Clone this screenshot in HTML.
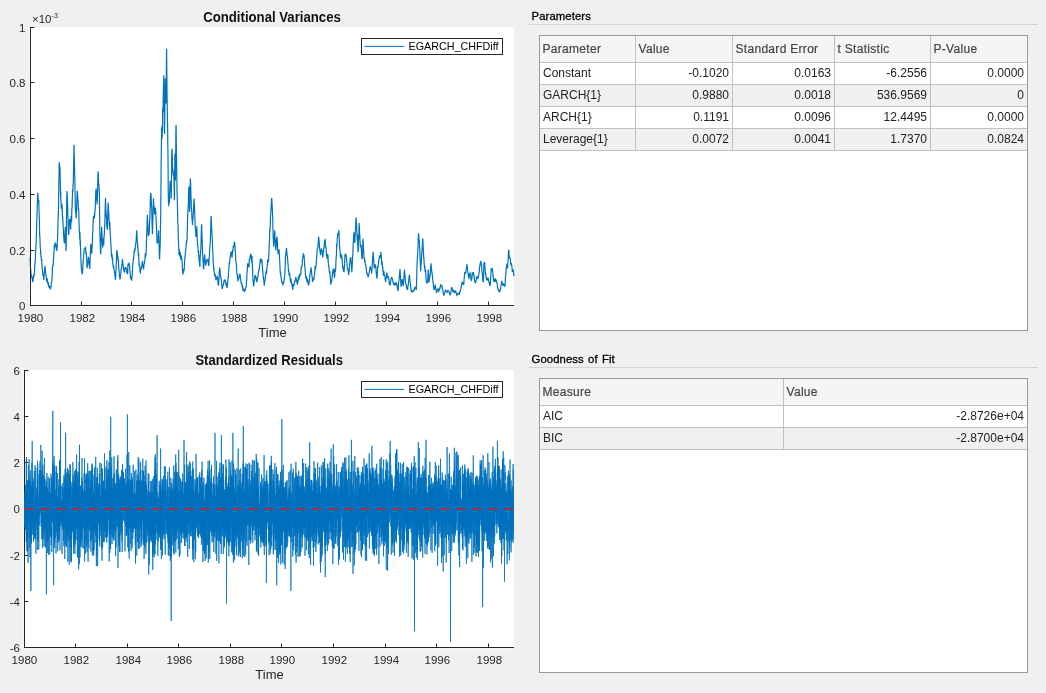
<!DOCTYPE html>
<html><head><meta charset="utf-8"><title>EGARCH</title>
<style>
html,body{margin:0;padding:0}
body{width:1046px;height:693px;background:#f0f0f0;position:relative;overflow:hidden;font-family:"Liberation Sans",sans-serif}
svg{position:absolute;left:0;top:0;will-change:transform}
#t{position:absolute;left:0;top:0;width:1046px;height:693px;will-change:transform}
svg text{font-family:"Liberation Sans",sans-serif}
.tk{font-size:11.5px;fill:#262626}
.lab{font-size:13px;fill:#262626}
.ttl{font-size:13.8px;font-weight:bold;fill:#111}
.lg{font-size:10.75px;fill:#000}
.pt{position:absolute;left:531.5px;font-size:11.3px;line-height:14px;color:#000;white-space:nowrap;letter-spacing:0.1px;word-spacing:1px;-webkit-text-stroke:0.3px #000}
.ul{position:absolute;left:529px;width:509px;height:1px;background:#d4d4d4}
.tb{position:absolute;border:1px solid #999;background:#fff}
.hd{position:absolute;background:#f5f5f5}
.alt{position:absolute;height:21px;background:#f0f0f0}
.hl{position:absolute;height:1px;background:#c0c0c0}
.vl{position:absolute;width:1px;background:#c0c0c0}
.ht{position:absolute;font-size:12px;line-height:14px;color:#444;white-space:nowrap;letter-spacing:0.3px;margin-left:-0.5px;-webkit-text-stroke:0.2px #444}
.ct{position:absolute;font-size:12px;line-height:14px;color:#222;white-space:nowrap}
.ct.r{text-align:right}
</style></head><body>
<svg width="1046" height="693" viewBox="0 0 1046 693">
<rect x="29" y="27" width="485" height="280" fill="#f6f6f6"/><rect x="30" y="27" width="484" height="279" fill="#fff"/>
<path d="M30.03 257.5 30.15 259.7 30.27 263.0 30.39 265.7 30.51 267.0 30.63 269.7 30.75 269.8 30.87 272.0 30.99 272.7 31.11 274.7 31.23 275.6 31.35 277.0 31.47 276.0 31.59 276.1 31.71 277.0 31.83 277.8 31.95 277.2 32.07 276.6 32.19 277.5 32.31 279.0 32.43 280.3 32.55 282.0 32.67 281.7 32.79 281.3 32.91 281.2 33.03 280.9 33.15 280.5 33.27 277.6 33.39 277.3 33.51 275.6 33.63 275.7 33.75 275.4 33.87 275.8 33.99 276.4 34.11 275.6 34.23 274.6 34.35 273.5 34.47 271.5 34.59 270.3 34.71 266.7 34.83 265.1 34.95 264.6 35.07 263.3 35.19 260.0 35.31 260.2 35.43 255.9 35.55 251.2 35.67 250.9 35.79 250.4 35.91 247.5 36.03 245.1 36.15 244.3 36.27 238.8 36.39 234.7 36.51 231.4 36.63 227.1 36.75 220.4 36.87 217.7 36.99 215.3 37.11 210.4 37.23 206.4 37.35 202.5 37.47 198.5 37.59 193.9 37.71 192.8 37.83 195.2 37.95 196.6 38.07 196.9 38.19 197.8 38.31 201.2 38.43 200.4 38.55 203.0 38.67 202.0 38.79 199.9 38.91 206.1 39.03 211.2 39.15 214.5 39.27 216.9 39.39 219.2 39.51 227.3 39.63 233.8 39.75 238.1 39.87 236.3 39.99 240.0 40.11 243.8 40.23 247.3 40.35 248.2 40.47 248.9 40.59 251.3 40.71 255.1 40.83 253.7 40.95 256.2 41.07 257.1 41.19 256.3 41.31 259.8 41.43 260.0 41.55 260.4 41.67 258.8 41.79 261.0 41.91 264.3 42.03 266.5 42.15 267.5 42.27 269.8 42.39 269.3 42.51 270.7 42.63 272.4 42.75 272.1 42.87 274.4 42.99 275.1 43.11 275.1 43.23 274.0 43.35 275.8 43.47 276.0 43.59 278.0 43.71 279.6 43.83 279.4 43.95 277.0 44.07 275.6 44.19 273.7 44.31 272.3 44.43 271.4 44.55 270.4 44.67 269.0 44.79 267.9 44.91 266.9 45.03 266.0 45.15 267.3 45.27 268.5 45.39 270.0 45.51 271.5 45.63 272.7 45.75 274.5 45.87 275.4 45.99 276.5 46.11 275.6 46.23 277.3 46.35 278.6 46.47 279.6 46.59 281.1 46.71 280.7 46.83 281.6 46.95 282.1 47.07 280.1 47.19 278.3 47.31 278.8 47.43 280.3 47.55 281.4 47.67 282.5 47.79 283.4 47.91 283.6 48.03 284.4 48.15 285.0 48.27 282.3 48.39 283.3 48.51 284.1 48.63 285.4 48.75 286.3 48.87 287.2 48.99 285.4 49.11 286.2 49.23 286.0 49.35 286.0 49.47 287.3 49.59 287.2 49.71 287.2 49.83 286.5 49.95 286.3 50.07 287.5 50.19 288.5 50.31 288.9 50.43 288.8 50.55 287.7 50.67 287.9 50.79 288.1 50.91 288.0 51.03 286.2 51.15 285.8 51.27 283.8 51.39 283.5 51.51 283.0 51.63 281.5 51.75 281.1 51.87 280.8 51.99 277.6 52.11 275.5 52.23 275.2 52.35 268.6 52.47 267.3 52.59 265.8 52.71 266.3 52.83 266.7 52.95 265.3 53.07 265.4 53.19 264.0 53.31 261.2 53.43 258.6 53.55 257.9 53.67 256.9 53.79 255.8 53.91 253.4 54.03 250.4 54.15 249.6 54.27 245.7 54.39 245.7 54.51 248.3 54.63 247.1 54.75 246.7 54.87 244.0 54.99 244.7 55.11 243.0 55.23 243.1 55.35 244.7 55.47 243.8 55.59 243.5 55.71 244.3 55.83 244.4 55.95 244.5 56.07 246.1 56.19 247.2 56.31 248.7 56.43 249.8 56.55 250.2 56.67 250.5 56.79 250.5 56.91 248.9 57.03 245.9 57.15 245.8 57.27 245.9 57.39 240.8 57.51 241.2 57.63 234.4 57.75 234.4 57.87 226.6 57.99 221.8 58.11 219.3 58.23 215.7 58.35 213.4 58.47 207.5 58.59 202.2 58.71 192.8 58.83 187.0 58.95 178.8 59.07 170.7 59.19 163.7 59.31 162.3 59.43 164.1 59.55 164.9 59.67 166.7 59.79 166.6 59.91 167.4 60.03 169.1 60.15 175.6 60.27 181.6 60.39 188.3 60.51 192.2 60.63 197.4 60.75 191.0 60.87 198.7 60.99 201.8 61.11 201.3 61.23 207.5 61.35 206.5 61.47 208.9 61.59 206.4 61.71 203.4 61.83 206.4 61.95 205.0 62.07 205.4 62.19 211.4 62.31 211.3 62.43 216.6 62.55 217.0 62.67 216.0 62.79 219.6 62.91 220.1 63.03 224.0 63.15 226.1 63.27 228.8 63.39 228.3 63.51 233.8 63.63 234.7 63.75 238.1 63.87 235.1 63.99 239.3 64.11 242.3 64.23 242.1 64.35 243.5 64.47 242.7 64.59 238.5 64.71 236.8 64.83 235.6 64.95 233.9 65.07 231.5 65.19 229.2 65.31 227.0 65.43 230.1 65.55 234.3 65.67 238.7 65.79 243.5 65.91 246.7 66.03 250.9 66.15 248.1 66.27 239.2 66.39 230.0 66.51 218.3 66.63 208.4 66.75 199.5 66.87 191.1 66.99 192.8 67.11 195.0 67.23 195.4 67.35 199.4 67.47 202.8 67.59 205.3 67.71 208.3 67.83 213.6 67.95 218.0 68.07 219.9 68.19 225.7 68.31 230.4 68.43 231.7 68.55 235.0 68.67 234.8 68.79 234.3 68.91 232.0 69.03 229.7 69.15 223.9 69.27 222.2 69.39 221.4 69.51 219.7 69.63 219.1 69.75 219.6 69.87 219.8 69.99 221.1 70.11 223.4 70.23 225.1 70.35 224.8 70.47 225.4 70.59 228.2 70.71 229.5 70.83 225.5 70.95 218.8 71.07 216.1 71.19 216.6 71.31 218.6 71.43 221.2 71.55 222.5 71.67 220.9 71.79 210.5 71.91 208.3 72.03 207.4 72.15 205.7 72.27 198.7 72.39 197.9 72.51 190.4 72.63 190.0 72.75 190.2 72.87 191.7 72.99 185.2 73.11 184.7 73.23 184.9 73.35 179.0 73.47 172.8 73.59 167.2 73.71 160.0 73.83 152.6 73.95 144.7 74.07 147.1 74.19 152.4 74.31 156.7 74.43 162.8 74.55 167.3 74.67 172.3 74.79 179.2 74.91 185.8 75.03 191.8 75.15 198.6 75.27 204.1 75.39 209.9 75.51 210.3 75.63 213.0 75.75 210.4 75.87 212.4 75.99 216.0 76.11 217.6 76.23 218.3 76.35 212.9 76.47 211.8 76.59 208.2 76.71 204.7 76.83 201.2 76.95 196.3 77.07 194.1 77.19 191.6 77.31 190.9 77.43 192.1 77.55 193.7 77.67 195.7 77.79 198.0 77.91 201.3 78.03 200.4 78.15 202.2 78.27 207.2 78.39 210.2 78.51 207.8 78.63 209.3 78.75 210.5 78.87 213.4 78.99 221.0 79.11 223.9 79.23 229.7 79.35 230.1 79.47 233.0 79.59 234.2 79.71 239.3 79.83 232.1 79.95 232.9 80.07 239.5 80.19 245.3 80.31 239.3 80.43 245.3 80.55 247.9 80.67 250.0 80.79 255.9 80.91 258.0 81.03 262.3 81.15 265.6 81.27 266.5 81.39 267.7 81.51 269.9 81.63 269.6 81.75 270.2 81.87 271.6 81.99 273.1 82.11 274.2 82.23 273.9 82.35 273.6 82.47 272.3 82.59 272.1 82.71 269.1 82.83 268.0 82.95 263.8 83.07 262.4 83.19 260.8 83.31 259.2 83.43 258.9 83.55 258.3 83.67 256.2 83.79 253.2 83.91 252.6 84.03 251.3 84.15 250.5 84.27 249.9 84.39 248.9 84.51 248.9 84.63 248.9 84.75 248.3 84.87 249.2 84.99 249.4 85.11 248.5 85.23 247.4 85.35 247.4 85.47 248.4 85.59 247.7 85.71 250.3 85.83 252.1 85.95 252.8 86.07 254.1 86.19 252.4 86.31 252.4 86.43 253.5 86.55 256.8 86.67 258.4 86.79 259.9 86.91 263.6 87.03 266.7 87.15 268.2 87.27 266.5 87.39 265.0 87.51 265.2 87.63 264.8 87.75 264.0 87.87 263.3 87.99 261.8 88.11 260.3 88.23 259.0 88.35 257.7 88.47 256.7 88.59 258.3 88.71 258.9 88.83 259.9 88.95 261.6 89.07 262.1 89.19 263.8 89.31 265.5 89.43 265.9 89.55 267.7 89.67 269.0 89.79 267.7 89.91 264.6 90.03 262.3 90.15 259.1 90.27 256.4 90.39 253.5 90.51 250.0 90.63 246.8 90.75 243.9 90.87 244.8 90.99 245.9 91.11 246.8 91.23 247.4 91.35 248.9 91.47 250.0 91.59 251.7 91.71 252.5 91.83 253.7 91.95 249.1 92.07 249.5 92.19 245.3 92.31 244.6 92.43 240.2 92.55 234.4 92.67 232.9 92.79 231.9 92.91 229.6 93.03 224.0 93.15 223.0 93.27 220.4 93.39 218.6 93.51 216.7 93.63 216.2 93.75 216.7 93.87 217.2 93.99 217.4 94.11 216.6 94.23 216.8 94.35 218.5 94.47 213.5 94.59 215.2 94.71 216.0 94.83 211.1 94.95 212.3 95.07 210.0 95.19 208.8 95.31 206.1 95.43 202.9 95.55 200.2 95.67 195.2 95.79 191.7 95.91 190.8 96.03 188.7 96.15 189.3 96.27 190.5 96.39 192.5 96.51 194.4 96.63 197.1 96.75 199.6 96.87 201.3 96.99 200.4 97.11 204.4 97.23 201.0 97.35 196.2 97.47 194.1 97.59 190.4 97.71 183.7 97.83 179.0 97.95 175.6 98.07 171.4 98.19 172.6 98.31 175.3 98.43 178.6 98.55 183.3 98.67 184.7 98.79 183.8 98.91 184.0 99.03 186.6 99.15 188.7 99.27 192.1 99.39 195.7 99.51 205.0 99.63 215.7 99.75 224.6 99.87 233.4 99.99 235.8 100.11 241.7 100.23 242.4 100.35 247.3 100.47 250.7 100.59 253.4 100.71 253.5 100.83 249.9 100.95 247.2 101.07 244.0 101.19 239.0 101.31 235.6 101.43 232.9 101.55 229.6 101.67 226.8 101.79 229.7 101.91 232.7 102.03 235.8 102.15 238.7 102.27 241.3 102.39 240.8 102.51 243.6 102.63 247.7 102.75 241.7 102.87 238.6 102.99 239.2 103.11 240.8 103.23 242.5 103.35 242.9 103.47 244.2 103.59 244.3 103.71 245.5 103.83 242.9 103.95 237.3 104.07 235.7 104.19 236.6 104.31 234.1 104.43 231.7 104.55 229.8 104.67 228.5 104.79 224.5 104.91 219.3 105.03 215.1 105.15 210.2 105.27 205.6 105.39 200.1 105.51 197.9 105.63 201.2 105.75 204.6 105.87 208.5 105.99 211.1 106.11 213.8 106.23 216.4 106.35 214.6 106.47 218.2 106.59 222.2 106.71 226.2 106.83 223.2 106.95 226.4 107.07 226.5 107.19 228.5 107.31 229.6 107.43 227.9 107.55 222.2 107.67 216.9 107.79 213.6 107.91 209.9 108.03 207.4 108.15 205.2 108.27 202.6 108.39 205.5 108.51 208.0 108.63 211.5 108.75 212.7 108.87 216.0 108.99 218.6 109.11 220.3 109.23 222.4 109.35 225.7 109.47 222.7 109.59 225.6 109.71 229.4 109.83 222.1 109.95 226.6 110.07 229.9 110.19 232.7 110.31 235.2 110.43 236.5 110.55 237.3 110.67 240.6 110.79 243.7 110.91 243.4 111.03 246.8 111.15 248.7 111.27 250.2 111.39 253.1 111.51 255.6 111.63 257.2 111.75 256.0 111.87 253.7 111.99 256.0 112.11 255.9 112.23 257.1 112.35 259.8 112.47 260.0 112.59 257.8 112.71 260.2 112.83 263.0 112.95 265.0 113.07 264.2 113.19 266.5 113.31 267.0 113.43 267.9 113.55 267.6 113.67 265.6 113.79 267.9 113.91 269.3 114.03 270.2 114.15 269.8 114.27 271.3 114.39 272.0 114.51 272.9 114.63 272.2 114.75 273.3 114.87 275.4 114.99 275.4 115.11 277.1 115.23 278.3 115.35 278.9 115.47 279.8 115.59 278.4 115.71 277.1 115.83 271.6 115.95 269.6 116.07 268.2 116.19 266.2 116.31 263.0 116.43 260.1 116.55 256.9 116.67 254.5 116.79 252.1 116.91 250.0 117.03 250.6 117.15 251.8 117.27 253.3 117.39 254.3 117.51 256.0 117.63 255.8 117.75 256.9 117.87 259.2 117.99 256.5 118.11 258.0 118.23 261.0 118.35 262.1 118.47 259.0 118.59 263.2 118.71 266.2 118.83 268.3 118.95 269.4 119.07 270.9 119.19 271.8 119.31 274.1 119.43 275.9 119.55 277.4 119.67 277.2 119.79 278.0 119.91 279.5 120.03 278.9 120.15 279.1 120.27 277.9 120.39 275.3 120.51 275.1 120.63 274.4 120.75 272.7 120.87 273.0 120.99 271.2 121.11 268.7 121.23 269.3 121.35 268.5 121.47 269.1 121.59 268.8 121.71 266.8 121.83 265.3 121.95 264.8 122.07 263.9 122.19 262.6 122.31 261.3 122.43 259.7 122.55 259.8 122.67 261.3 122.79 262.0 122.91 263.4 123.03 264.5 123.15 264.7 123.27 266.3 123.39 268.1 123.51 267.5 123.63 269.3 123.75 270.1 123.87 268.9 123.99 271.5 124.11 270.0 124.23 270.4 124.35 271.3 124.47 272.1 124.59 272.5 124.71 271.0 124.83 267.7 124.95 268.2 125.07 268.5 125.19 268.5 125.31 268.2 125.43 268.0 125.55 267.8 125.67 267.6 125.79 267.2 125.91 267.6 126.03 267.9 126.15 268.1 126.27 268.6 126.39 269.2 126.51 270.1 126.63 270.2 126.75 271.5 126.87 272.4 126.99 273.0 127.11 271.5 127.23 273.3 127.35 274.2 127.47 273.1 127.59 274.0 127.71 272.5 127.83 267.9 127.95 264.7 128.07 263.7 128.19 265.3 128.31 265.7 128.43 265.1 128.55 264.9 128.67 264.9 128.79 264.2 128.91 263.8 129.03 263.0 129.15 263.0 129.27 263.9 129.39 265.2 129.51 265.6 129.63 267.0 129.75 268.4 129.87 269.7 129.99 270.9 130.11 271.8 130.23 273.4 130.35 275.4 130.47 276.4 130.59 278.4 130.71 278.7 130.83 278.2 130.95 276.7 131.07 278.0 131.19 279.6 131.31 278.4 131.43 277.2 131.55 279.1 131.67 280.8 131.79 279.5 131.91 277.3 132.03 276.2 132.15 276.0 132.27 272.8 132.39 272.1 132.51 269.1 132.63 265.7 132.75 263.9 132.87 264.0 132.99 263.4 133.11 263.0 133.23 259.7 133.35 260.3 133.47 258.4 133.59 258.5 133.71 257.0 133.83 256.0 133.95 256.8 134.07 251.3 134.19 251.2 134.31 252.7 134.43 251.1 134.55 250.7 134.67 251.6 134.79 249.4 134.91 249.5 135.03 249.1 135.15 250.4 135.27 246.2 135.39 246.5 135.51 246.1 135.63 244.1 135.75 244.3 135.87 243.4 135.99 241.7 136.11 240.4 136.23 238.2 136.35 236.4 136.47 234.1 136.59 232.2 136.71 230.3 136.83 232.6 136.95 234.6 137.07 237.1 137.19 239.6 137.31 241.3 137.43 241.7 137.55 243.8 137.67 246.1 137.79 248.2 137.91 245.4 138.03 249.2 138.15 250.0 138.27 253.6 138.39 255.9 138.51 253.2 138.63 252.8 138.75 258.4 138.87 260.9 138.99 264.4 139.11 266.1 139.23 262.8 139.35 266.2 139.47 266.0 139.59 266.9 139.71 266.8 139.83 267.0 139.95 269.3 140.07 272.0 140.19 271.6 140.31 273.7 140.43 272.5 140.55 270.9 140.67 269.5 140.79 269.4 140.91 269.5 141.03 268.9 141.15 269.3 141.27 269.1 141.39 266.2 141.51 267.6 141.63 266.7 141.75 266.4 141.87 265.9 141.99 263.0 142.11 265.2 142.23 266.1 142.35 260.7 142.47 261.7 142.59 263.9 142.71 266.3 142.83 265.8 142.95 267.0 143.07 265.7 143.19 266.2 143.31 267.5 143.43 268.2 143.55 269.4 143.67 268.8 143.79 266.3 143.91 264.0 144.03 264.3 144.15 264.1 144.27 264.4 144.39 262.1 144.51 260.9 144.63 261.8 144.75 260.9 144.87 260.2 144.99 260.5 145.11 256.3 145.23 253.3 145.35 254.1 145.47 255.7 145.59 256.4 145.71 256.6 145.83 256.4 145.95 254.4 146.07 253.2 146.19 250.8 146.31 247.5 146.43 243.1 146.55 239.4 146.67 235.0 146.79 231.5 146.91 227.9 147.03 224.8 147.15 220.7 147.27 217.7 147.39 214.8 147.51 217.4 147.63 220.3 147.75 222.0 147.87 224.6 147.99 227.8 148.11 230.8 148.23 234.4 148.35 236.1 148.47 235.5 148.59 233.0 148.71 231.7 148.83 232.3 148.95 234.0 149.07 234.1 149.19 232.9 149.31 231.9 149.43 225.5 149.55 223.5 149.67 222.1 149.79 217.7 149.91 215.7 150.03 211.9 150.15 209.0 150.27 202.1 150.39 197.4 150.51 195.8 150.63 193.1 150.75 193.5 150.87 193.8 150.99 193.8 151.11 196.7 151.23 199.3 151.35 203.3 151.47 206.4 151.59 205.4 151.71 207.7 151.83 212.5 151.95 219.0 152.07 223.3 152.19 226.3 152.31 230.3 152.43 234.3 152.55 232.2 152.67 224.7 152.79 222.3 152.91 218.9 153.03 214.0 153.15 209.5 153.27 205.5 153.39 200.7 153.51 198.4 153.63 201.3 153.75 202.5 153.87 205.0 153.99 205.9 154.11 208.0 154.23 207.9 154.35 209.8 154.47 212.2 154.59 213.9 154.71 214.3 154.83 213.2 154.95 212.8 155.07 210.9 155.19 210.5 155.31 208.4 155.43 208.3 155.55 209.2 155.67 210.8 155.79 213.3 155.91 215.9 156.03 217.1 156.15 221.3 156.27 223.7 156.39 224.6 156.51 228.4 156.63 232.0 156.75 236.2 156.87 239.5 156.99 242.2 157.11 243.6 157.23 241.7 157.35 239.7 157.47 241.1 157.59 242.2 157.71 242.5 157.83 242.0 157.95 240.1 158.07 238.9 158.19 236.7 158.31 234.7 158.43 232.1 158.55 230.4 158.67 233.7 158.79 237.3 158.91 241.3 159.03 245.3 159.15 248.2 159.27 252.5 159.39 255.5 159.51 258.7 159.63 259.5 159.75 254.2 159.87 251.5 159.99 249.4 160.11 246.1 160.23 242.7 160.35 234.2 160.47 224.5 160.59 225.1 160.71 214.7 160.83 199.8 160.95 187.8 161.07 171.9 161.19 159.0 161.31 151.1 161.43 143.3 161.55 127.3 161.67 134.7 161.79 134.4 161.91 138.3 162.03 138.8 162.15 137.3 162.27 124.9 162.39 126.3 162.51 131.0 162.63 112.9 162.75 108.0 162.87 111.1 162.99 111.9 163.11 108.3 163.23 97.1 163.35 92.7 163.47 85.7 163.59 82.3 163.71 76.7 163.83 75.2 163.95 86.2 164.07 95.4 164.19 104.5 164.31 117.6 164.43 130.2 164.55 134.1 164.67 127.0 164.79 116.6 164.91 102.5 165.03 95.0 165.15 87.8 165.27 79.3 165.39 79.2 165.51 83.3 165.63 89.1 165.75 92.7 165.87 100.3 165.99 103.6 166.11 96.1 166.23 84.8 166.35 74.2 166.47 61.9 166.59 48.8 166.71 59.5 166.83 72.1 166.95 82.0 167.07 96.1 167.19 103.9 167.31 109.3 167.43 117.9 167.55 126.3 167.67 130.0 167.79 144.8 167.91 148.6 168.03 159.9 168.15 176.6 168.27 191.6 168.39 198.7 168.51 203.4 168.63 202.5 168.75 206.3 168.87 197.7 168.99 202.5 169.11 202.6 169.23 203.0 169.35 202.9 169.47 201.7 169.59 192.8 169.71 190.6 169.83 188.4 169.95 185.9 170.07 182.9 170.19 181.5 170.31 180.9 170.43 182.8 170.55 183.9 170.67 185.0 170.79 187.3 170.91 189.9 171.03 193.9 171.15 197.9 171.27 198.7 171.39 187.3 171.51 175.3 171.63 164.6 171.75 152.8 171.87 148.7 171.99 149.3 172.11 151.8 172.23 154.5 172.35 158.4 172.47 163.6 172.59 167.8 172.71 168.6 172.83 172.8 172.95 172.0 173.07 170.3 173.19 174.2 173.31 175.2 173.43 172.3 173.55 175.8 173.67 175.9 173.79 174.3 173.91 180.8 174.03 180.5 174.15 187.1 174.27 194.1 174.39 200.2 174.51 190.5 174.63 179.0 174.75 166.0 174.87 153.5 174.99 156.3 175.11 163.5 175.23 171.8 175.35 180.6 175.47 176.9 175.59 165.0 175.71 153.0 175.83 139.3 175.95 125.4 176.07 125.1 176.19 133.7 176.31 143.5 176.43 153.3 176.55 158.5 176.67 167.7 176.79 175.9 176.91 181.3 177.03 189.4 177.15 193.9 177.27 198.5 177.39 201.8 177.51 210.7 177.63 212.9 177.75 218.7 177.87 224.7 177.99 224.3 178.11 228.3 178.23 233.9 178.35 237.9 178.47 241.7 178.59 245.0 178.71 247.5 178.83 248.8 178.95 252.8 179.07 255.0 179.19 250.0 179.31 248.9 179.43 252.6 179.55 251.0 179.67 254.3 179.79 255.9 179.91 255.2 180.03 255.8 180.15 253.7 180.27 257.3 180.39 252.2 180.51 256.2 180.63 256.9 180.75 259.0 180.87 258.9 180.99 257.9 181.11 257.7 181.23 255.4 181.35 255.8 181.47 257.7 181.59 256.7 181.71 258.3 181.83 259.7 181.95 260.5 182.07 261.8 182.19 264.3 182.31 266.8 182.43 269.1 182.55 271.3 182.67 273.1 182.79 273.4 182.91 273.4 183.03 274.5 183.15 273.0 183.27 270.6 183.39 271.8 183.51 270.3 183.63 268.7 183.75 269.8 183.87 271.1 183.99 269.7 184.11 270.1 184.23 269.5 184.35 267.3 184.47 263.1 184.59 262.1 184.71 259.7 184.83 259.1 184.95 256.9 185.07 257.4 185.19 255.1 185.31 253.3 185.43 251.6 185.55 250.8 185.67 250.7 185.79 250.6 185.91 248.4 186.03 247.8 186.15 243.1 186.27 243.3 186.39 242.5 186.51 243.8 186.63 240.7 186.75 240.0 186.87 240.9 186.99 240.8 187.11 238.7 187.23 231.1 187.35 231.3 187.47 221.5 187.59 215.8 187.71 214.7 187.83 214.3 187.95 208.9 188.07 210.6 188.19 209.2 188.31 204.7 188.43 200.8 188.55 195.3 188.67 191.4 188.79 187.2 188.91 186.5 189.03 191.3 189.15 195.3 189.27 198.9 189.39 204.1 189.51 208.0 189.63 212.0 189.75 206.6 189.87 200.5 189.99 194.2 190.11 188.6 190.23 183.4 190.35 178.4 190.47 179.5 190.59 182.6 190.71 186.3 190.83 190.5 190.95 195.2 191.07 200.4 191.19 201.2 191.31 206.8 191.43 208.2 191.55 209.3 191.67 210.5 191.79 214.0 191.91 216.6 192.03 220.7 192.15 218.9 192.27 220.5 192.39 223.7 192.51 225.0 192.63 220.5 192.75 220.7 192.87 220.2 192.99 217.9 193.11 216.5 193.23 214.8 193.35 213.2 193.47 210.7 193.59 206.5 193.71 205.2 193.83 202.5 193.95 202.0 194.07 200.3 194.19 198.6 194.31 201.9 194.43 205.0 194.55 209.2 194.67 212.5 194.79 214.5 194.91 217.2 195.03 222.4 195.15 225.3 195.27 227.7 195.39 227.2 195.51 230.4 195.63 230.0 195.75 234.5 195.87 236.3 195.99 237.0 196.11 234.2 196.23 232.8 196.35 236.5 196.47 234.4 196.59 235.2 196.71 235.7 196.83 230.5 196.95 226.3 197.07 232.9 197.19 237.7 197.31 242.3 197.43 242.3 197.55 242.1 197.67 246.3 197.79 246.1 197.91 247.0 198.03 249.5 198.15 250.5 198.27 253.0 198.39 250.6 198.51 250.7 198.63 254.1 198.75 257.0 198.87 254.6 198.99 257.7 199.11 260.4 199.23 260.3 199.35 260.3 199.47 262.9 199.59 263.9 199.71 265.2 199.83 266.9 199.95 265.9 200.07 258.4 200.19 257.6 200.31 255.2 200.43 253.9 200.55 251.5 200.67 250.7 200.79 250.4 200.91 246.9 201.03 243.4 201.15 238.9 201.27 234.3 201.39 229.6 201.51 224.8 201.63 224.8 201.75 228.3 201.87 232.0 201.99 235.8 202.11 237.6 202.23 242.0 202.35 246.3 202.47 249.2 202.59 253.1 202.71 254.5 202.83 256.3 202.95 259.1 203.07 262.6 203.19 265.1 203.31 264.8 203.43 267.9 203.55 269.0 203.67 269.2 203.79 266.3 203.91 264.8 204.03 262.6 204.15 260.4 204.27 259.4 204.39 258.0 204.51 255.7 204.63 254.6 204.75 255.6 204.87 256.8 204.99 258.1 205.11 259.7 205.23 261.5 205.35 261.2 205.47 263.2 205.59 264.7 205.71 264.4 205.83 265.6 205.95 264.9 206.07 261.7 206.19 261.3 206.31 261.5 206.43 261.6 206.55 260.5 206.67 261.1 206.79 260.3 206.91 260.6 207.03 259.9 207.15 259.7 207.27 259.8 207.39 259.6 207.51 259.3 207.63 259.3 207.75 259.6 207.87 260.4 207.99 260.7 208.11 261.6 208.23 262.8 208.35 263.5 208.47 264.8 208.59 264.5 208.71 266.0 208.83 264.1 208.95 264.7 209.07 258.6 209.19 258.9 209.31 256.1 209.43 255.7 209.55 253.5 209.67 249.5 209.79 248.3 209.91 246.2 210.03 245.3 210.15 245.0 210.27 241.9 210.39 238.2 210.51 233.3 210.63 231.2 210.75 228.0 210.87 223.8 210.99 220.8 211.11 217.4 211.23 216.1 211.35 218.6 211.47 221.8 211.59 225.5 211.71 229.4 211.83 231.8 211.95 234.7 212.07 235.1 212.19 238.7 212.31 241.0 212.43 241.8 212.55 246.3 212.67 250.5 212.79 251.6 212.91 253.7 213.03 256.8 213.15 260.3 213.27 262.9 213.39 264.7 213.51 265.8 213.63 267.1 213.75 269.9 213.87 267.3 213.99 270.3 214.11 271.3 214.23 271.5 214.35 273.6 214.47 274.6 214.59 276.1 214.71 275.1 214.83 275.2 214.95 275.1 215.07 273.8 215.19 275.3 215.31 275.4 215.43 276.3 215.55 276.7 215.67 278.2 215.79 278.8 215.91 280.3 216.03 279.7 216.15 279.7 216.27 279.3 216.39 278.5 216.51 277.8 216.63 277.7 216.75 277.4 216.87 277.2 216.99 277.0 217.11 276.6 217.23 276.3 217.35 276.4 217.47 277.3 217.59 278.2 217.71 279.4 217.83 280.5 217.95 281.8 218.07 282.9 218.19 284.0 218.31 283.9 218.43 285.0 218.55 285.7 218.67 284.0 218.79 281.4 218.91 279.4 219.03 277.6 219.15 275.6 219.27 273.1 219.39 271.0 219.51 268.7 219.63 267.5 219.75 268.3 219.87 269.0 219.99 270.1 220.11 271.2 220.23 272.7 220.35 273.9 220.47 274.7 220.59 275.3 220.71 276.8 220.83 277.3 220.95 279.3 221.07 278.9 221.19 279.3 221.31 279.4 221.43 281.4 221.55 282.8 221.67 284.1 221.79 285.2 221.91 286.1 222.03 287.3 222.15 288.4 222.27 287.6 222.39 288.9 222.51 287.9 222.63 287.3 222.75 285.7 222.87 285.0 222.99 285.4 223.11 285.5 223.23 285.4 223.35 284.8 223.47 284.5 223.59 283.8 223.71 282.5 223.83 281.8 223.95 281.2 224.07 280.4 224.19 279.9 224.31 280.2 224.43 280.4 224.55 280.6 224.67 280.3 224.79 280.6 224.91 281.3 225.03 279.7 225.15 280.6 225.27 281.6 225.39 280.8 225.51 281.9 225.63 282.9 225.75 283.8 225.87 284.5 225.99 283.6 226.11 283.6 226.23 282.5 226.35 284.1 226.47 285.7 226.59 286.3 226.71 286.4 226.83 286.5 226.95 287.3 227.07 287.3 227.19 287.0 227.31 286.4 227.43 284.9 227.55 284.2 227.67 283.5 227.79 282.0 227.91 280.2 228.03 277.5 228.15 277.3 228.27 276.8 228.39 276.9 228.51 271.8 228.63 270.5 228.75 270.7 228.87 268.4 228.99 268.3 229.11 266.2 229.23 262.0 229.35 263.3 229.47 263.5 229.59 263.9 229.71 261.4 229.83 260.4 229.95 259.7 230.07 258.4 230.19 256.9 230.31 256.1 230.43 256.1 230.55 255.5 230.67 254.4 230.79 253.8 230.91 252.6 231.03 251.5 231.15 252.3 231.27 252.8 231.39 252.7 231.51 253.7 231.63 254.4 231.75 254.3 231.87 255.6 231.99 257.6 232.11 256.6 232.23 254.7 232.35 254.0 232.47 250.4 232.59 251.8 232.71 252.5 232.83 249.6 232.95 250.2 233.07 250.3 233.19 246.3 233.31 246.2 233.43 247.6 233.55 246.6 233.67 246.1 233.79 246.0 233.91 246.3 234.03 246.3 234.15 243.9 234.27 243.5 234.39 242.6 234.51 241.6 234.63 241.9 234.75 243.8 234.87 245.8 234.99 246.9 235.11 248.7 235.23 250.1 235.35 252.2 235.47 253.6 235.59 256.6 235.71 259.2 235.83 260.7 235.95 262.2 236.07 261.5 236.19 263.3 236.31 264.0 236.43 265.6 236.55 267.3 236.67 270.3 236.79 272.7 236.91 272.9 237.03 275.0 237.15 274.4 237.27 274.4 237.39 276.2 237.51 277.2 237.63 277.8 237.75 278.7 237.87 280.0 237.99 281.4 238.11 277.1 238.23 278.0 238.35 278.7 238.47 278.9 238.59 278.8 238.71 279.0 238.83 279.0 238.95 278.2 239.07 276.6 239.19 276.5 239.31 275.7 239.43 274.6 239.55 274.8 239.67 274.5 239.79 274.1 239.91 273.5 240.03 274.5 240.15 275.7 240.27 276.4 240.39 277.4 240.51 277.6 240.63 278.5 240.75 279.8 240.87 281.3 240.99 282.2 241.11 283.4 241.23 282.7 241.35 282.1 241.47 284.1 241.59 283.7 241.71 283.7 241.83 283.3 241.95 284.7 242.07 285.5 242.19 286.6 242.31 287.8 242.43 285.0 242.55 286.2 242.67 287.9 242.79 289.0 242.91 290.2 243.03 290.1 243.15 288.9 243.27 288.9 243.39 289.8 243.51 290.5 243.63 290.9 243.75 290.5 243.87 289.9 243.99 288.9 244.11 289.5 244.23 290.3 244.35 291.1 244.47 290.0 244.59 290.7 244.71 291.0 244.83 290.7 244.95 290.9 245.07 290.4 245.19 289.7 245.31 289.6 245.43 288.8 245.55 288.2 245.67 288.0 245.79 287.7 245.91 286.8 246.03 286.6 246.15 286.2 246.27 285.8 246.39 284.8 246.51 281.0 246.63 280.3 246.75 279.7 246.87 275.4 246.99 273.0 247.11 271.5 247.23 271.0 247.35 270.2 247.47 266.5 247.59 264.6 247.71 264.4 247.83 263.8 247.95 263.9 248.07 264.9 248.19 265.2 248.31 264.7 248.43 265.4 248.55 266.0 248.67 267.0 248.79 267.0 248.91 267.3 249.03 265.5 249.15 262.7 249.27 259.5 249.39 260.6 249.51 259.2 249.63 259.2 249.75 258.6 249.87 258.3 249.99 257.8 250.11 257.2 250.23 256.2 250.35 255.6 250.47 254.7 250.59 254.5 250.71 254.5 250.83 254.0 250.95 254.3 251.07 255.3 251.19 256.4 251.31 257.4 251.43 259.4 251.55 261.6 251.67 262.7 251.79 262.2 251.91 259.2 252.03 256.1 252.15 260.6 252.27 262.9 252.39 265.8 252.51 268.8 252.63 271.8 252.75 274.6 252.87 276.0 252.99 278.2 253.11 280.5 253.23 282.0 253.35 283.0 253.47 284.9 253.59 286.5 253.71 285.9 253.83 284.7 253.95 283.9 254.07 282.4 254.19 281.6 254.31 281.0 254.43 280.3 254.55 279.6 254.67 278.5 254.79 277.1 254.91 276.5 255.03 275.7 255.15 274.8 255.27 275.3 255.39 275.8 255.51 276.3 255.63 277.0 255.75 277.4 255.87 277.6 255.99 277.8 256.11 278.3 256.23 278.3 256.35 279.4 256.47 280.1 256.59 281.2 256.71 281.1 256.83 281.4 256.95 281.3 257.07 281.0 257.19 280.2 257.31 278.5 257.43 276.6 257.55 277.1 257.67 277.8 257.79 276.3 257.91 276.0 258.03 275.5 258.15 275.3 258.27 274.4 258.39 271.2 258.51 271.9 258.63 272.0 258.75 271.5 258.87 270.2 258.99 268.4 259.11 269.9 259.23 269.0 259.35 269.4 259.47 267.6 259.59 266.1 259.71 265.6 259.83 263.6 259.95 264.3 260.07 262.1 260.19 261.9 260.31 261.2 260.43 258.6 260.55 259.7 260.67 259.6 260.79 261.3 260.91 261.0 261.03 261.9 261.15 262.2 261.27 262.2 261.39 261.4 261.51 260.9 261.63 260.1 261.75 259.1 261.87 260.6 261.99 261.7 262.11 263.1 262.23 265.0 262.35 266.8 262.47 268.3 262.59 268.6 262.71 270.7 262.83 271.6 262.95 273.3 263.07 275.3 263.19 276.7 263.31 276.6 263.43 277.0 263.55 278.1 263.67 279.8 263.79 280.0 263.91 281.8 264.03 283.4 264.15 284.1 264.27 285.1 264.39 285.1 264.51 283.4 264.63 282.4 264.75 281.4 264.87 280.0 264.99 280.6 265.11 280.3 265.23 278.7 265.35 276.3 265.47 276.0 265.59 275.5 265.71 275.1 265.83 274.4 265.95 272.6 266.07 270.7 266.19 272.2 266.31 272.2 266.43 273.6 266.55 272.7 266.67 269.5 266.79 268.5 266.91 268.6 267.03 266.6 267.15 266.8 267.27 265.4 267.39 264.3 267.51 264.9 267.63 259.5 267.75 260.4 267.87 262.4 267.99 260.7 268.11 261.0 268.23 260.9 268.35 261.5 268.47 261.4 268.59 258.5 268.71 256.7 268.83 254.7 268.95 254.4 269.07 247.6 269.19 247.1 269.31 241.8 269.43 240.6 269.55 237.3 269.67 230.6 269.79 230.7 269.91 230.8 270.03 229.4 270.15 227.1 270.27 225.5 270.39 222.2 270.51 215.1 270.63 214.3 270.75 213.3 270.87 212.0 270.99 209.3 271.11 208.4 271.23 205.5 271.35 203.8 271.47 201.5 271.59 198.6 271.71 198.1 271.83 199.9 271.95 201.2 272.07 203.9 272.19 207.2 272.31 208.0 272.43 210.9 272.55 215.0 272.67 218.1 272.79 222.8 272.91 228.3 273.03 230.2 273.15 236.2 273.27 238.5 273.39 239.5 273.51 242.8 273.63 246.1 273.75 246.6 273.87 243.9 273.99 242.5 274.11 240.8 274.23 237.5 274.35 235.5 274.47 234.2 274.59 232.3 274.71 230.4 274.83 232.8 274.95 235.2 275.07 238.0 275.19 239.7 275.31 241.9 275.43 243.8 275.55 245.5 275.67 249.3 275.79 250.3 275.91 249.7 276.03 247.8 276.15 247.1 276.27 245.9 276.39 240.4 276.51 240.4 276.63 238.5 276.75 238.4 276.87 237.8 276.99 236.8 277.11 238.5 277.23 240.4 277.35 242.8 277.47 244.3 277.59 246.5 277.71 248.9 277.83 251.5 277.95 251.5 278.07 253.5 278.19 253.4 278.31 252.8 278.43 252.3 278.55 251.1 278.67 250.4 278.79 250.0 278.91 249.8 279.03 249.4 279.15 251.5 279.27 253.3 279.39 255.8 279.51 257.8 279.63 260.3 279.75 261.8 279.87 264.3 279.99 267.2 280.11 269.8 280.23 271.8 280.35 273.6 280.47 273.8 280.59 271.8 280.71 274.3 280.83 275.1 280.95 276.6 281.07 277.8 281.19 277.0 281.31 278.2 281.43 279.6 281.55 280.3 281.67 281.2 281.79 282.4 281.91 282.5 282.03 282.5 282.15 282.4 282.27 282.9 282.39 283.2 282.51 283.7 282.63 282.7 282.75 282.8 282.87 284.2 282.99 284.8 283.11 284.7 283.23 283.9 283.35 282.7 283.47 282.9 283.59 283.2 283.71 282.3 283.83 282.3 283.95 281.0 284.07 279.5 284.19 279.1 284.31 279.7 284.43 277.6 284.55 276.6 284.67 276.2 284.79 275.3 284.91 272.5 285.03 270.7 285.15 266.3 285.27 264.1 285.39 258.0 285.51 256.5 285.63 254.5 285.75 254.6 285.87 254.0 285.99 252.7 286.11 251.4 286.23 249.9 286.35 248.6 286.47 248.6 286.59 249.7 286.71 250.7 286.83 251.8 286.95 253.2 287.07 254.4 287.19 255.7 287.31 255.8 287.43 257.3 287.55 257.6 287.67 260.4 287.79 261.0 287.91 262.9 288.03 263.6 288.15 267.1 288.27 266.6 288.39 269.2 288.51 271.1 288.63 272.0 288.75 270.0 288.87 272.2 288.99 273.7 289.11 275.8 289.23 275.1 289.35 275.7 289.47 274.9 289.59 272.8 289.71 273.8 289.83 275.4 289.95 276.9 290.07 277.8 290.19 278.3 290.31 280.1 290.43 281.3 290.55 281.8 290.67 282.1 290.79 282.3 290.91 281.5 291.03 278.6 291.15 280.7 291.27 282.4 291.39 282.3 291.51 282.5 291.63 283.7 291.75 283.0 291.87 283.6 291.99 285.3 292.11 285.8 292.23 286.2 292.35 287.3 292.47 288.1 292.59 288.2 292.71 289.5 292.83 289.8 292.95 288.3 293.07 285.3 293.19 285.4 293.31 285.1 293.43 285.3 293.55 285.3 293.67 285.2 293.79 285.6 293.91 285.5 294.03 285.1 294.15 284.9 294.27 283.1 294.39 283.3 294.51 282.2 294.63 281.5 294.75 281.6 294.87 281.7 294.99 281.5 295.11 280.8 295.23 280.4 295.35 279.6 295.47 279.1 295.59 278.4 295.71 277.6 295.83 277.5 295.95 278.0 296.07 278.7 296.19 279.4 296.31 280.2 296.43 279.9 296.55 280.4 296.67 280.2 296.79 280.6 296.91 281.0 297.03 282.0 297.15 283.6 297.27 284.8 297.39 283.1 297.51 283.1 297.63 282.9 297.75 280.5 297.87 281.1 297.99 281.2 298.11 279.5 298.23 278.7 298.35 276.6 298.47 278.1 298.59 279.3 298.71 278.5 298.83 279.5 298.95 279.3 299.07 279.0 299.19 275.9 299.31 274.3 299.43 275.2 299.55 276.3 299.67 275.8 299.79 276.1 299.91 275.8 300.03 274.7 300.15 275.3 300.27 275.3 300.39 275.5 300.51 274.3 300.63 274.4 300.75 274.2 300.87 274.0 300.99 271.1 301.11 268.3 301.23 268.4 301.35 267.6 301.47 267.6 301.59 266.3 301.71 267.1 301.83 267.0 301.95 266.3 302.07 265.1 302.19 263.1 302.31 260.5 302.43 259.7 302.55 259.3 302.67 259.0 302.79 258.4 302.91 256.6 303.03 255.7 303.15 255.2 303.27 254.4 303.39 253.4 303.51 254.1 303.63 254.8 303.75 255.0 303.87 255.9 303.99 254.7 304.11 256.0 304.23 258.2 304.35 260.0 304.47 262.3 304.59 264.7 304.71 266.1 304.83 266.3 304.95 267.8 305.07 269.7 305.19 271.0 305.31 272.7 305.43 274.5 305.55 275.5 305.67 276.6 305.79 276.3 305.91 277.8 306.03 278.9 306.15 276.9 306.27 277.1 306.39 277.0 306.51 277.9 306.63 279.2 306.75 280.5 306.87 281.6 306.99 281.5 307.11 279.7 307.23 280.5 307.35 279.7 307.47 279.6 307.59 280.0 307.71 280.8 307.83 280.9 307.95 282.5 308.07 283.4 308.19 284.4 308.31 284.6 308.43 284.1 308.55 283.7 308.67 284.9 308.79 284.7 308.91 283.9 309.03 284.1 309.15 281.6 309.27 280.1 309.39 279.3 309.51 278.6 309.63 276.1 309.75 276.1 309.87 275.6 309.99 274.7 310.11 273.5 310.23 272.6 310.35 272.4 310.47 271.6 310.59 270.8 310.71 269.8 310.83 269.0 310.95 267.9 311.07 267.5 311.19 268.2 311.31 269.4 311.43 270.1 311.55 271.4 311.67 273.0 311.79 274.3 311.91 275.4 312.03 277.0 312.15 277.5 312.27 278.2 312.39 279.9 312.51 281.4 312.63 282.0 312.75 281.3 312.87 280.5 312.99 280.9 313.11 280.5 313.23 279.2 313.35 278.7 313.47 279.4 313.59 279.9 313.71 278.8 313.83 277.2 313.95 277.9 314.07 278.0 314.19 276.7 314.31 275.6 314.43 274.7 314.55 275.0 314.67 272.5 314.79 270.7 314.91 270.5 315.03 266.0 315.15 267.9 315.27 268.5 315.39 269.1 315.51 268.4 315.63 269.4 315.75 266.1 315.87 266.6 315.99 265.9 316.11 263.5 316.23 263.5 316.35 259.8 316.47 259.3 316.59 260.0 316.71 256.1 316.83 255.4 316.95 254.6 317.07 250.3 317.19 250.2 317.31 248.9 317.43 248.5 317.55 248.0 317.67 248.1 317.79 248.0 317.91 247.1 318.03 245.6 318.15 242.9 318.27 242.0 318.39 239.8 318.51 238.0 318.63 236.9 318.75 237.5 318.87 238.9 318.99 239.8 319.11 241.2 319.23 242.6 319.35 244.2 319.47 246.3 319.59 247.6 319.71 249.4 319.83 249.0 319.95 251.7 320.07 252.0 320.19 252.1 320.31 254.2 320.43 253.5 320.55 254.7 320.67 255.2 320.79 251.5 320.91 251.0 321.03 250.3 321.15 250.2 321.27 249.1 321.39 249.0 321.51 249.4 321.63 249.4 321.75 249.6 321.87 250.2 321.99 251.0 322.11 252.3 322.23 252.3 322.35 253.3 322.47 254.4 322.59 256.1 322.71 257.4 322.83 256.1 322.95 256.0 323.07 255.3 323.19 251.3 323.31 251.5 323.43 252.3 323.55 252.1 323.67 249.1 323.79 249.0 323.91 248.0 324.03 247.8 324.15 247.4 324.27 243.0 324.39 243.7 324.51 241.6 324.63 241.0 324.75 240.0 324.87 240.5 324.99 240.0 325.11 239.8 325.23 240.6 325.35 242.0 325.47 243.8 325.59 245.9 325.71 246.4 325.83 247.9 325.95 248.0 326.07 247.9 326.19 250.1 326.31 251.9 326.43 254.9 326.55 255.9 326.67 253.0 326.79 255.3 326.91 256.8 327.03 258.0 327.15 258.9 327.27 257.3 327.39 256.0 327.51 254.8 327.63 255.7 327.75 254.2 327.87 255.7 327.99 256.2 328.11 259.6 328.23 261.4 328.35 263.5 328.47 264.9 328.59 266.0 328.71 266.2 328.83 266.5 328.95 265.6 329.07 268.7 329.19 270.7 329.31 270.8 329.43 272.4 329.55 273.2 329.67 273.3 329.79 271.2 329.91 272.0 330.03 273.2 330.15 276.0 330.27 277.6 330.39 278.6 330.51 280.4 330.63 282.2 330.75 283.7 330.87 284.7 330.99 283.6 331.11 282.3 331.23 282.2 331.35 282.2 331.47 281.6 331.59 281.3 331.71 281.4 331.83 281.3 331.95 279.2 332.07 276.9 332.19 276.6 332.31 275.2 332.43 274.7 332.55 272.5 332.67 271.9 332.79 272.1 332.91 271.6 333.03 270.7 333.15 270.1 333.27 269.4 333.39 269.0 333.51 268.5 333.63 269.5 333.75 270.6 333.87 271.7 333.99 273.1 334.11 274.6 334.23 275.9 334.35 277.3 334.47 277.9 334.59 276.2 334.71 276.1 334.83 273.3 334.95 271.0 335.07 268.8 335.19 269.7 335.31 270.8 335.43 271.4 335.55 271.3 335.67 268.3 335.79 267.0 335.91 262.6 336.03 258.8 336.15 258.0 336.27 256.6 336.39 254.8 336.51 251.5 336.63 245.0 336.75 244.1 336.87 245.5 336.99 245.6 337.11 243.8 337.23 239.5 337.35 238.0 337.47 236.9 337.59 234.6 337.71 234.2 337.83 234.2 337.95 234.0 338.07 234.6 338.19 234.4 338.31 234.1 338.43 232.8 338.55 232.2 338.67 230.9 338.79 230.4 338.91 231.2 339.03 233.5 339.15 235.9 339.27 238.9 339.39 240.9 339.51 244.2 339.63 247.4 339.75 248.2 339.87 249.8 339.99 250.1 340.11 251.9 340.23 254.0 340.35 255.8 340.47 257.5 340.59 254.9 340.71 254.8 340.83 253.5 340.95 255.1 341.07 257.8 341.19 258.9 341.31 255.7 341.43 258.4 341.55 255.8 341.67 254.9 341.79 257.0 341.91 258.8 342.03 257.4 342.15 259.8 342.27 262.2 342.39 263.4 342.51 265.5 342.63 266.7 342.75 268.4 342.87 267.6 342.99 266.0 343.11 268.0 343.23 269.7 343.35 269.5 343.47 271.1 343.59 271.2 343.71 270.6 343.83 271.3 343.95 271.3 344.07 272.1 344.19 270.1 344.31 268.5 344.43 266.6 344.55 262.7 344.67 261.6 344.79 258.2 344.91 257.7 345.03 255.2 345.15 254.3 345.27 254.2 345.39 255.7 345.51 254.1 345.63 255.6 345.75 256.2 345.87 256.4 345.99 256.4 346.11 255.9 346.23 255.8 346.35 256.9 346.47 257.7 346.59 259.2 346.71 260.7 346.83 262.4 346.95 263.3 347.07 264.7 347.19 265.8 347.31 267.8 347.43 269.5 347.55 268.6 347.67 268.1 347.79 269.4 347.91 268.8 348.03 270.8 348.15 269.6 348.27 271.6 348.39 273.1 348.51 273.3 348.63 274.2 348.75 275.3 348.87 272.5 348.99 272.1 349.11 271.8 349.23 270.9 349.35 269.1 349.47 264.9 349.59 264.5 349.71 263.5 349.83 262.6 349.95 261.4 350.07 259.1 350.19 259.2 350.31 258.7 350.43 258.5 350.55 258.2 350.67 257.6 350.79 257.0 350.91 258.8 351.03 260.7 351.15 262.5 351.27 264.6 351.39 266.7 351.51 266.8 351.63 269.3 351.75 271.9 351.87 272.1 351.99 269.5 352.11 266.5 352.23 265.3 352.35 263.3 352.47 260.8 352.59 256.4 352.71 255.7 352.83 254.5 352.95 252.7 353.07 246.9 353.19 244.4 353.31 242.3 353.43 240.6 353.55 238.3 353.67 235.6 353.79 233.0 353.91 232.4 354.03 234.2 354.15 235.1 354.27 234.9 354.39 236.6 354.51 238.7 354.63 241.4 354.75 241.4 354.87 243.0 354.99 238.9 355.11 236.0 355.23 233.9 355.35 231.5 355.47 230.1 355.59 227.8 355.71 225.6 355.83 222.4 355.95 219.8 356.07 218.1 356.19 218.2 356.31 219.7 356.43 222.4 356.55 224.4 356.67 227.1 356.79 229.8 356.91 232.1 357.03 235.7 357.15 237.4 357.27 240.4 357.39 241.0 357.51 234.6 357.63 237.1 357.75 242.7 357.87 247.5 357.99 249.2 358.11 252.2 358.23 251.5 358.35 244.8 358.47 242.9 358.59 239.4 358.71 236.6 358.83 233.2 358.95 229.9 359.07 226.3 359.19 222.9 359.31 225.9 359.43 228.5 359.55 231.7 359.67 233.8 359.79 235.9 359.91 239.1 360.03 240.0 360.15 242.9 360.27 244.9 360.39 247.5 360.51 244.6 360.63 244.8 360.75 246.2 360.87 245.2 360.99 244.9 361.11 246.8 361.23 247.7 361.35 249.9 361.47 251.3 361.59 253.6 361.71 256.2 361.83 257.6 361.95 258.2 362.07 258.0 362.19 258.9 362.31 256.8 362.43 253.7 362.55 250.5 362.67 246.6 362.79 243.2 362.91 240.1 363.03 238.8 363.15 241.6 363.27 243.2 363.39 245.9 363.51 248.9 363.63 251.1 363.75 252.1 363.87 255.3 363.99 258.0 364.11 259.2 364.23 258.6 364.35 258.2 364.47 258.7 364.59 259.6 364.71 261.7 364.83 262.5 364.95 260.4 365.07 262.0 365.19 263.0 365.31 264.8 365.43 265.5 365.55 265.0 365.67 266.4 365.79 264.8 365.91 266.3 366.03 267.5 366.15 267.0 366.27 268.2 366.39 269.6 366.51 271.3 366.63 273.0 366.75 271.8 366.87 272.6 366.99 273.6 367.11 275.0 367.23 274.1 367.35 273.7 367.47 274.6 367.59 274.9 367.71 275.4 367.83 275.5 367.95 276.4 368.07 276.7 368.19 276.7 368.31 276.1 368.43 275.2 368.55 275.7 368.67 274.2 368.79 273.9 368.91 273.3 369.03 273.0 369.15 273.0 369.27 272.1 369.39 271.6 369.51 270.2 369.63 269.9 369.75 269.1 369.87 268.5 369.99 267.5 370.11 267.2 370.23 267.4 370.35 267.1 370.47 267.4 370.59 268.0 370.71 268.8 370.83 268.5 370.95 269.2 371.07 270.1 371.19 270.2 371.31 270.1 371.43 271.5 371.55 272.8 371.67 272.8 371.79 270.9 371.91 270.0 372.03 267.0 372.15 265.5 372.27 264.0 372.39 262.8 372.51 260.5 372.63 259.1 372.75 257.4 372.87 255.6 372.99 254.0 373.11 251.9 373.23 252.7 373.35 254.7 373.47 256.9 373.59 258.8 373.71 259.9 373.83 262.3 373.95 264.2 374.07 265.9 374.19 267.8 374.31 268.0 374.43 268.4 374.55 265.9 374.67 265.0 374.79 264.8 374.91 264.0 375.03 265.7 375.15 265.4 375.27 265.3 375.39 265.3 375.51 267.3 375.63 266.7 375.75 266.7 375.87 266.4 375.99 268.9 376.11 271.6 376.23 272.3 376.35 274.6 376.47 274.3 376.59 276.3 376.71 276.8 376.83 278.4 376.95 278.0 377.07 278.4 377.19 273.9 377.31 274.5 377.43 272.1 377.55 270.2 377.67 266.8 377.79 266.8 377.91 266.9 378.03 267.9 378.15 264.9 378.27 265.8 378.39 264.3 378.51 261.3 378.63 261.7 378.75 260.6 378.87 259.1 378.99 258.9 379.11 258.9 379.23 257.7 379.35 257.4 379.47 257.1 379.59 256.1 379.71 255.8 379.83 255.8 379.95 256.2 380.07 256.9 380.19 256.1 380.31 255.2 380.43 256.8 380.55 258.3 380.67 256.3 380.79 254.8 380.91 251.8 381.03 254.9 381.15 255.5 381.27 254.7 381.39 256.8 381.51 259.5 381.63 262.5 381.75 264.4 381.87 264.4 381.99 261.3 382.11 263.5 382.23 261.9 382.35 264.3 382.47 267.0 382.59 268.7 382.71 266.0 382.83 268.4 382.95 270.4 383.07 271.3 383.19 273.4 383.31 274.6 383.43 275.8 383.55 270.5 383.67 272.3 383.79 273.4 383.91 271.4 384.03 272.4 384.15 273.3 384.27 274.5 384.39 275.2 384.51 276.0 384.63 275.3 384.75 275.5 384.87 275.1 384.99 276.9 385.11 279.0 385.23 279.9 385.35 280.0 385.47 280.3 385.59 281.4 385.71 282.0 385.83 280.3 385.95 279.2 386.07 278.4 386.19 278.2 386.31 277.2 386.43 276.6 386.55 275.5 386.67 274.1 386.79 273.0 386.91 272.5 387.03 273.1 387.15 273.9 387.27 274.9 387.39 275.8 387.51 276.2 387.63 276.6 387.75 277.6 387.87 278.1 387.99 277.0 388.11 276.9 388.23 277.4 388.35 278.5 388.47 279.4 388.59 278.0 388.71 277.6 388.83 278.8 388.95 279.7 389.07 281.0 389.19 282.3 389.31 283.6 389.43 285.0 389.55 284.2 389.67 284.0 389.79 285.4 389.91 284.7 390.03 284.6 390.15 284.1 390.27 284.1 390.39 283.5 390.51 282.4 390.63 281.4 390.75 281.1 390.87 280.8 390.99 280.2 391.11 279.4 391.23 278.7 391.35 277.9 391.47 277.5 391.59 277.6 391.71 277.6 391.83 278.2 391.95 278.5 392.07 278.9 392.19 278.1 392.31 277.9 392.43 279.0 392.55 278.6 392.67 280.1 392.79 280.6 392.91 281.9 393.03 282.2 393.15 281.9 393.27 283.1 393.39 283.9 393.51 284.2 393.63 284.3 393.75 284.5 393.87 285.2 393.99 284.3 394.11 285.2 394.23 283.0 394.35 282.7 394.47 283.9 394.59 283.8 394.71 284.5 394.83 285.0 394.95 284.8 395.07 284.1 395.19 284.1 395.31 283.7 395.43 283.8 395.55 283.6 395.67 283.3 395.79 282.9 395.91 282.5 396.03 282.5 396.15 282.9 396.27 283.3 396.39 283.4 396.51 284.1 396.63 284.8 396.75 285.1 396.87 285.0 396.99 285.9 397.11 286.7 397.23 287.4 397.35 287.9 397.47 288.2 397.59 288.8 397.71 289.5 397.83 289.7 397.95 290.5 398.07 291.0 398.19 288.1 398.31 284.9 398.43 284.5 398.55 283.3 398.67 281.4 398.79 281.1 398.91 280.8 399.03 279.8 399.15 278.8 399.27 277.4 399.39 276.1 399.51 275.1 399.63 273.7 399.75 272.1 399.87 270.7 399.99 269.1 400.11 271.0 400.23 272.9 400.35 274.8 400.47 276.9 400.59 279.2 400.71 281.0 400.83 283.1 400.95 284.8 401.07 286.8 401.19 286.5 401.31 285.3 401.43 284.0 401.55 283.4 401.67 282.3 401.79 281.7 401.91 280.7 402.03 280.0 402.15 279.2 402.27 279.7 402.39 280.6 402.51 281.6 402.63 282.4 402.75 283.0 402.87 283.7 402.99 284.6 403.11 285.3 403.23 286.0 403.35 285.0 403.47 283.5 403.59 282.3 403.71 279.8 403.83 278.7 403.95 277.1 404.07 275.2 404.19 274.0 404.31 272.5 404.43 271.0 404.55 269.5 404.67 271.3 404.79 273.2 404.91 274.6 405.03 276.3 405.15 277.4 405.27 279.4 405.39 281.0 405.51 282.5 405.63 283.2 405.75 283.9 405.87 283.4 405.99 284.5 406.11 284.9 406.23 285.9 406.35 285.6 406.47 287.1 406.59 287.6 406.71 287.3 406.83 288.2 406.95 289.0 407.07 289.3 407.19 289.2 407.31 289.8 407.43 289.2 407.55 289.5 407.67 289.5 407.79 287.2 407.91 286.1 408.03 285.7 408.15 285.3 408.27 285.0 408.39 283.5 408.51 281.7 408.63 281.0 408.75 280.4 408.87 279.3 408.99 277.8 409.11 277.0 409.23 276.1 409.35 275.2 409.47 274.7 409.59 276.2 409.71 277.7 409.83 279.4 409.95 281.0 410.07 282.3 410.19 282.0 410.31 283.4 410.43 285.0 410.55 285.8 410.67 287.3 410.79 288.1 410.91 288.9 411.03 289.8 411.15 290.7 411.27 292.2 411.39 291.8 411.51 292.1 411.63 291.3 411.75 290.9 411.87 291.0 411.99 291.1 412.11 291.5 412.23 291.6 412.35 291.4 412.47 291.6 412.59 291.2 412.71 291.3 412.83 291.2 412.95 291.3 413.07 291.5 413.19 291.4 413.31 290.7 413.43 290.7 413.55 290.3 413.67 290.6 413.79 290.2 413.91 290.4 414.03 290.2 414.15 290.2 414.27 290.1 414.39 288.9 414.51 288.9 414.63 288.2 414.75 288.1 414.87 287.8 414.99 287.4 415.11 287.3 415.23 287.2 415.35 287.3 415.47 287.3 415.59 287.5 415.71 287.9 415.83 288.3 415.95 288.7 416.07 289.2 416.19 289.6 416.31 290.1 416.43 286.7 416.55 282.4 416.67 278.3 416.79 273.4 416.91 269.2 417.03 263.4 417.15 261.7 417.27 259.4 417.39 258.1 417.51 256.6 417.63 254.3 417.75 252.7 417.87 250.3 417.99 247.4 418.11 244.0 418.23 239.6 418.35 236.6 418.47 233.7 418.59 233.4 418.71 234.6 418.83 236.7 418.95 238.9 419.07 239.6 419.19 241.7 419.31 240.9 419.43 243.0 419.55 246.1 419.67 247.7 419.79 249.7 419.91 252.5 420.03 255.4 420.15 259.7 420.27 261.6 420.39 264.8 420.51 268.0 420.63 270.9 420.75 271.1 420.87 265.6 420.99 265.5 421.11 265.2 421.23 262.9 421.35 260.0 421.47 259.3 421.59 255.9 421.71 253.6 421.83 252.1 421.95 251.5 422.07 249.5 422.19 248.2 422.31 246.1 422.43 243.9 422.55 241.3 422.67 238.4 422.79 239.1 422.91 241.0 423.03 243.5 423.15 246.5 423.27 248.6 423.39 252.2 423.51 253.7 423.63 255.8 423.75 258.4 423.87 257.9 423.99 260.6 424.11 261.8 424.23 263.6 424.35 265.5 424.47 267.1 424.59 268.8 424.71 265.2 424.83 266.9 424.95 268.4 425.07 270.3 425.19 272.2 425.31 270.5 425.43 270.2 425.55 271.0 425.67 269.4 425.79 272.9 425.91 275.7 426.03 277.9 426.15 278.7 426.27 281.4 426.39 281.0 426.51 282.5 426.63 281.1 426.75 282.2 426.87 282.7 426.99 283.1 427.11 283.5 427.23 282.6 427.35 282.6 427.47 282.3 427.59 282.2 427.71 280.1 427.83 278.2 427.95 275.8 428.07 273.7 428.19 271.6 428.31 269.5 428.43 270.8 428.55 273.1 428.67 275.7 428.79 278.3 428.91 280.4 429.03 281.8 429.15 281.8 429.27 279.8 429.39 278.6 429.51 277.7 429.63 277.5 429.75 277.2 429.87 276.8 429.99 276.4 430.11 275.1 430.23 274.5 430.35 272.7 430.47 271.0 430.59 269.4 430.71 267.6 430.83 266.1 430.95 264.8 431.07 263.3 431.19 264.9 431.31 266.6 431.43 268.3 431.55 270.3 431.67 270.6 431.79 271.2 431.91 273.5 432.03 272.4 432.15 274.3 432.27 274.5 432.39 276.7 432.51 277.2 432.63 278.8 432.75 280.8 432.87 280.2 432.99 281.9 433.11 283.0 433.23 283.3 433.35 284.8 433.47 285.6 433.59 287.0 433.71 287.9 433.83 288.8 433.95 289.3 434.07 289.9 434.19 289.6 434.31 288.9 434.43 288.7 434.55 288.2 434.67 287.8 434.79 286.8 434.91 286.3 435.03 285.7 435.15 285.0 435.27 284.6 435.39 285.5 435.51 286.3 435.63 287.1 435.75 287.9 435.87 288.8 435.99 289.8 436.11 290.3 436.23 291.3 436.35 292.1 436.47 292.2 436.59 292.3 436.71 291.1 436.83 291.1 436.95 290.9 437.07 290.8 437.19 290.5 437.31 290.3 437.43 289.9 437.55 289.5 437.67 289.1 437.79 289.0 437.91 289.2 438.03 289.5 438.15 289.9 438.27 290.3 438.39 290.2 438.51 290.8 438.63 291.0 438.75 291.4 438.87 291.3 438.99 290.7 439.11 290.0 439.23 289.0 439.35 288.5 439.47 288.8 439.59 288.8 439.71 287.6 439.83 288.0 439.95 288.6 440.07 288.5 440.19 287.6 440.31 286.2 440.43 285.4 440.55 285.6 440.67 285.6 440.79 285.3 440.91 285.5 441.03 285.8 441.15 285.7 441.27 285.5 441.39 285.6 441.51 285.6 441.63 285.4 441.75 285.4 441.87 285.8 441.99 286.5 442.11 286.8 442.23 287.6 442.35 288.5 442.47 288.4 442.59 289.4 442.71 290.0 442.83 290.7 442.95 291.7 443.07 291.5 443.19 292.7 443.31 293.4 443.43 293.7 443.55 294.0 443.67 294.3 443.79 295.2 443.91 295.6 444.03 295.0 444.15 294.8 444.27 294.6 444.39 294.4 444.51 293.8 444.63 293.1 444.75 292.7 444.87 292.1 444.99 291.6 445.11 291.0 445.23 290.6 445.35 290.2 445.47 290.0 445.59 290.2 445.71 290.4 445.83 290.6 445.95 290.8 446.07 291.0 446.19 291.4 446.31 291.6 446.43 291.6 446.55 291.1 446.67 291.5 446.79 291.9 446.91 291.9 447.03 292.0 447.15 292.2 447.27 291.9 447.39 291.8 447.51 291.4 447.63 291.1 447.75 290.9 447.87 290.6 447.99 290.8 448.11 290.9 448.23 290.8 448.35 290.9 448.47 291.2 448.59 291.5 448.71 291.5 448.83 291.6 448.95 291.8 449.07 292.1 449.19 292.4 449.31 292.5 449.43 293.1 449.55 293.2 449.67 293.8 449.79 294.2 449.91 294.5 450.03 295.0 450.15 295.4 450.27 295.0 450.39 294.1 450.51 293.9 450.63 293.3 450.75 292.9 450.87 292.0 450.99 291.1 451.11 290.3 451.23 289.5 451.35 288.8 451.47 288.0 451.59 287.2 451.71 287.5 451.83 287.9 451.95 288.1 452.07 288.6 452.19 288.6 452.31 289.0 452.43 289.5 452.55 289.8 452.67 290.6 452.79 291.0 452.91 290.8 453.03 291.6 453.15 291.5 453.27 292.0 453.39 291.6 453.51 290.5 453.63 289.8 453.75 290.5 453.87 291.4 453.99 291.7 454.11 291.8 454.23 292.1 454.35 291.8 454.47 291.8 454.59 292.3 454.71 292.4 454.83 292.4 454.95 292.2 455.07 291.5 455.19 291.5 455.31 291.3 455.43 291.0 455.55 290.9 455.67 291.1 455.79 291.4 455.91 291.6 456.03 292.0 456.15 292.5 456.27 293.0 456.39 293.4 456.51 293.7 456.63 294.3 456.75 294.1 456.87 294.8 456.99 295.2 457.11 295.0 457.23 294.4 457.35 293.4 457.47 293.8 457.59 293.5 457.71 294.0 457.83 294.0 457.95 293.5 458.07 293.5 458.19 293.8 458.31 293.8 458.43 293.6 458.55 293.3 458.67 293.4 458.79 293.6 458.91 293.9 459.03 293.9 459.15 294.1 459.27 294.1 459.39 294.2 459.51 293.6 459.63 291.6 459.75 291.8 459.87 292.0 459.99 291.6 460.11 291.2 460.23 291.2 460.35 291.0 460.47 290.1 460.59 289.6 460.71 289.3 460.83 288.8 460.95 288.2 461.07 287.5 461.19 287.2 461.31 286.5 461.43 284.9 461.55 284.0 461.67 283.7 461.79 283.2 461.91 282.6 462.03 282.2 462.15 281.8 462.27 282.1 462.39 282.3 462.51 282.4 462.63 282.8 462.75 283.4 462.87 283.8 462.99 283.7 463.11 282.9 463.23 283.3 463.35 284.2 463.47 284.8 463.59 285.1 463.71 284.3 463.83 283.2 463.95 281.7 464.07 280.0 464.19 278.3 464.31 276.3 464.43 275.4 464.55 274.0 464.67 272.7 464.79 272.8 464.91 273.2 465.03 273.2 465.15 273.1 465.27 273.1 465.39 273.3 465.51 273.7 465.63 273.2 465.75 272.2 465.87 271.6 465.99 270.7 466.11 270.5 466.23 269.5 466.35 267.8 466.47 267.1 466.59 266.3 466.71 265.2 466.83 264.2 466.95 264.8 467.07 265.9 467.19 266.4 467.31 267.3 467.43 268.9 467.55 270.0 467.67 270.3 467.79 271.7 467.91 272.9 468.03 273.3 468.15 274.4 468.27 273.5 468.39 275.6 468.51 276.7 468.63 276.9 468.75 277.4 468.87 277.9 468.99 279.1 469.11 277.3 469.23 277.2 469.35 276.0 469.47 275.4 469.59 274.6 469.71 274.7 469.83 274.1 469.95 273.3 470.07 272.9 470.19 273.1 470.31 273.8 470.43 274.6 470.55 275.2 470.67 275.9 470.79 276.5 470.91 277.9 471.03 278.7 471.15 280.5 471.27 281.1 471.39 279.7 471.51 278.6 471.63 278.9 471.75 278.0 471.87 278.2 471.99 277.5 472.11 276.0 472.23 273.2 472.35 273.3 472.47 273.3 472.59 274.0 472.71 274.1 472.83 273.9 472.95 273.7 473.07 273.0 473.19 273.1 473.31 272.8 473.43 272.9 473.55 273.7 473.67 274.7 473.79 275.2 473.91 276.2 474.03 276.1 474.15 277.1 474.27 278.1 474.39 279.2 474.51 280.2 474.63 281.0 474.75 281.8 474.87 281.5 474.99 282.6 475.11 281.3 475.23 282.3 475.35 281.4 475.47 282.7 475.59 283.2 475.71 281.6 475.83 281.4 475.95 280.4 476.07 280.2 476.19 279.7 476.31 279.1 476.43 278.1 476.55 277.2 476.67 276.3 476.79 276.6 476.91 276.9 477.03 277.5 477.15 278.0 477.27 277.4 477.39 276.7 477.51 277.7 477.63 277.8 477.75 278.8 477.87 278.5 477.99 278.6 478.11 278.2 478.23 278.5 478.35 276.6 478.47 276.0 478.59 275.9 478.71 274.5 478.83 274.3 478.95 273.5 479.07 272.9 479.19 272.1 479.31 271.0 479.43 268.1 479.55 267.1 479.67 267.4 479.79 266.6 479.91 264.5 480.03 264.5 480.15 263.8 480.27 263.0 480.39 262.7 480.51 261.8 480.63 261.5 480.75 261.6 480.87 262.0 480.99 262.8 481.11 263.0 481.23 263.7 481.35 264.9 481.47 264.0 481.59 266.1 481.71 268.3 481.83 268.9 481.95 271.5 482.07 272.1 482.19 273.2 482.31 273.2 482.43 274.3 482.55 277.1 482.67 278.5 482.79 280.6 482.91 281.1 483.03 280.5 483.15 282.5 483.27 281.6 483.39 279.1 483.51 276.7 483.63 273.2 483.75 269.0 483.87 264.1 483.99 263.1 484.11 262.4 484.23 262.7 484.35 262.5 484.47 262.8 484.59 262.8 484.71 263.4 484.83 265.2 484.95 267.3 485.07 269.5 485.19 271.5 485.31 272.0 485.43 273.9 485.55 274.8 485.67 273.9 485.79 273.9 485.91 275.5 486.03 277.2 486.15 277.7 486.27 278.1 486.39 277.5 486.51 279.1 486.63 279.9 486.75 280.1 486.87 279.0 486.99 279.6 487.11 279.8 487.23 279.3 487.35 278.7 487.47 278.8 487.59 278.9 487.71 278.5 487.83 278.3 487.95 278.2 488.07 278.7 488.19 279.1 488.31 279.3 488.43 279.5 488.55 280.3 488.67 281.1 488.79 281.5 488.91 281.7 489.03 282.4 489.15 282.3 489.27 282.5 489.39 283.3 489.51 284.0 489.63 283.9 489.75 284.7 489.87 284.9 489.99 285.1 490.11 285.9 490.23 284.6 490.35 283.2 490.47 281.5 490.59 279.3 490.71 277.6 490.83 275.5 490.95 273.3 491.07 271.4 491.19 269.3 491.31 269.4 491.43 269.7 491.55 269.5 491.67 269.0 491.79 269.6 491.91 270.4 492.03 271.2 492.15 267.9 492.27 269.2 492.39 269.5 492.51 271.1 492.63 270.7 492.75 271.6 492.87 272.4 492.99 274.4 493.11 276.8 493.23 275.4 493.35 277.8 493.47 279.1 493.59 280.6 493.71 281.7 493.83 278.8 493.95 280.0 494.07 279.1 494.19 278.7 494.31 279.9 494.43 280.6 494.55 281.2 494.67 281.6 494.79 281.6 494.91 281.6 495.03 281.3 495.15 280.3 495.27 280.1 495.39 279.6 495.51 279.1 495.63 279.3 495.75 279.8 495.87 280.1 495.99 280.5 496.11 280.4 496.23 280.7 496.35 280.2 496.47 281.6 496.59 281.7 496.71 282.5 496.83 282.5 496.95 283.8 497.07 283.5 497.19 283.9 497.31 284.9 497.43 286.0 497.55 286.4 497.67 287.3 497.79 288.2 497.91 288.9 498.03 289.6 498.15 290.1 498.27 289.7 498.39 289.1 498.51 289.5 498.63 290.1 498.75 290.5 498.87 290.7 498.99 291.0 499.11 291.4 499.23 290.8 499.35 291.3 499.47 291.8 499.59 291.9 499.71 291.9 499.83 290.6 499.95 290.6 500.07 290.6 500.19 290.3 500.31 289.7 500.43 289.7 500.55 289.3 500.67 287.8 500.79 286.5 500.91 286.3 501.03 285.8 501.15 285.0 501.27 284.3 501.39 283.5 501.51 282.5 501.63 281.6 501.75 280.9 501.87 281.5 501.99 282.1 502.11 282.6 502.23 282.8 502.35 283.6 502.47 283.7 502.59 283.4 502.71 283.9 502.83 285.1 502.95 285.5 503.07 285.5 503.19 284.9 503.31 284.5 503.43 284.4 503.55 284.4 503.67 284.1 503.79 284.3 503.91 284.5 504.03 284.6 504.15 284.8 504.27 285.1 504.39 285.4 504.51 285.6 504.63 285.9 504.75 285.7 504.87 286.5 504.99 286.0 505.11 284.8 505.23 281.6 505.35 277.5 505.47 277.5 505.59 276.4 505.71 276.0 505.83 273.8 505.95 272.2 506.07 271.3 506.19 268.9 506.31 267.7 506.43 266.9 506.55 265.5 506.67 264.9 506.79 263.8 506.91 264.2 507.03 265.2 507.15 265.8 507.27 266.5 507.39 267.9 507.51 268.4 507.63 267.4 507.75 264.5 507.87 262.8 507.99 261.6 508.11 259.0 508.23 257.3 508.35 254.2 508.47 252.3 508.59 250.0 508.71 249.7 508.83 251.2 508.95 252.0 509.07 253.6 509.19 255.7 509.31 257.9 509.43 256.8 509.55 257.3 509.67 258.3 509.79 258.5 509.91 257.8 510.03 258.1 510.15 258.5 510.27 259.4 510.39 260.3 510.51 261.9 510.63 262.5 510.75 264.5 510.87 265.1 510.99 264.0 511.11 264.4 511.23 264.5 511.35 264.1 511.47 263.7 511.59 263.9 511.71 265.1 511.83 266.3 511.95 267.3 512.07 268.5 512.19 270.3 512.31 271.5 512.43 271.5 512.55 271.3 512.67 270.8 512.79 270.2 512.91 269.5 513.03 269.2 513.15 270.1 513.27 271.1 513.39 272.3 513.51 272.4 513.63 273.7 513.75 274.8 513.87 276.2 513.92 275.4" fill="none" stroke="#0072BD" stroke-width="1.2" stroke-linejoin="miter" stroke-miterlimit="3"/>
<rect x="30" y="27" width="1" height="279" fill="#262626"/>
<rect x="30" y="305" width="484" height="1" fill="#262626"/>
<text x="30.4" y="322" class="tk" text-anchor="middle">1980</text>
<rect x="81" y="302" width="1" height="3" fill="#262626"/><rect x="81" y="301" width="1" height="1" fill="#262626" opacity="0.45"/>
<text x="82.3" y="322" class="tk" text-anchor="middle">1982</text>
<rect x="131" y="302" width="1" height="3" fill="#262626"/><rect x="131" y="301" width="1" height="1" fill="#262626" opacity="0.45"/>
<text x="132.3" y="322" class="tk" text-anchor="middle">1984</text>
<rect x="182" y="302" width="1" height="3" fill="#262626"/><rect x="182" y="301" width="1" height="1" fill="#262626" opacity="0.45"/>
<text x="183.3" y="322" class="tk" text-anchor="middle">1986</text>
<rect x="233" y="302" width="1" height="3" fill="#262626"/><rect x="233" y="301" width="1" height="1" fill="#262626" opacity="0.45"/>
<text x="234.3" y="322" class="tk" text-anchor="middle">1988</text>
<rect x="284" y="302" width="1" height="3" fill="#262626"/><rect x="284" y="301" width="1" height="1" fill="#262626" opacity="0.45"/>
<text x="285.3" y="322" class="tk" text-anchor="middle">1990</text>
<rect x="335" y="302" width="1" height="3" fill="#262626"/><rect x="335" y="301" width="1" height="1" fill="#262626" opacity="0.45"/>
<text x="336.3" y="322" class="tk" text-anchor="middle">1992</text>
<rect x="386" y="302" width="1" height="3" fill="#262626"/><rect x="386" y="301" width="1" height="1" fill="#262626" opacity="0.45"/>
<text x="387.3" y="322" class="tk" text-anchor="middle">1994</text>
<rect x="437" y="302" width="1" height="3" fill="#262626"/><rect x="437" y="301" width="1" height="1" fill="#262626" opacity="0.45"/>
<text x="438.3" y="322" class="tk" text-anchor="middle">1996</text>
<rect x="488" y="302" width="1" height="3" fill="#262626"/><rect x="488" y="301" width="1" height="1" fill="#262626" opacity="0.45"/>
<text x="489.3" y="322" class="tk" text-anchor="middle">1998</text>
<text x="25.5" y="310.0" class="tk" text-anchor="end">0</text>
<rect x="31" y="250" width="3" height="1" fill="#262626"/><rect x="34" y="250" width="1" height="1" fill="#262626" opacity="0.45"/>
<text x="25.5" y="255.0" class="tk" text-anchor="end">0.2</text>
<rect x="31" y="194" width="3" height="1" fill="#262626"/><rect x="34" y="194" width="1" height="1" fill="#262626" opacity="0.45"/>
<text x="25.5" y="199.0" class="tk" text-anchor="end">0.4</text>
<rect x="31" y="138" width="3" height="1" fill="#262626"/><rect x="34" y="138" width="1" height="1" fill="#262626" opacity="0.45"/>
<text x="25.5" y="143.0" class="tk" text-anchor="end">0.6</text>
<rect x="31" y="82" width="3" height="1" fill="#262626"/><rect x="34" y="82" width="1" height="1" fill="#262626" opacity="0.45"/>
<text x="25.5" y="87.0" class="tk" text-anchor="end">0.8</text>
<rect x="31" y="27" width="3" height="1" fill="#262626"/><rect x="34" y="27" width="1" height="1" fill="#262626" opacity="0.45"/>
<text x="25.5" y="32.0" class="tk" text-anchor="end">1</text>
<text x="32" y="23" class="tk">×10<tspan dy="-4.6" font-size="7.2">-3</tspan></text>
<text x="272" y="22" class="ttl" text-anchor="middle" textLength="137.6" lengthAdjust="spacingAndGlyphs">Conditional Variances</text>
<text x="272.5" y="337" class="lab" text-anchor="middle">Time</text>
<rect x="361.5" y="38.5" width="141" height="16" fill="#fff" stroke="#262626" stroke-width="1"/><line x1="364.6" x2="404.1" y1="46.4" y2="46.4" stroke="#0072BD" stroke-width="1"/><text x="408.5" y="50.0" class="lg">EGARCH_CHFDiff</text>
<rect x="23" y="370" width="491" height="279" fill="#f6f6f6"/><rect x="24" y="370" width="490" height="278" fill="#fff"/>
<rect x="24" y="370" width="1" height="278" fill="#262626"/>
<rect x="24" y="647" width="490" height="1" fill="#262626"/>
<text x="24.4" y="664" class="tk" text-anchor="middle">1980</text>
<rect x="75" y="644" width="1" height="3" fill="#262626"/><rect x="75" y="643" width="1" height="1" fill="#262626" opacity="0.45"/>
<text x="76.3" y="664" class="tk" text-anchor="middle">1982</text>
<rect x="127" y="644" width="1" height="3" fill="#262626"/><rect x="127" y="643" width="1" height="1" fill="#262626" opacity="0.45"/>
<text x="128.3" y="664" class="tk" text-anchor="middle">1984</text>
<rect x="178" y="644" width="1" height="3" fill="#262626"/><rect x="178" y="643" width="1" height="1" fill="#262626" opacity="0.45"/>
<text x="179.3" y="664" class="tk" text-anchor="middle">1986</text>
<rect x="230" y="644" width="1" height="3" fill="#262626"/><rect x="230" y="643" width="1" height="1" fill="#262626" opacity="0.45"/>
<text x="231.3" y="664" class="tk" text-anchor="middle">1988</text>
<rect x="281" y="644" width="1" height="3" fill="#262626"/><rect x="281" y="643" width="1" height="1" fill="#262626" opacity="0.45"/>
<text x="282.3" y="664" class="tk" text-anchor="middle">1990</text>
<rect x="333" y="644" width="1" height="3" fill="#262626"/><rect x="333" y="643" width="1" height="1" fill="#262626" opacity="0.45"/>
<text x="334.3" y="664" class="tk" text-anchor="middle">1992</text>
<rect x="385" y="644" width="1" height="3" fill="#262626"/><rect x="385" y="643" width="1" height="1" fill="#262626" opacity="0.45"/>
<text x="386.3" y="664" class="tk" text-anchor="middle">1994</text>
<rect x="436" y="644" width="1" height="3" fill="#262626"/><rect x="436" y="643" width="1" height="1" fill="#262626" opacity="0.45"/>
<text x="437.3" y="664" class="tk" text-anchor="middle">1996</text>
<rect x="488" y="644" width="1" height="3" fill="#262626"/><rect x="488" y="643" width="1" height="1" fill="#262626" opacity="0.45"/>
<text x="489.3" y="664" class="tk" text-anchor="middle">1998</text>
<text x="20" y="652.0" class="tk" text-anchor="end">-6</text>
<rect x="25" y="601" width="3" height="1" fill="#262626"/><rect x="28" y="601" width="1" height="1" fill="#262626" opacity="0.45"/>
<text x="20" y="606.0" class="tk" text-anchor="end">-4</text>
<rect x="25" y="555" width="3" height="1" fill="#262626"/><rect x="28" y="555" width="1" height="1" fill="#262626" opacity="0.45"/>
<text x="20" y="560.0" class="tk" text-anchor="end">-2</text>
<rect x="25" y="508" width="3" height="1" fill="#262626"/><rect x="28" y="508" width="1" height="1" fill="#262626" opacity="0.45"/>
<text x="20" y="513.0" class="tk" text-anchor="end">0</text>
<rect x="25" y="462" width="3" height="1" fill="#262626"/><rect x="28" y="462" width="1" height="1" fill="#262626" opacity="0.45"/>
<text x="20" y="467.0" class="tk" text-anchor="end">2</text>
<rect x="25" y="416" width="3" height="1" fill="#262626"/><rect x="28" y="416" width="1" height="1" fill="#262626" opacity="0.45"/>
<text x="20" y="421.0" class="tk" text-anchor="end">4</text>
<rect x="25" y="370" width="3" height="1" fill="#262626"/><rect x="28" y="370" width="1" height="1" fill="#262626" opacity="0.45"/>
<text x="20" y="375.0" class="tk" text-anchor="end">6</text>
<path d="M24.5 511.9 24.6 507.3 24.6 500.0 24.7 526.7 24.8 519.5 24.9 497.6 24.9 521.8 25.0 514.6 25.1 491.2 25.1 491.3 25.2 522.5 25.3 514.5 25.4 529.8 25.4 516.2 25.5 499.1 25.6 511.7 25.7 484.9 25.7 512.2 25.8 522.3 25.9 509.3 25.9 512.0 26.0 524.0 26.1 511.8 26.2 504.7 26.2 541.9 26.3 459.8 26.4 470.4 26.4 514.2 26.5 457.3 26.6 507.8 26.7 481.2 26.7 538.3 26.8 504.3 26.9 499.3 26.9 551.1 27.0 483.9 27.1 542.9 27.2 527.1 27.2 505.9 27.3 480.5 27.4 520.1 27.4 551.5 27.5 503.0 27.6 525.0 27.7 497.5 27.7 520.8 27.8 499.4 27.9 537.4 28.0 496.7 28.0 480.1 28.1 562.7 28.2 515.8 28.2 495.4 28.3 505.4 28.4 464.9 28.5 513.7 28.5 499.0 28.6 495.2 28.7 522.3 28.7 512.3 28.8 512.3 28.9 502.3 29.0 511.3 29.0 518.2 29.1 459.2 29.2 510.8 29.2 499.2 29.3 548.3 29.4 532.9 29.5 482.8 29.5 507.1 29.6 535.9 29.7 478.4 29.8 496.5 29.8 523.8 29.9 480.3 30.0 557.6 30.0 481.3 30.1 496.9 30.2 470.6 30.3 518.5 30.3 537.5 30.4 496.6 30.5 502.2 30.5 492.3 30.6 512.5 30.7 499.0 30.8 492.4 30.8 536.7 30.9 590.9 31.0 507.1 31.0 509.0 31.1 524.0 31.2 508.6 31.3 541.9 31.3 535.3 31.4 486.0 31.5 493.2 31.5 543.6 31.6 485.8 31.7 485.5 31.8 515.9 31.8 507.0 31.9 462.3 32.0 488.2 32.1 505.4 32.1 520.6 32.2 440.9 32.3 521.1 32.3 534.7 32.4 508.8 32.5 484.7 32.6 516.5 32.6 528.5 32.7 485.2 32.8 498.2 32.8 497.9 32.9 478.1 33.0 505.2 33.1 496.9 33.1 492.4 33.2 522.0 33.3 516.7 33.3 480.8 33.4 521.2 33.5 541.9 33.6 503.5 33.6 526.4 33.7 529.1 33.8 499.1 33.8 539.6 33.9 512.2 34.0 515.1 34.1 515.4 34.1 534.5 34.2 482.2 34.3 471.0 34.4 500.4 34.4 518.4 34.5 531.0 34.6 526.5 34.6 503.2 34.7 511.2 34.8 535.9 34.9 509.5 34.9 503.3 35.0 538.8 35.1 465.1 35.1 523.8 35.2 538.5 35.3 503.6 35.4 511.4 35.4 521.2 35.5 518.1 35.6 520.9 35.6 500.0 35.7 538.6 35.8 467.8 35.9 516.0 35.9 553.6 36.0 491.3 36.1 499.9 36.2 507.6 36.2 515.6 36.3 505.4 36.4 500.0 36.4 502.0 36.5 524.6 36.6 512.5 36.7 507.2 36.7 487.6 36.8 490.5 36.9 503.5 36.9 529.8 37.0 511.9 37.1 502.8 37.2 498.2 37.2 501.2 37.3 500.7 37.4 479.6 37.4 550.0 37.5 460.9 37.6 518.9 37.7 464.2 37.7 484.8 37.8 493.3 37.9 541.8 37.9 519.5 38.0 533.2 38.1 493.6 38.2 506.7 38.2 522.3 38.3 539.7 38.4 515.2 38.5 506.2 38.5 522.8 38.6 513.5 38.7 506.3 38.7 533.7 38.8 549.4 38.9 535.2 39.0 474.5 39.0 511.4 39.1 512.7 39.2 516.1 39.2 507.7 39.3 525.4 39.4 470.0 39.5 487.6 39.5 487.4 39.6 498.4 39.7 505.0 39.7 498.9 39.8 512.1 39.9 483.4 40.0 461.4 40.0 514.9 40.1 493.7 40.2 486.2 40.3 493.2 40.3 493.5 40.4 503.0 40.5 502.2 40.5 470.7 40.6 492.6 40.7 482.3 40.8 505.1 40.8 444.9 40.9 459.0 41.0 512.1 41.0 484.8 41.1 526.6 41.2 478.5 41.3 523.2 41.3 488.4 41.4 476.8 41.5 506.7 41.5 512.3 41.6 495.0 41.7 470.2 41.8 505.6 41.8 539.0 41.9 495.7 42.0 496.2 42.0 503.1 42.1 450.9 42.2 505.5 42.3 486.6 42.3 522.0 42.4 541.2 42.5 540.6 42.6 522.0 42.6 474.5 42.7 548.1 42.8 504.5 42.8 505.3 42.9 464.9 43.0 535.7 43.1 525.1 43.1 491.5 43.2 518.8 43.3 531.6 43.3 495.3 43.4 497.5 43.5 519.1 43.6 480.3 43.6 490.9 43.7 475.5 43.8 486.2 43.8 513.4 43.9 539.3 44.0 523.3 44.1 499.2 44.1 540.7 44.2 546.4 44.3 512.9 44.4 457.8 44.4 500.7 44.5 479.9 44.6 530.5 44.6 499.1 44.7 477.5 44.8 485.7 44.9 504.8 44.9 502.5 45.0 479.5 45.1 509.0 45.1 498.6 45.2 504.1 45.3 526.2 45.4 513.0 45.4 510.6 45.5 547.3 45.6 525.1 45.6 504.4 45.7 529.5 45.8 486.7 45.9 485.7 45.9 515.7 46.0 490.9 46.1 503.2 46.1 486.2 46.2 518.9 46.3 530.7 46.4 594.4 46.4 539.2 46.5 497.7 46.6 537.4 46.7 481.2 46.7 510.7 46.8 542.6 46.9 517.0 46.9 473.0 47.0 515.6 47.1 497.0 47.2 515.9 47.2 541.4 47.3 491.7 47.4 513.8 47.4 553.0 47.5 511.1 47.6 488.6 47.7 529.1 47.7 496.7 47.8 489.5 47.9 496.1 47.9 533.2 48.0 539.1 48.1 504.9 48.2 476.5 48.2 508.9 48.3 522.7 48.4 495.1 48.5 507.7 48.5 531.5 48.6 554.9 48.7 524.5 48.7 495.8 48.8 523.3 48.9 523.7 49.0 491.9 49.0 504.7 49.1 530.0 49.2 524.4 49.2 522.4 49.3 489.7 49.4 482.8 49.5 478.5 49.5 534.3 49.6 483.4 49.7 554.3 49.7 529.9 49.8 505.4 49.9 521.0 50.0 512.4 50.0 507.9 50.1 508.5 50.2 526.0 50.2 492.4 50.3 511.5 50.4 536.4 50.5 510.4 50.5 494.2 50.6 537.0 50.7 493.8 50.8 523.0 50.8 496.7 50.9 500.3 51.0 473.6 51.0 498.4 51.1 524.4 51.2 545.3 51.3 506.7 51.3 520.9 51.4 477.2 51.5 495.5 51.5 487.7 51.6 508.8 51.7 538.2 51.8 526.9 51.8 552.0 51.9 547.2 52.0 489.0 52.0 512.2 52.1 510.9 52.2 504.5 52.3 490.7 52.3 491.6 52.4 519.9 52.5 522.4 52.5 480.0 52.6 488.1 52.7 522.0 52.8 410.9 52.8 499.1 52.9 496.9 53.0 514.2 53.1 463.9 53.1 502.5 53.2 512.3 53.3 462.5 53.3 529.1 53.4 504.4 53.5 525.5 53.6 585.2 53.6 517.8 53.7 504.9 53.8 504.1 53.8 531.3 53.9 487.5 54.0 456.0 54.1 500.0 54.1 522.2 54.2 534.1 54.3 520.1 54.3 508.4 54.4 509.5 54.5 547.7 54.6 466.7 54.6 503.0 54.7 542.4 54.8 465.6 54.9 517.9 54.9 495.4 55.0 501.9 55.1 489.1 55.1 496.3 55.2 503.0 55.3 538.4 55.4 503.9 55.4 520.7 55.5 513.4 55.6 495.9 55.6 507.0 55.7 498.7 55.8 516.5 55.9 521.1 55.9 536.4 56.0 553.4 56.1 541.6 56.1 510.3 56.2 472.4 56.3 531.4 56.4 511.5 56.4 521.9 56.5 499.8 56.6 466.2 56.6 477.6 56.7 518.1 56.8 520.1 56.9 504.1 56.9 523.2 57.0 525.4 57.1 535.7 57.2 502.0 57.2 532.2 57.3 473.0 57.4 519.4 57.4 520.4 57.5 505.2 57.6 509.6 57.7 496.5 57.7 551.3 57.8 514.7 57.9 510.6 57.9 542.5 58.0 526.0 58.1 500.6 58.2 497.3 58.2 542.1 58.3 524.5 58.4 534.8 58.4 501.1 58.5 539.4 58.6 510.9 58.7 486.3 58.7 516.2 58.8 490.8 58.9 479.2 59.0 531.1 59.0 528.5 59.1 525.9 59.2 520.1 59.2 508.0 59.3 539.9 59.4 504.0 59.5 525.5 59.5 486.4 59.6 459.8 59.7 509.2 59.7 460.9 59.8 482.5 59.9 497.1 60.0 550.4 60.0 503.6 60.1 524.2 60.2 486.2 60.2 484.1 60.3 503.9 60.4 518.6 60.5 456.7 60.5 422.4 60.6 493.5 60.7 518.8 60.7 499.6 60.8 526.4 60.9 506.9 61.0 512.2 61.0 522.1 61.1 519.6 61.2 512.5 61.3 513.0 61.3 515.5 61.4 517.6 61.5 517.4 61.5 505.9 61.6 519.2 61.7 499.8 61.8 521.5 61.8 485.6 61.9 527.0 62.0 537.1 62.0 554.0 62.1 515.8 62.2 520.1 62.3 502.0 62.3 517.8 62.4 529.3 62.5 487.5 62.5 518.3 62.6 487.5 62.7 507.1 62.8 483.0 62.8 515.7 62.9 499.0 63.0 529.2 63.1 516.3 63.1 514.9 63.2 505.8 63.3 498.5 63.3 526.0 63.4 497.0 63.5 540.8 63.6 521.1 63.6 507.8 63.7 490.4 63.8 497.1 63.8 507.2 63.9 546.1 64.0 474.8 64.1 499.9 64.1 486.7 64.2 477.7 64.3 506.5 64.3 527.6 64.4 498.9 64.5 523.5 64.6 497.0 64.6 521.6 64.7 500.8 64.8 521.8 64.8 559.0 64.9 490.3 65.0 521.4 65.1 468.8 65.1 506.1 65.2 537.7 65.3 501.9 65.4 533.0 65.4 544.7 65.5 534.0 65.6 511.8 65.6 432.8 65.7 503.9 65.8 502.1 65.9 497.2 65.9 480.6 66.0 520.1 66.1 488.7 66.1 505.5 66.2 547.0 66.3 485.5 66.4 534.3 66.4 493.6 66.5 510.8 66.6 488.3 66.6 472.9 66.7 489.2 66.8 547.1 66.9 506.4 66.9 518.1 67.0 513.5 67.1 511.4 67.1 488.5 67.2 504.5 67.3 530.2 67.4 467.9 67.4 518.0 67.5 519.5 67.6 536.0 67.7 516.6 67.7 529.0 67.8 471.7 67.9 481.1 67.9 561.7 68.0 494.1 68.1 512.5 68.2 539.6 68.2 541.1 68.3 493.1 68.4 507.9 68.4 487.0 68.5 527.4 68.6 469.6 68.7 498.9 68.7 512.3 68.8 487.3 68.9 505.6 68.9 519.4 69.0 532.0 69.1 505.1 69.2 564.5 69.2 526.5 69.3 539.2 69.4 489.6 69.5 484.5 69.5 519.8 69.6 520.2 69.7 474.0 69.7 503.3 69.8 475.1 69.9 510.4 70.0 494.5 70.0 464.2 70.1 517.9 70.2 489.4 70.2 492.7 70.3 547.6 70.4 464.8 70.5 529.5 70.5 492.0 70.6 508.7 70.7 523.8 70.7 517.5 70.8 486.2 70.9 539.9 71.0 506.9 71.0 561.1 71.1 524.9 71.2 562.3 71.2 521.4 71.3 506.3 71.4 561.5 71.5 515.0 71.5 524.6 71.6 522.7 71.7 498.7 71.8 501.7 71.8 482.4 71.9 483.2 72.0 520.9 72.0 486.8 72.1 488.1 72.2 512.2 72.3 521.4 72.3 526.9 72.4 527.7 72.5 492.7 72.5 520.0 72.6 505.0 72.7 527.9 72.8 532.3 72.8 462.0 72.9 467.9 73.0 490.2 73.0 510.5 73.1 531.1 73.2 474.5 73.3 539.4 73.3 510.2 73.4 505.4 73.5 548.1 73.6 511.6 73.6 481.9 73.7 490.9 73.8 553.8 73.8 480.9 73.9 540.5 74.0 512.0 74.1 513.5 74.1 533.6 74.2 481.4 74.3 508.6 74.3 500.5 74.4 542.4 74.5 531.4 74.6 471.0 74.6 509.9 74.7 514.7 74.8 507.1 74.8 530.2 74.9 553.6 75.0 539.1 75.1 512.4 75.1 491.7 75.2 497.7 75.3 544.5 75.3 532.2 75.4 529.1 75.5 469.3 75.6 534.5 75.6 524.8 75.7 498.0 75.8 474.4 75.9 493.0 75.9 490.4 76.0 473.2 76.1 540.0 76.1 494.5 76.2 514.3 76.3 487.1 76.4 524.0 76.4 483.3 76.5 465.9 76.6 454.5 76.6 528.5 76.7 519.6 76.8 495.9 76.9 475.9 76.9 526.0 77.0 475.0 77.1 526.2 77.1 471.1 77.2 512.7 77.3 486.3 77.4 555.7 77.4 555.4 77.5 486.4 77.6 557.7 77.7 478.1 77.7 541.5 77.8 517.8 77.9 487.6 77.9 507.7 78.0 509.6 78.1 505.4 78.2 516.0 78.2 492.2 78.3 495.0 78.4 497.6 78.4 498.5 78.5 521.6 78.6 531.6 78.7 569.5 78.7 472.0 78.8 506.9 78.9 499.0 78.9 497.7 79.0 527.7 79.1 461.7 79.2 501.6 79.2 516.2 79.3 506.5 79.4 518.6 79.4 564.2 79.5 444.7 79.6 500.7 79.7 516.8 79.7 531.4 79.8 519.1 79.9 530.1 80.0 550.5 80.0 557.5 80.1 528.4 80.2 497.8 80.2 517.5 80.3 494.4 80.4 503.5 80.5 545.2 80.5 510.8 80.6 485.7 80.7 539.3 80.7 527.0 80.8 535.3 80.9 522.5 81.0 528.6 81.0 532.3 81.1 547.2 81.2 485.7 81.2 538.4 81.3 513.1 81.4 517.1 81.5 521.2 81.5 486.1 81.6 514.5 81.7 494.3 81.8 540.5 81.8 477.4 81.9 515.0 82.0 458.0 82.0 484.4 82.1 508.0 82.2 516.1 82.3 547.8 82.3 497.4 82.4 508.1 82.5 481.6 82.5 495.9 82.6 489.4 82.7 495.7 82.8 511.2 82.8 498.3 82.9 526.8 83.0 491.2 83.0 528.1 83.1 519.2 83.2 489.9 83.3 500.2 83.3 509.7 83.4 510.9 83.5 513.6 83.5 509.6 83.6 498.8 83.7 520.7 83.8 519.1 83.8 511.2 83.9 548.9 84.0 521.2 84.1 473.3 84.1 530.3 84.2 506.7 84.3 510.8 84.3 506.4 84.4 516.0 84.5 458.4 84.6 561.6 84.6 515.5 84.7 540.5 84.8 510.1 84.8 519.0 84.9 502.4 85.0 516.6 85.1 507.7 85.1 490.4 85.2 518.0 85.3 530.8 85.3 530.0 85.4 490.7 85.5 508.1 85.6 553.6 85.6 498.2 85.7 524.9 85.8 499.1 85.8 505.6 85.9 479.8 86.0 483.2 86.1 474.8 86.1 489.0 86.2 473.1 86.3 508.6 86.4 508.4 86.4 475.1 86.5 506.8 86.6 543.3 86.6 504.7 86.7 506.8 86.8 547.0 86.9 474.5 86.9 526.9 87.0 504.9 87.1 551.9 87.1 501.0 87.2 505.8 87.3 497.4 87.4 487.4 87.4 521.1 87.5 528.1 87.6 502.0 87.6 507.4 87.7 463.2 87.8 503.2 87.9 526.1 87.9 517.3 88.0 558.2 88.1 561.8 88.2 476.2 88.2 471.2 88.3 484.7 88.4 498.4 88.4 523.5 88.5 512.1 88.6 490.5 88.7 480.9 88.7 476.5 88.8 522.2 88.9 548.3 88.9 520.5 89.0 523.3 89.1 493.5 89.2 499.5 89.2 507.9 89.3 513.6 89.4 529.3 89.4 513.3 89.5 514.1 89.6 488.4 89.7 521.0 89.7 516.8 89.8 484.2 89.9 470.5 89.9 508.4 90.0 531.2 90.1 508.8 90.2 477.8 90.2 471.2 90.3 526.1 90.4 540.3 90.5 497.3 90.5 532.5 90.6 480.4 90.7 514.5 90.7 509.6 90.8 530.9 90.9 551.4 91.0 522.8 91.0 507.7 91.1 514.1 91.2 494.5 91.2 488.4 91.3 541.4 91.4 514.9 91.5 489.9 91.5 491.2 91.6 490.9 91.7 469.8 91.7 514.9 91.8 500.5 91.9 512.6 92.0 463.5 92.0 532.5 92.1 504.4 92.2 520.4 92.3 464.9 92.3 555.4 92.4 510.7 92.5 537.3 92.5 535.6 92.6 468.7 92.7 525.9 92.8 521.1 92.8 505.2 92.9 506.8 93.0 514.9 93.0 527.8 93.1 495.4 93.2 494.1 93.3 553.2 93.3 498.2 93.4 521.2 93.5 507.0 93.5 492.3 93.6 540.1 93.7 555.7 93.8 523.3 93.8 528.3 93.9 495.9 94.0 474.8 94.0 496.7 94.1 550.2 94.2 548.6 94.3 484.7 94.3 507.8 94.4 531.5 94.5 499.6 94.6 467.4 94.6 497.4 94.7 476.6 94.8 500.0 94.8 518.5 94.9 486.1 95.0 500.6 95.1 522.5 95.1 527.5 95.2 510.3 95.3 531.7 95.3 527.8 95.4 514.2 95.5 518.2 95.6 532.3 95.6 534.7 95.7 456.9 95.8 483.3 95.8 484.3 95.9 542.7 96.0 502.7 96.1 536.0 96.1 497.2 96.2 515.9 96.3 511.5 96.4 566.3 96.4 477.6 96.5 495.9 96.6 496.2 96.6 511.2 96.7 554.8 96.8 527.3 96.9 510.4 96.9 492.9 97.0 517.4 97.1 550.0 97.1 477.0 97.2 521.3 97.3 467.8 97.4 494.5 97.4 515.8 97.5 479.5 97.6 520.8 97.6 566.0 97.7 521.5 97.8 513.2 97.9 538.9 97.9 511.2 98.0 508.8 98.1 524.3 98.1 516.1 98.2 511.4 98.3 504.0 98.4 509.5 98.4 523.1 98.5 512.7 98.6 512.7 98.7 485.4 98.7 509.4 98.8 490.7 98.9 519.0 98.9 483.2 99.0 493.5 99.1 513.4 99.2 505.7 99.2 502.8 99.3 473.5 99.4 529.8 99.4 502.5 99.5 520.7 99.6 541.8 99.7 496.4 99.7 546.5 99.8 516.5 99.9 491.6 99.9 462.6 100.0 536.1 100.1 526.7 100.2 530.8 100.2 522.1 100.3 495.0 100.4 507.9 100.4 518.7 100.5 507.9 100.6 521.6 100.7 517.6 100.7 518.6 100.8 531.0 100.9 519.1 101.0 524.3 101.0 484.3 101.1 484.5 101.2 501.6 101.2 523.4 101.3 463.6 101.4 498.2 101.5 508.2 101.5 549.2 101.6 502.8 101.7 532.7 101.7 468.3 101.8 521.9 101.9 507.0 102.0 560.7 102.0 483.5 102.1 525.6 102.2 479.5 102.2 498.1 102.3 513.3 102.4 508.9 102.5 526.1 102.5 468.9 102.6 547.5 102.7 547.4 102.8 508.4 102.8 524.1 102.9 510.7 103.0 516.1 103.0 495.6 103.1 523.4 103.2 501.8 103.3 510.3 103.3 509.5 103.4 519.9 103.5 480.7 103.5 541.9 103.6 539.2 103.7 511.3 103.8 504.8 103.8 487.0 103.9 495.0 104.0 490.1 104.0 487.4 104.1 483.6 104.2 531.0 104.3 508.0 104.3 542.0 104.4 462.6 104.5 453.3 104.5 530.1 104.6 515.3 104.7 501.6 104.8 484.7 104.8 469.1 104.9 516.9 105.0 498.3 105.1 492.9 105.1 513.6 105.2 531.6 105.3 518.0 105.3 494.3 105.4 491.7 105.5 502.0 105.6 537.6 105.6 506.3 105.7 512.3 105.8 489.5 105.8 493.3 105.9 524.2 106.0 527.9 106.1 516.0 106.1 466.4 106.2 488.5 106.3 536.2 106.3 482.9 106.4 480.4 106.5 538.9 106.6 533.0 106.6 511.7 106.7 539.2 106.8 542.6 106.9 479.2 106.9 460.1 107.0 535.1 107.1 514.4 107.1 493.7 107.2 496.4 107.3 475.7 107.4 492.0 107.4 512.9 107.5 537.1 107.6 499.7 107.6 534.7 107.7 494.1 107.8 530.6 107.9 486.3 107.9 469.4 108.0 514.5 108.1 485.0 108.1 514.7 108.2 499.7 108.3 496.2 108.4 504.3 108.4 468.9 108.5 503.9 108.6 479.2 108.6 486.9 108.7 519.9 108.8 505.0 108.9 461.8 108.9 500.2 109.0 510.2 109.1 480.9 109.2 561.5 109.2 515.4 109.3 487.8 109.4 503.1 109.4 493.6 109.5 505.9 109.6 534.2 109.7 517.2 109.7 488.1 109.8 450.4 109.9 552.8 109.9 516.9 110.0 492.2 110.1 514.0 110.2 468.1 110.2 496.1 110.3 517.4 110.4 492.2 110.4 496.0 110.5 487.0 110.6 549.0 110.7 416.7 110.7 516.6 110.8 502.1 110.9 507.1 111.0 501.1 111.0 530.4 111.1 499.8 111.2 492.2 111.2 466.6 111.3 478.1 111.4 534.3 111.5 497.1 111.5 500.1 111.6 481.8 111.7 510.3 111.7 457.5 111.8 484.2 111.9 537.1 112.0 544.1 112.0 524.0 112.1 489.8 112.2 497.7 112.2 478.4 112.3 537.3 112.4 518.3 112.5 487.8 112.5 508.4 112.6 508.3 112.7 494.7 112.7 513.6 112.8 504.3 112.9 523.0 113.0 537.4 113.0 500.8 113.1 501.4 113.2 491.5 113.3 507.7 113.3 507.4 113.4 539.4 113.5 475.8 113.5 504.3 113.6 484.4 113.7 531.2 113.8 491.4 113.8 507.4 113.9 501.8 114.0 540.7 114.0 456.3 114.1 531.6 114.2 521.5 114.3 519.3 114.3 473.0 114.4 489.6 114.5 482.9 114.5 517.9 114.6 509.0 114.7 530.4 114.8 509.1 114.8 483.3 114.9 507.3 115.0 505.8 115.1 498.3 115.1 520.6 115.2 536.6 115.3 537.4 115.3 485.7 115.4 492.9 115.5 524.7 115.6 556.1 115.6 517.2 115.7 511.7 115.8 483.3 115.8 531.2 115.9 507.1 116.0 547.5 116.1 524.4 116.1 492.2 116.2 526.5 116.3 517.4 116.3 469.6 116.4 514.4 116.5 527.0 116.6 525.6 116.6 502.8 116.7 524.9 116.8 511.4 116.8 492.3 116.9 501.1 117.0 492.0 117.1 498.7 117.1 518.6 117.2 491.1 117.3 472.8 117.4 526.1 117.4 512.6 117.5 460.5 117.6 513.1 117.6 508.5 117.7 518.7 117.8 507.1 117.9 518.3 117.9 455.1 118.0 567.8 118.1 522.5 118.1 528.8 118.2 501.4 118.3 506.7 118.4 491.4 118.4 504.8 118.5 540.2 118.6 491.7 118.6 529.6 118.7 474.3 118.8 545.8 118.9 477.7 118.9 493.3 119.0 489.4 119.1 499.0 119.1 485.8 119.2 485.1 119.3 501.8 119.4 501.9 119.4 512.1 119.5 544.3 119.6 479.8 119.7 551.4 119.7 519.2 119.8 552.0 119.9 515.2 119.9 483.7 120.0 531.8 120.1 515.7 120.2 535.2 120.2 502.7 120.3 515.6 120.4 509.7 120.4 484.9 120.5 476.5 120.6 498.4 120.7 521.0 120.7 495.9 120.8 497.9 120.9 490.6 120.9 526.6 121.0 481.7 121.1 512.6 121.2 479.1 121.2 482.3 121.3 482.5 121.4 484.2 121.5 470.1 121.5 509.9 121.6 499.3 121.7 531.8 121.7 493.4 121.8 502.6 121.9 482.8 122.0 541.2 122.0 523.1 122.1 516.1 122.2 552.1 122.2 502.9 122.3 469.6 122.4 476.8 122.5 475.8 122.5 491.2 122.6 463.8 122.7 503.7 122.7 520.8 122.8 481.6 122.9 475.4 123.0 499.5 123.0 489.0 123.1 509.3 123.2 501.9 123.2 520.5 123.3 475.0 123.4 501.0 123.5 513.9 123.5 472.0 123.6 497.4 123.7 504.0 123.8 520.5 123.8 482.9 123.9 508.2 124.0 496.8 124.0 491.8 124.1 494.5 124.2 481.8 124.3 497.8 124.3 480.9 124.4 503.8 124.5 511.7 124.5 502.9 124.6 478.2 124.7 504.7 124.8 512.5 124.8 523.4 124.9 518.0 125.0 513.3 125.0 551.4 125.1 499.7 125.2 499.2 125.3 484.6 125.3 493.7 125.4 519.6 125.5 507.1 125.6 518.3 125.6 515.1 125.7 468.7 125.8 495.8 125.8 523.4 125.9 526.9 126.0 497.8 126.1 501.5 126.1 489.3 126.2 492.7 126.3 535.1 126.3 492.0 126.4 534.5 126.5 522.2 126.6 535.9 126.6 502.6 126.7 482.4 126.8 518.5 126.8 494.9 126.9 530.3 127.0 462.2 127.1 454.6 127.1 523.3 127.2 527.2 127.3 514.2 127.3 522.1 127.4 414.4 127.5 464.0 127.6 520.1 127.6 502.4 127.7 536.7 127.8 547.2 127.9 505.4 127.9 480.2 128.0 532.9 128.1 478.7 128.1 519.4 128.2 491.9 128.3 536.2 128.4 550.6 128.4 522.4 128.5 551.8 128.6 494.1 128.6 512.1 128.7 452.1 128.8 510.8 128.9 524.4 128.9 516.8 129.0 526.8 129.1 498.7 129.1 501.8 129.2 558.4 129.3 485.7 129.4 506.7 129.4 479.6 129.5 522.4 129.6 503.7 129.7 515.8 129.7 527.9 129.8 465.1 129.9 496.1 129.9 508.4 130.0 516.3 130.1 528.7 130.2 502.9 130.2 520.3 130.3 526.0 130.4 511.3 130.4 515.8 130.5 480.6 130.6 527.6 130.7 543.9 130.7 483.1 130.8 510.2 130.9 529.4 130.9 480.6 131.0 491.0 131.1 551.1 131.2 487.4 131.2 482.9 131.3 473.1 131.4 500.1 131.4 522.3 131.5 510.1 131.6 476.5 131.7 514.9 131.7 482.4 131.8 532.0 131.9 513.8 132.0 495.3 132.0 495.5 132.1 493.2 132.2 548.1 132.2 479.9 132.3 487.5 132.4 485.5 132.5 531.2 132.5 478.5 132.6 516.7 132.7 532.4 132.7 504.3 132.8 538.9 132.9 526.4 133.0 495.6 133.0 509.6 133.1 531.7 133.2 464.8 133.2 516.9 133.3 527.6 133.4 516.8 133.5 512.3 133.5 505.1 133.6 503.6 133.7 501.8 133.8 519.5 133.8 523.6 133.9 493.9 134.0 512.0 134.0 517.7 134.1 494.6 134.2 508.2 134.3 529.0 134.3 518.1 134.4 491.8 134.5 500.1 134.5 512.5 134.6 471.2 134.7 510.1 134.8 513.6 134.8 503.3 134.9 518.6 135.0 529.0 135.0 494.4 135.1 497.9 135.2 506.9 135.3 510.9 135.3 544.9 135.4 494.0 135.5 563.5 135.5 493.8 135.6 521.8 135.7 528.1 135.8 537.8 135.8 503.3 135.9 469.6 136.0 482.5 136.1 525.9 136.1 505.2 136.2 527.8 136.3 497.2 136.3 526.5 136.4 519.1 136.5 480.4 136.6 529.2 136.6 526.0 136.7 489.6 136.8 543.4 136.8 555.7 136.9 516.8 137.0 528.0 137.1 495.4 137.1 488.7 137.2 511.5 137.3 478.0 137.3 474.6 137.4 516.7 137.5 528.2 137.6 496.5 137.6 542.2 137.7 536.7 137.8 500.5 137.8 481.1 137.9 518.1 138.0 488.9 138.1 493.6 138.1 528.7 138.2 457.2 138.3 531.0 138.4 499.9 138.4 505.1 138.5 548.9 138.6 477.8 138.6 491.9 138.7 480.6 138.8 521.5 138.9 518.3 138.9 458.6 139.0 483.9 139.1 498.2 139.1 499.4 139.2 480.6 139.3 548.5 139.4 480.7 139.4 485.4 139.5 497.4 139.6 511.7 139.6 498.0 139.7 489.9 139.8 537.2 139.9 526.3 139.9 485.7 140.0 516.8 140.1 506.3 140.2 512.0 140.2 503.6 140.3 471.8 140.4 482.3 140.4 505.1 140.5 528.4 140.6 462.2 140.7 503.6 140.7 493.0 140.8 501.7 140.9 491.1 140.9 534.0 141.0 547.0 141.1 493.6 141.2 482.1 141.2 524.2 141.3 501.2 141.4 513.2 141.4 544.6 141.5 513.4 141.6 493.8 141.7 531.0 141.7 522.4 141.8 523.1 141.9 512.9 141.9 539.7 142.0 480.2 142.1 510.8 142.2 494.2 142.2 469.9 142.3 520.9 142.4 505.2 142.5 482.2 142.5 515.5 142.6 501.2 142.7 495.3 142.7 510.4 142.8 458.7 142.9 506.6 143.0 514.8 143.0 515.4 143.1 529.0 143.2 544.9 143.2 494.2 143.3 514.2 143.4 490.1 143.5 471.4 143.5 526.5 143.6 490.0 143.7 542.9 143.7 470.8 143.8 518.9 143.9 509.5 144.0 528.5 144.0 524.6 144.1 558.9 144.2 542.8 144.3 525.1 144.3 497.1 144.4 485.5 144.5 546.5 144.5 516.0 144.6 526.2 144.7 511.1 144.8 482.0 144.8 511.4 144.9 475.8 145.0 478.4 145.0 547.5 145.1 465.8 145.2 469.8 145.3 501.4 145.3 525.0 145.4 542.7 145.5 481.8 145.5 502.6 145.6 528.9 145.7 509.5 145.8 481.4 145.8 491.8 145.9 554.0 146.0 460.4 146.0 506.7 146.1 485.7 146.2 515.9 146.3 519.6 146.3 503.0 146.4 500.8 146.5 485.2 146.6 542.8 146.6 494.9 146.7 496.0 146.8 513.2 146.8 515.9 146.9 494.9 147.0 503.3 147.1 506.0 147.1 526.5 147.2 509.3 147.3 523.1 147.3 532.5 147.4 535.3 147.5 518.3 147.6 520.2 147.6 526.5 147.7 505.1 147.8 518.4 147.8 490.0 147.9 496.3 148.0 517.2 148.1 541.6 148.1 483.9 148.2 473.2 148.3 489.4 148.4 481.9 148.4 527.4 148.5 485.9 148.6 520.7 148.6 495.0 148.7 574.5 148.8 534.9 148.9 508.2 148.9 474.3 149.0 519.6 149.1 532.6 149.1 509.7 149.2 521.9 149.3 564.5 149.4 535.3 149.4 509.6 149.5 515.8 149.6 509.3 149.6 492.1 149.7 542.8 149.8 534.3 149.9 535.1 149.9 500.0 150.0 532.4 150.1 524.7 150.1 516.6 150.2 541.0 150.3 521.0 150.4 523.3 150.4 515.0 150.5 510.2 150.6 502.4 150.7 536.2 150.7 494.2 150.8 530.2 150.9 481.1 150.9 528.8 151.0 491.3 151.1 500.3 151.2 481.3 151.2 505.5 151.3 492.7 151.4 539.2 151.4 494.5 151.5 525.9 151.6 510.6 151.7 542.1 151.7 524.7 151.8 506.2 151.9 497.4 151.9 494.5 152.0 524.9 152.1 534.3 152.2 519.2 152.2 529.4 152.3 510.5 152.4 487.8 152.4 479.3 152.5 532.8 152.6 556.8 152.7 554.2 152.7 508.3 152.8 569.8 152.9 510.4 153.0 499.1 153.0 491.8 153.1 505.9 153.2 533.5 153.2 553.8 153.3 528.0 153.4 507.0 153.5 500.5 153.5 476.5 153.6 505.4 153.7 492.6 153.7 514.8 153.8 533.9 153.9 509.8 154.0 552.8 154.0 507.2 154.1 485.5 154.2 529.5 154.2 557.2 154.3 500.3 154.4 527.8 154.5 502.0 154.5 543.3 154.6 504.3 154.7 505.2 154.8 470.3 154.8 514.8 154.9 503.1 155.0 524.7 155.0 554.5 155.1 457.1 155.2 545.0 155.3 454.2 155.3 490.3 155.4 468.8 155.5 538.0 155.5 473.9 155.6 507.3 155.7 492.6 155.8 462.5 155.8 510.3 155.9 501.0 156.0 539.9 156.0 527.9 156.1 532.7 156.2 514.0 156.3 474.6 156.3 493.4 156.4 478.1 156.5 507.4 156.5 487.8 156.6 494.1 156.7 524.4 156.8 517.7 156.8 508.5 156.9 527.1 157.0 493.3 157.1 435.1 157.1 519.0 157.2 532.8 157.3 513.4 157.3 499.6 157.4 514.9 157.5 513.9 157.6 532.6 157.6 504.3 157.7 513.7 157.8 491.7 157.8 555.8 157.9 505.1 158.0 503.5 158.1 528.4 158.1 536.5 158.2 527.6 158.3 514.7 158.3 541.5 158.4 496.9 158.5 503.9 158.6 504.6 158.6 526.8 158.7 516.1 158.8 512.2 158.9 525.9 158.9 518.5 159.0 505.1 159.1 507.9 159.1 507.0 159.2 480.7 159.3 508.9 159.4 514.9 159.4 530.3 159.5 510.0 159.6 537.6 159.6 531.8 159.7 493.7 159.8 500.0 159.9 485.4 159.9 534.5 160.0 494.4 160.1 483.6 160.1 517.9 160.2 498.7 160.3 533.1 160.4 492.9 160.4 535.9 160.5 549.7 160.6 519.5 160.6 448.5 160.7 531.9 160.8 483.9 160.9 529.3 160.9 493.3 161.0 523.9 161.1 544.8 161.2 504.4 161.2 506.9 161.3 520.8 161.4 492.1 161.4 559.1 161.5 490.1 161.6 514.3 161.7 492.9 161.7 528.2 161.8 500.1 161.9 533.4 161.9 493.9 162.0 479.0 162.1 483.2 162.2 535.4 162.2 538.3 162.3 522.6 162.4 503.7 162.4 511.3 162.5 555.4 162.6 479.7 162.7 532.7 162.7 495.2 162.8 495.1 162.9 511.5 163.0 515.3 163.0 513.8 163.1 486.2 163.2 507.4 163.2 514.3 163.3 514.0 163.4 475.9 163.5 488.8 163.5 508.4 163.6 511.3 163.7 535.2 163.7 509.8 163.8 526.7 163.9 512.1 164.0 522.4 164.0 537.6 164.1 539.2 164.2 491.3 164.2 501.7 164.3 532.8 164.4 466.3 164.5 487.0 164.5 498.8 164.6 498.7 164.7 509.3 164.7 500.2 164.8 511.5 164.9 533.8 165.0 515.9 165.0 516.8 165.1 526.6 165.2 554.6 165.3 500.6 165.3 482.9 165.4 466.3 165.5 497.0 165.5 500.8 165.6 504.2 165.7 480.1 165.8 518.8 165.8 484.3 165.9 490.4 166.0 501.7 166.0 497.0 166.1 508.6 166.2 525.4 166.3 534.2 166.3 514.2 166.4 507.7 166.5 508.4 166.5 519.7 166.6 516.6 166.7 531.8 166.8 501.6 166.8 516.7 166.9 513.1 167.0 503.5 167.1 478.9 167.1 521.5 167.2 516.4 167.3 497.2 167.3 491.9 167.4 523.0 167.5 490.4 167.6 490.2 167.6 537.4 167.7 476.1 167.8 471.7 167.8 494.1 167.9 502.6 168.0 514.3 168.1 525.2 168.1 543.2 168.2 506.7 168.3 555.1 168.3 542.3 168.4 502.1 168.5 530.7 168.6 522.2 168.6 489.3 168.7 487.1 168.8 530.4 168.8 512.6 168.9 515.4 169.0 556.0 169.1 531.9 169.1 510.3 169.2 547.4 169.3 511.2 169.4 523.0 169.4 467.3 169.5 528.5 169.6 540.1 169.6 516.3 169.7 514.0 169.8 537.6 169.9 546.7 169.9 531.2 170.0 548.4 170.1 493.2 170.1 488.5 170.2 520.5 170.3 560.7 170.4 495.2 170.4 501.0 170.5 507.8 170.6 491.0 170.6 523.5 170.7 528.4 170.8 477.7 170.9 525.4 170.9 526.2 171.0 555.7 171.1 505.4 171.1 513.3 171.2 621.0 171.3 493.2 171.4 517.4 171.4 557.0 171.5 501.3 171.6 482.6 171.7 496.8 171.7 517.9 171.8 485.1 171.9 502.4 171.9 506.2 172.0 503.5 172.1 535.3 172.2 488.3 172.2 537.6 172.3 545.5 172.4 512.7 172.4 490.4 172.5 502.5 172.6 513.5 172.7 519.5 172.7 516.2 172.8 508.4 172.9 520.7 172.9 498.9 173.0 525.7 173.1 478.8 173.2 522.9 173.2 507.0 173.3 524.7 173.4 525.2 173.5 539.4 173.5 533.3 173.6 491.4 173.7 553.0 173.7 519.3 173.8 465.4 173.9 509.6 174.0 519.9 174.0 508.9 174.1 551.6 174.2 554.7 174.2 506.2 174.3 496.6 174.4 505.3 174.5 499.5 174.5 524.7 174.6 510.2 174.7 471.6 174.7 541.6 174.8 489.0 174.9 530.0 175.0 542.1 175.0 497.9 175.1 534.2 175.2 492.1 175.2 481.5 175.3 497.6 175.4 524.3 175.5 515.1 175.5 498.3 175.6 486.1 175.7 454.6 175.8 552.5 175.8 514.4 175.9 529.3 176.0 534.6 176.0 462.9 176.1 512.3 176.2 477.4 176.3 512.4 176.3 527.9 176.4 493.0 176.5 516.9 176.5 472.2 176.6 510.9 176.7 539.4 176.8 514.3 176.8 472.8 176.9 538.1 177.0 489.1 177.0 503.5 177.1 484.4 177.2 507.6 177.3 515.4 177.3 531.5 177.4 522.0 177.5 514.4 177.6 503.2 177.6 488.7 177.7 510.2 177.8 471.8 177.8 505.2 177.9 528.9 178.0 497.5 178.1 527.6 178.1 490.9 178.2 540.8 178.3 549.3 178.3 509.1 178.4 505.0 178.5 525.1 178.6 491.7 178.6 521.8 178.7 449.8 178.8 481.1 178.8 474.3 178.9 510.7 179.0 505.5 179.1 508.0 179.1 501.9 179.2 544.4 179.3 476.5 179.3 556.9 179.4 539.0 179.5 539.9 179.6 525.0 179.6 491.0 179.7 524.0 179.8 522.5 179.9 536.5 179.9 549.2 180.0 554.8 180.1 493.0 180.1 507.4 180.2 527.2 180.3 490.3 180.4 500.5 180.4 534.6 180.5 526.6 180.6 490.2 180.6 478.5 180.7 518.7 180.8 487.9 180.9 480.9 180.9 484.9 181.0 508.9 181.1 493.1 181.1 492.2 181.2 521.9 181.3 506.1 181.4 516.6 181.4 542.9 181.5 509.9 181.6 516.4 181.7 534.2 181.7 495.2 181.8 482.9 181.9 494.4 181.9 522.2 182.0 538.0 182.1 489.8 182.2 529.3 182.2 481.6 182.3 521.2 182.4 502.0 182.4 517.3 182.5 507.8 182.6 487.1 182.7 497.0 182.7 532.0 182.8 473.4 182.9 488.5 182.9 501.8 183.0 533.5 183.1 527.4 183.2 531.5 183.2 530.1 183.3 492.7 183.4 512.7 183.4 518.3 183.5 509.4 183.6 506.4 183.7 538.6 183.7 497.6 183.8 511.5 183.9 527.1 184.0 513.4 184.0 439.8 184.1 483.0 184.2 507.4 184.2 496.5 184.3 524.4 184.4 498.3 184.5 504.3 184.5 545.9 184.6 512.8 184.7 464.5 184.7 508.2 184.8 500.5 184.9 494.2 185.0 481.9 185.0 503.6 185.1 546.0 185.2 496.5 185.2 489.1 185.3 494.9 185.4 539.3 185.5 507.5 185.5 522.5 185.6 504.4 185.7 522.7 185.7 482.6 185.8 503.8 185.9 529.3 186.0 535.5 186.0 523.9 186.1 507.7 186.2 533.4 186.3 519.9 186.3 490.6 186.4 508.9 186.5 537.5 186.5 483.5 186.6 452.0 186.7 519.9 186.8 529.0 186.8 518.1 186.9 482.6 187.0 542.0 187.0 491.5 187.1 513.5 187.2 477.5 187.3 509.4 187.3 519.6 187.4 522.6 187.5 497.4 187.5 515.2 187.6 528.7 187.7 556.9 187.8 503.7 187.8 524.4 187.9 464.5 188.0 514.7 188.1 466.7 188.1 510.2 188.2 493.3 188.3 514.2 188.3 504.9 188.4 492.1 188.5 523.6 188.6 506.7 188.6 472.3 188.7 534.4 188.8 518.9 188.8 493.8 188.9 498.5 189.0 496.9 189.1 512.0 189.1 488.8 189.2 511.4 189.3 516.9 189.3 549.0 189.4 524.4 189.5 507.2 189.6 475.7 189.6 513.3 189.7 461.3 189.8 531.5 189.8 509.1 189.9 484.0 190.0 522.2 190.1 520.2 190.1 498.8 190.2 493.2 190.3 496.1 190.4 463.3 190.4 501.9 190.5 472.9 190.6 536.1 190.6 530.8 190.7 506.6 190.8 512.0 190.9 496.6 190.9 513.8 191.0 489.3 191.1 524.3 191.1 509.3 191.2 536.3 191.3 513.2 191.4 489.4 191.4 485.1 191.5 476.2 191.6 531.0 191.6 526.1 191.7 513.6 191.8 512.7 191.9 526.0 191.9 498.0 192.0 524.5 192.1 494.9 192.2 470.7 192.2 504.3 192.3 490.5 192.4 516.6 192.4 530.9 192.5 550.2 192.6 476.8 192.7 461.6 192.7 559.5 192.8 530.4 192.9 517.3 192.9 529.4 193.0 521.9 193.1 491.0 193.2 512.9 193.2 489.8 193.3 545.7 193.4 516.4 193.4 468.7 193.5 523.8 193.6 548.3 193.7 522.0 193.7 510.3 193.8 562.2 193.9 502.6 193.9 491.8 194.0 520.4 194.1 512.4 194.2 513.6 194.2 514.7 194.3 539.6 194.4 523.3 194.5 496.9 194.5 493.9 194.6 500.3 194.7 531.3 194.7 498.3 194.8 488.5 194.9 479.1 195.0 494.3 195.0 508.1 195.1 512.1 195.2 494.7 195.2 486.8 195.3 559.1 195.4 529.9 195.5 505.1 195.5 487.1 195.6 542.0 195.7 540.3 195.7 552.2 195.8 480.8 195.9 494.9 196.0 515.9 196.0 453.9 196.1 464.4 196.2 489.6 196.3 502.0 196.3 513.1 196.4 488.1 196.5 527.5 196.5 487.6 196.6 524.6 196.7 488.7 196.8 511.7 196.8 497.3 196.9 477.8 197.0 491.1 197.0 511.8 197.1 516.2 197.2 526.0 197.3 531.5 197.3 485.6 197.4 505.6 197.5 536.3 197.5 477.9 197.6 523.5 197.7 477.3 197.8 501.8 197.8 491.9 197.9 505.2 198.0 532.6 198.0 514.3 198.1 518.4 198.2 531.2 198.3 498.0 198.3 536.8 198.4 536.1 198.5 526.9 198.6 538.0 198.6 509.4 198.7 495.6 198.8 508.5 198.8 515.5 198.9 493.3 199.0 496.1 199.1 475.2 199.1 522.1 199.2 504.0 199.3 517.2 199.3 521.1 199.4 513.8 199.5 494.0 199.6 521.2 199.6 534.1 199.7 472.3 199.8 505.9 199.8 501.1 199.9 492.4 200.0 483.7 200.1 489.9 200.1 525.8 200.2 515.2 200.3 485.3 200.4 509.7 200.4 480.7 200.5 477.5 200.6 535.3 200.6 511.1 200.7 530.0 200.8 525.4 200.9 515.4 200.9 506.1 201.0 500.2 201.1 537.4 201.1 510.9 201.2 517.0 201.3 530.2 201.4 505.3 201.4 544.8 201.5 514.9 201.6 510.5 201.6 470.7 201.7 512.0 201.8 517.5 201.9 488.2 201.9 534.6 202.0 514.9 202.1 461.5 202.1 479.4 202.2 500.6 202.3 486.2 202.4 539.2 202.4 485.8 202.5 523.1 202.6 502.8 202.7 512.7 202.7 502.0 202.8 522.7 202.9 552.8 202.9 562.1 203.0 553.9 203.1 508.6 203.2 527.9 203.2 550.4 203.3 481.8 203.4 508.3 203.4 531.2 203.5 539.7 203.6 495.2 203.7 514.6 203.7 541.5 203.8 513.9 203.9 551.4 203.9 477.8 204.0 518.2 204.1 509.2 204.2 533.6 204.2 539.2 204.3 517.6 204.4 534.9 204.4 553.8 204.5 499.7 204.6 519.9 204.7 544.1 204.7 504.4 204.8 519.0 204.9 523.4 205.0 553.0 205.0 514.9 205.1 560.9 205.2 540.3 205.2 484.8 205.3 505.3 205.4 547.9 205.5 535.9 205.5 511.4 205.6 494.4 205.7 516.8 205.7 514.9 205.8 495.9 205.9 484.0 206.0 546.1 206.0 523.8 206.1 490.4 206.2 501.0 206.2 541.7 206.3 558.5 206.4 484.7 206.5 519.3 206.5 511.0 206.6 523.8 206.7 492.7 206.8 489.8 206.8 482.1 206.9 543.7 207.0 521.0 207.0 495.4 207.1 517.9 207.2 514.8 207.3 475.9 207.3 511.7 207.4 544.9 207.5 469.9 207.5 495.1 207.6 508.6 207.7 499.9 207.8 497.6 207.8 511.3 207.9 493.6 208.0 514.3 208.0 494.8 208.1 461.0 208.2 516.8 208.3 562.6 208.3 474.4 208.4 500.3 208.5 526.4 208.5 501.4 208.6 547.0 208.7 490.2 208.8 559.0 208.8 497.6 208.9 479.4 209.0 521.3 209.1 499.9 209.1 500.4 209.2 551.9 209.3 519.7 209.3 471.6 209.4 509.0 209.5 460.3 209.6 508.7 209.6 519.3 209.7 515.7 209.8 525.8 209.8 558.8 209.9 513.6 210.0 478.6 210.1 531.2 210.1 532.2 210.2 524.5 210.3 483.6 210.3 482.8 210.4 523.2 210.5 494.0 210.6 482.3 210.6 509.3 210.7 518.5 210.8 491.6 210.9 529.4 210.9 505.3 211.0 492.7 211.1 468.9 211.1 486.8 211.2 498.7 211.3 531.1 211.4 492.3 211.4 510.4 211.5 464.9 211.6 508.1 211.6 508.0 211.7 523.9 211.8 513.1 211.9 500.3 211.9 536.2 212.0 519.1 212.1 539.5 212.1 542.4 212.2 496.6 212.3 526.7 212.4 520.8 212.4 502.5 212.5 529.2 212.6 520.7 212.6 515.7 212.7 527.9 212.8 530.8 212.9 482.8 212.9 498.8 213.0 495.0 213.1 541.5 213.2 521.4 213.2 491.5 213.3 492.2 213.4 532.0 213.4 502.0 213.5 476.4 213.6 494.1 213.7 514.7 213.7 525.8 213.8 552.0 213.9 518.9 213.9 509.2 214.0 512.3 214.1 515.9 214.2 493.8 214.2 484.2 214.3 535.8 214.4 509.0 214.4 512.9 214.5 509.4 214.6 522.0 214.7 498.5 214.7 484.9 214.8 523.0 214.9 520.3 215.0 432.8 215.0 538.1 215.1 496.2 215.2 511.8 215.2 531.1 215.3 504.9 215.4 517.6 215.5 502.5 215.5 499.0 215.6 515.9 215.7 504.9 215.7 507.6 215.8 496.8 215.9 554.2 216.0 515.8 216.0 495.3 216.1 513.7 216.2 484.4 216.2 523.0 216.3 521.1 216.4 511.4 216.5 547.3 216.5 460.9 216.6 533.0 216.7 510.8 216.7 560.8 216.8 504.7 216.9 531.9 217.0 492.8 217.0 506.5 217.1 476.4 217.2 520.8 217.3 505.7 217.3 516.3 217.4 504.7 217.5 527.6 217.5 516.0 217.6 484.8 217.7 490.4 217.8 541.0 217.8 506.4 217.9 509.2 218.0 539.2 218.0 496.4 218.1 531.1 218.2 501.5 218.3 486.5 218.3 525.9 218.4 495.5 218.5 489.9 218.5 524.4 218.6 497.3 218.7 472.7 218.8 482.7 218.8 528.9 218.9 563.3 219.0 519.3 219.0 534.7 219.1 480.4 219.2 524.5 219.3 471.9 219.3 541.5 219.4 525.2 219.5 507.4 219.6 536.2 219.6 468.5 219.7 529.5 219.8 497.4 219.8 501.7 219.9 469.2 220.0 462.9 220.1 508.5 220.1 500.4 220.2 495.1 220.3 512.9 220.3 484.5 220.4 543.0 220.5 528.4 220.6 544.1 220.6 505.0 220.7 477.4 220.8 500.9 220.8 517.0 220.9 513.7 221.0 477.8 221.1 515.2 221.1 525.0 221.2 507.0 221.3 553.9 221.4 435.1 221.4 512.3 221.5 518.4 221.6 529.7 221.6 461.9 221.7 483.2 221.8 488.3 221.9 484.9 221.9 535.2 222.0 513.4 222.1 513.9 222.1 512.7 222.2 492.1 222.3 511.2 222.4 474.4 222.4 510.9 222.5 505.1 222.6 486.1 222.6 501.1 222.7 536.3 222.8 496.5 222.9 526.0 222.9 470.3 223.0 464.1 223.1 530.6 223.1 487.6 223.2 517.3 223.3 553.9 223.4 493.5 223.4 484.1 223.5 465.2 223.6 500.9 223.7 527.5 223.7 480.1 223.8 508.4 223.9 504.0 223.9 494.7 224.0 526.9 224.1 492.9 224.2 510.3 224.2 545.3 224.3 495.2 224.4 547.4 224.4 526.7 224.5 496.2 224.6 530.0 224.7 489.4 224.7 539.3 224.8 505.7 224.9 489.8 224.9 520.1 225.0 523.2 225.1 514.8 225.2 537.2 225.2 522.2 225.3 520.5 225.4 532.0 225.5 494.8 225.5 492.3 225.6 511.4 225.7 494.0 225.7 476.3 225.8 525.5 225.9 459.5 226.0 529.1 226.0 511.8 226.1 489.2 226.2 533.1 226.2 508.4 226.3 517.6 226.4 504.2 226.5 467.6 226.5 603.6 226.6 528.9 226.7 520.5 226.7 533.0 226.8 525.8 226.9 536.5 227.0 482.8 227.0 509.9 227.1 486.6 227.2 491.3 227.2 541.9 227.3 502.5 227.4 488.8 227.5 522.8 227.5 510.7 227.6 511.1 227.7 541.7 227.8 522.9 227.8 493.1 227.9 503.0 228.0 494.7 228.0 535.5 228.1 521.9 228.2 486.1 228.3 544.5 228.3 512.9 228.4 539.7 228.5 506.7 228.5 483.7 228.6 476.5 228.7 534.2 228.8 510.4 228.8 556.1 228.9 499.6 229.0 524.4 229.0 459.3 229.1 543.6 229.2 535.0 229.3 525.7 229.3 487.8 229.4 545.9 229.5 487.7 229.6 524.7 229.6 491.6 229.7 527.5 229.8 534.8 229.8 499.6 229.9 513.6 230.0 512.2 230.1 503.0 230.1 464.2 230.2 462.3 230.3 498.6 230.3 485.3 230.4 520.8 230.5 470.2 230.6 542.0 230.6 539.4 230.7 481.9 230.8 502.7 230.8 486.2 230.9 499.7 231.0 491.1 231.1 475.8 231.1 513.9 231.2 513.8 231.3 499.6 231.3 475.6 231.4 552.3 231.5 501.5 231.6 509.5 231.6 503.7 231.7 528.4 231.8 499.9 231.9 483.2 231.9 527.8 232.0 460.5 232.1 496.0 232.1 490.7 232.2 490.2 232.3 476.6 232.4 536.2 232.4 507.8 232.5 483.6 232.6 527.6 232.6 554.7 232.7 512.4 232.8 552.0 232.9 535.5 232.9 432.8 233.0 538.8 233.1 520.4 233.1 511.1 233.2 550.6 233.3 533.4 233.4 507.5 233.4 562.8 233.5 510.7 233.6 463.3 233.7 507.1 233.7 505.7 233.8 493.4 233.9 505.2 233.9 502.5 234.0 468.3 234.1 555.4 234.2 511.8 234.2 517.7 234.3 498.8 234.4 512.6 234.4 494.1 234.5 502.6 234.6 560.3 234.7 537.6 234.7 517.5 234.8 542.5 234.9 523.2 234.9 487.4 235.0 547.3 235.1 535.2 235.2 499.7 235.2 522.7 235.3 505.9 235.4 469.9 235.4 489.4 235.5 522.5 235.6 503.8 235.7 504.0 235.7 507.7 235.8 536.7 235.9 496.0 236.0 474.6 236.0 528.8 236.1 534.7 236.2 491.2 236.2 495.1 236.3 507.2 236.4 538.2 236.5 497.2 236.5 532.0 236.6 555.3 236.7 524.0 236.7 490.8 236.8 496.9 236.9 494.2 237.0 492.9 237.0 468.2 237.1 538.7 237.2 537.9 237.2 484.4 237.3 498.4 237.4 518.5 237.5 522.7 237.5 515.6 237.6 510.4 237.7 528.3 237.7 534.5 237.8 513.2 237.9 514.4 238.0 530.4 238.0 515.3 238.1 500.5 238.2 448.6 238.3 545.5 238.3 514.4 238.4 556.6 238.5 507.1 238.5 495.1 238.6 485.7 238.7 513.4 238.8 522.8 238.8 492.1 238.9 487.6 239.0 554.6 239.0 520.0 239.1 519.8 239.2 522.5 239.3 530.2 239.3 469.8 239.4 498.4 239.5 491.6 239.5 522.8 239.6 480.2 239.7 511.9 239.8 522.3 239.8 551.9 239.9 490.3 240.0 534.7 240.1 548.1 240.1 491.8 240.2 532.0 240.3 512.2 240.3 488.7 240.4 557.0 240.5 517.9 240.6 516.6 240.6 468.3 240.7 509.9 240.8 491.7 240.8 486.8 240.9 501.1 241.0 500.2 241.1 531.8 241.1 516.3 241.2 516.0 241.3 520.1 241.3 482.6 241.4 490.0 241.5 507.4 241.6 504.6 241.6 519.0 241.7 501.4 241.8 541.6 241.8 507.2 241.9 494.4 242.0 523.8 242.1 535.6 242.1 533.0 242.2 473.7 242.3 558.1 242.4 524.2 242.4 523.2 242.5 487.8 242.6 499.0 242.6 526.6 242.7 505.3 242.8 549.9 242.9 526.7 242.9 535.6 243.0 499.1 243.1 519.6 243.1 463.9 243.2 521.2 243.3 425.9 243.4 507.6 243.4 461.2 243.5 509.0 243.6 549.7 243.6 556.2 243.7 497.8 243.8 492.3 243.9 520.2 243.9 500.3 244.0 488.3 244.1 467.1 244.2 533.1 244.2 510.7 244.3 539.8 244.4 489.2 244.4 516.0 244.5 531.7 244.6 492.4 244.7 496.4 244.7 513.7 244.8 495.0 244.9 557.1 244.9 539.4 245.0 515.8 245.1 512.7 245.2 473.8 245.2 466.7 245.3 486.3 245.4 512.2 245.4 526.8 245.5 503.7 245.6 530.8 245.7 554.6 245.7 540.7 245.8 527.9 245.9 463.3 245.9 505.7 246.0 515.5 246.1 511.2 246.2 528.6 246.2 475.8 246.3 497.3 246.4 468.2 246.5 534.6 246.5 531.1 246.6 468.9 246.7 541.6 246.7 514.1 246.8 497.3 246.9 522.1 247.0 545.8 247.0 512.7 247.1 485.2 247.2 500.5 247.2 520.4 247.3 464.1 247.4 476.7 247.5 492.8 247.5 507.9 247.6 483.4 247.7 505.6 247.7 514.6 247.8 524.7 247.9 489.7 248.0 489.0 248.0 502.1 248.1 479.2 248.2 525.6 248.3 501.0 248.3 501.5 248.4 525.9 248.5 515.2 248.5 511.4 248.6 498.6 248.7 519.9 248.8 548.5 248.8 565.0 248.9 502.5 249.0 473.3 249.0 462.5 249.1 486.1 249.2 528.6 249.3 540.3 249.3 486.6 249.4 503.0 249.5 523.9 249.5 519.2 249.6 508.1 249.7 539.4 249.8 497.8 249.8 463.8 249.9 519.9 250.0 523.1 250.0 529.4 250.1 480.6 250.2 525.0 250.3 528.3 250.3 513.2 250.4 516.2 250.5 507.6 250.6 498.5 250.6 523.5 250.7 543.7 250.8 518.0 250.8 540.9 250.9 523.4 251.0 485.0 251.1 520.7 251.1 503.1 251.2 504.3 251.3 520.7 251.3 516.6 251.4 470.9 251.5 502.0 251.6 517.0 251.6 507.0 251.7 526.4 251.8 499.8 251.8 514.5 251.9 490.0 252.0 510.1 252.1 510.5 252.1 464.9 252.2 516.2 252.3 497.0 252.3 527.1 252.4 459.9 252.5 534.7 252.6 517.8 252.6 519.5 252.7 513.3 252.8 543.0 252.9 523.9 252.9 493.9 253.0 508.8 253.1 484.3 253.1 521.0 253.2 511.8 253.3 476.8 253.4 515.0 253.4 504.3 253.5 488.2 253.6 515.2 253.6 530.7 253.7 504.2 253.8 500.9 253.9 529.8 253.9 522.2 254.0 486.8 254.1 461.2 254.1 517.2 254.2 460.3 254.3 490.9 254.4 519.7 254.4 516.6 254.5 525.6 254.6 477.9 254.7 471.3 254.7 525.3 254.8 523.9 254.9 486.3 254.9 504.9 255.0 540.2 255.1 517.0 255.2 510.8 255.2 502.9 255.3 498.0 255.4 503.1 255.4 473.2 255.5 534.7 255.6 517.0 255.7 522.2 255.7 513.8 255.8 492.8 255.9 480.7 255.9 494.0 256.0 511.6 256.1 524.5 256.2 512.2 256.2 454.0 256.3 484.6 256.4 501.2 256.4 551.1 256.5 514.1 256.6 516.4 256.7 551.5 256.7 458.7 256.8 545.7 256.9 503.9 257.0 473.0 257.0 518.4 257.1 487.3 257.2 463.0 257.2 510.2 257.3 526.4 257.4 488.9 257.5 503.6 257.5 524.9 257.6 501.0 257.7 528.0 257.7 491.2 257.8 498.0 257.9 462.3 258.0 545.7 258.0 553.7 258.1 520.2 258.2 519.4 258.2 491.2 258.3 501.0 258.4 553.7 258.5 523.8 258.5 487.3 258.6 555.9 258.7 506.9 258.8 537.2 258.8 517.6 258.9 498.5 259.0 468.2 259.0 506.6 259.1 523.1 259.2 521.1 259.3 505.4 259.3 505.6 259.4 526.0 259.5 504.6 259.5 503.5 259.6 516.0 259.7 535.2 259.8 507.0 259.8 516.9 259.9 522.6 260.0 524.0 260.0 518.4 260.1 522.6 260.2 499.1 260.3 496.4 260.3 534.4 260.4 482.2 260.5 506.3 260.5 502.5 260.6 518.1 260.7 489.9 260.8 538.3 260.8 509.6 260.9 547.5 261.0 485.2 261.1 504.3 261.1 490.5 261.2 540.5 261.3 507.7 261.3 541.6 261.4 541.7 261.5 478.6 261.6 478.6 261.6 474.4 261.7 496.0 261.8 532.7 261.8 540.2 261.9 529.5 262.0 495.2 262.1 507.3 262.1 502.6 262.2 527.3 262.3 542.8 262.3 486.9 262.4 512.2 262.5 516.4 262.6 522.5 262.6 498.8 262.7 531.2 262.8 501.3 262.9 536.0 262.9 478.2 263.0 541.9 263.1 504.0 263.1 503.5 263.2 489.6 263.3 540.3 263.4 502.4 263.4 545.6 263.5 490.7 263.6 520.4 263.6 496.0 263.7 517.7 263.8 483.7 263.9 486.3 263.9 540.4 264.0 496.9 264.1 455.1 264.1 483.2 264.2 530.6 264.3 555.1 264.4 513.8 264.4 523.8 264.5 537.7 264.6 481.4 264.6 501.2 264.7 495.2 264.8 529.4 264.9 487.7 264.9 517.2 265.0 546.5 265.1 489.5 265.2 523.3 265.2 502.8 265.3 516.5 265.4 516.1 265.4 483.3 265.5 488.5 265.6 520.6 265.7 511.6 265.7 512.6 265.8 506.8 265.9 480.9 265.9 545.2 266.0 489.8 266.1 498.1 266.2 508.3 266.2 474.8 266.3 539.0 266.4 511.4 266.4 582.9 266.5 532.5 266.6 543.2 266.7 525.7 266.7 504.9 266.8 470.4 266.9 479.7 267.0 523.1 267.0 491.5 267.1 519.8 267.2 521.3 267.2 481.1 267.3 482.2 267.4 498.8 267.5 483.9 267.5 490.0 267.6 504.7 267.7 510.5 267.7 511.3 267.8 505.3 267.9 521.0 268.0 491.2 268.0 495.9 268.1 508.6 268.2 528.6 268.2 527.7 268.3 517.5 268.4 529.4 268.5 516.8 268.5 541.8 268.6 506.2 268.7 528.7 268.7 518.1 268.8 508.5 268.9 520.6 269.0 483.7 269.0 483.8 269.1 555.3 269.2 510.4 269.3 528.1 269.3 541.2 269.4 486.4 269.5 465.6 269.5 542.9 269.6 523.7 269.7 493.7 269.8 509.9 269.8 536.8 269.9 495.5 270.0 530.3 270.0 495.3 270.1 490.1 270.2 544.6 270.3 520.2 270.3 553.5 270.4 465.1 270.5 494.6 270.5 490.3 270.6 504.8 270.7 495.5 270.8 475.7 270.8 549.2 270.9 480.2 271.0 517.6 271.0 502.6 271.1 507.2 271.2 505.4 271.3 455.9 271.3 537.0 271.4 461.4 271.5 514.0 271.6 504.3 271.6 500.9 271.7 546.1 271.8 534.8 271.8 523.8 271.9 513.5 272.0 522.8 272.1 522.0 272.1 489.4 272.2 485.5 272.3 485.8 272.3 521.8 272.4 513.3 272.5 502.4 272.6 516.3 272.6 520.2 272.7 498.0 272.8 507.8 272.8 524.0 272.9 469.4 273.0 491.4 273.1 535.0 273.1 479.8 273.2 519.7 273.3 554.5 273.4 533.3 273.4 474.3 273.5 552.3 273.6 514.6 273.6 510.9 273.7 497.7 273.8 542.8 273.9 549.2 273.9 519.7 274.0 480.9 274.1 517.5 274.1 513.7 274.2 539.5 274.3 536.9 274.4 510.3 274.4 505.7 274.5 522.0 274.6 488.4 274.6 520.8 274.7 517.8 274.8 463.0 274.9 494.0 274.9 532.5 275.0 517.2 275.1 507.1 275.1 518.9 275.2 527.1 275.3 550.0 275.4 527.9 275.4 494.4 275.5 496.9 275.6 515.4 275.7 527.1 275.7 529.8 275.8 542.6 275.9 509.1 275.9 539.8 276.0 525.7 276.1 509.0 276.2 469.3 276.2 526.0 276.3 502.9 276.4 488.0 276.4 475.7 276.5 466.8 276.6 531.7 276.7 494.3 276.7 585.2 276.8 480.2 276.9 514.0 276.9 510.4 277.0 518.6 277.1 497.8 277.2 506.8 277.2 549.5 277.3 549.8 277.4 557.9 277.5 500.6 277.5 497.0 277.6 474.7 277.7 517.2 277.7 518.7 277.8 522.7 277.9 474.2 278.0 545.1 278.0 515.5 278.1 553.0 278.2 509.8 278.2 535.0 278.3 525.5 278.4 485.8 278.5 549.1 278.5 553.3 278.6 562.8 278.7 539.9 278.7 545.4 278.8 551.6 278.9 517.2 279.0 524.5 279.0 489.8 279.1 530.8 279.2 554.9 279.2 480.5 279.3 547.9 279.4 540.5 279.5 550.7 279.5 495.3 279.6 509.7 279.7 513.4 279.8 488.6 279.8 552.6 279.9 501.7 280.0 484.1 280.0 531.1 280.1 487.4 280.2 500.0 280.3 526.2 280.3 553.0 280.4 479.9 280.5 471.8 280.5 495.3 280.6 548.7 280.7 553.7 280.8 564.6 280.8 511.3 280.9 534.2 281.0 480.6 281.0 512.0 281.1 479.0 281.2 514.3 281.3 503.0 281.3 545.2 281.4 497.2 281.5 507.2 281.6 503.1 281.6 514.1 281.7 536.3 281.8 497.5 281.8 419.0 281.9 521.8 282.0 532.2 282.1 469.7 282.1 544.4 282.2 493.0 282.3 485.6 282.3 480.2 282.4 562.6 282.5 504.9 282.6 529.6 282.6 498.5 282.7 514.7 282.8 494.2 282.8 518.4 282.9 519.1 283.0 520.3 283.1 483.6 283.1 499.0 283.2 522.0 283.3 479.4 283.3 464.9 283.4 514.2 283.5 531.4 283.6 491.0 283.6 499.1 283.7 505.6 283.8 500.5 283.9 519.9 283.9 488.4 284.0 516.9 284.1 564.4 284.1 510.5 284.2 491.8 284.3 505.7 284.4 494.6 284.4 514.8 284.5 538.8 284.6 497.0 284.6 487.3 284.7 530.1 284.8 492.0 284.9 508.1 284.9 553.7 285.0 497.4 285.1 534.1 285.1 509.9 285.2 569.0 285.3 482.0 285.4 518.2 285.4 501.4 285.5 519.8 285.6 535.8 285.7 507.7 285.7 538.8 285.8 501.3 285.9 489.4 285.9 517.4 286.0 545.7 286.1 484.2 286.2 538.4 286.2 512.0 286.3 508.6 286.4 509.3 286.4 548.5 286.5 493.8 286.6 530.4 286.7 511.7 286.7 480.9 286.8 487.0 286.9 518.6 286.9 517.0 287.0 480.2 287.1 508.8 287.2 546.9 287.2 522.8 287.3 513.9 287.4 512.6 287.4 515.3 287.5 529.0 287.6 518.2 287.7 542.5 287.7 502.6 287.8 526.9 287.9 531.6 288.0 499.3 288.0 529.9 288.1 503.9 288.2 494.1 288.2 502.4 288.3 524.0 288.4 500.7 288.5 529.1 288.5 518.0 288.6 519.1 288.7 521.6 288.7 536.4 288.8 523.4 288.9 472.1 289.0 523.4 289.0 488.2 289.1 529.0 289.2 514.9 289.2 510.9 289.3 534.6 289.4 508.3 289.5 486.4 289.5 498.7 289.6 535.6 289.7 506.8 289.7 499.3 289.8 509.1 289.9 529.0 290.0 512.8 290.0 522.0 290.1 487.4 290.2 470.5 290.3 537.3 290.3 499.2 290.4 491.9 290.5 538.1 290.5 530.4 290.6 523.7 290.7 520.2 290.8 520.7 290.8 533.3 290.9 590.9 291.0 497.0 291.0 514.8 291.1 463.8 291.2 522.5 291.3 542.2 291.3 521.1 291.4 492.7 291.5 520.0 291.5 537.3 291.6 497.5 291.7 503.5 291.8 510.6 291.8 513.8 291.9 520.4 292.0 508.0 292.1 516.6 292.1 527.3 292.2 525.3 292.3 524.3 292.3 506.2 292.4 514.7 292.5 472.7 292.6 514.9 292.6 499.5 292.7 508.7 292.8 556.5 292.8 502.1 292.9 509.6 293.0 508.2 293.1 504.5 293.1 522.3 293.2 505.3 293.3 468.7 293.3 550.2 293.4 534.2 293.5 507.0 293.6 513.5 293.6 537.8 293.7 538.5 293.8 546.2 293.8 526.3 293.9 518.0 294.0 536.3 294.1 485.1 294.1 535.8 294.2 509.6 294.3 478.5 294.4 482.7 294.4 530.5 294.5 501.2 294.6 516.1 294.6 506.2 294.7 487.3 294.8 522.1 294.9 517.9 294.9 477.3 295.0 489.0 295.1 523.8 295.1 506.0 295.2 504.3 295.3 509.9 295.4 528.8 295.4 554.7 295.5 510.3 295.6 535.4 295.6 506.7 295.7 474.7 295.8 478.4 295.9 461.8 295.9 531.9 296.0 514.0 296.1 562.7 296.2 492.5 296.2 480.4 296.3 484.4 296.4 497.7 296.4 494.8 296.5 508.2 296.6 473.8 296.7 522.0 296.7 523.0 296.8 552.0 296.9 515.2 296.9 485.6 297.0 500.8 297.1 533.5 297.2 477.3 297.2 481.9 297.3 543.1 297.4 547.0 297.4 476.8 297.5 507.8 297.6 538.2 297.7 501.3 297.7 514.0 297.8 529.4 297.9 475.9 297.9 540.4 298.0 556.8 298.1 485.2 298.2 533.3 298.2 531.2 298.3 498.2 298.4 491.8 298.5 515.3 298.5 509.0 298.6 505.1 298.7 470.8 298.7 485.6 298.8 517.3 298.9 487.8 299.0 492.4 299.0 514.5 299.1 493.2 299.2 524.0 299.2 475.7 299.3 554.7 299.4 556.5 299.5 519.1 299.5 516.9 299.6 492.0 299.7 505.0 299.7 547.5 299.8 484.8 299.9 519.5 300.0 502.6 300.0 512.7 300.1 493.3 300.2 513.4 300.3 530.6 300.3 556.0 300.4 487.9 300.5 531.5 300.5 507.0 300.6 533.9 300.7 517.3 300.8 521.1 300.8 482.8 300.9 476.3 301.0 551.6 301.0 520.3 301.1 495.8 301.2 503.1 301.3 512.7 301.3 537.2 301.4 486.1 301.5 480.5 301.5 526.1 301.6 514.0 301.7 508.7 301.8 475.6 301.8 487.1 301.9 510.3 302.0 503.3 302.0 475.6 302.1 522.4 302.2 541.5 302.3 547.5 302.3 489.1 302.4 518.6 302.5 465.1 302.6 458.7 302.6 538.2 302.7 525.5 302.8 512.3 302.8 511.8 302.9 514.3 303.0 509.5 303.1 528.5 303.1 504.2 303.2 513.8 303.3 486.0 303.3 518.8 303.4 521.4 303.5 480.4 303.6 463.2 303.6 511.2 303.7 534.5 303.8 498.3 303.8 486.2 303.9 487.6 304.0 505.5 304.1 499.8 304.1 517.1 304.2 507.4 304.3 527.9 304.3 486.6 304.4 500.0 304.5 527.4 304.6 517.8 304.6 526.9 304.7 518.8 304.8 491.0 304.9 517.5 304.9 504.9 305.0 555.8 305.1 519.9 305.1 536.8 305.2 492.8 305.3 537.3 305.4 518.3 305.4 504.4 305.5 507.5 305.6 521.4 305.6 463.6 305.7 478.6 305.8 502.8 305.9 507.8 305.9 507.5 306.0 487.7 306.1 480.5 306.1 483.3 306.2 504.2 306.3 510.3 306.4 543.2 306.4 550.1 306.5 479.5 306.6 524.7 306.7 514.2 306.7 493.9 306.8 467.0 306.9 505.4 306.9 487.6 307.0 509.6 307.1 539.7 307.2 520.7 307.2 498.9 307.3 484.9 307.4 503.2 307.4 536.3 307.5 539.2 307.6 489.7 307.7 495.4 307.7 481.0 307.8 470.7 307.9 532.1 307.9 493.0 308.0 509.5 308.1 541.2 308.2 468.4 308.2 507.8 308.3 479.5 308.4 499.0 308.4 554.1 308.5 518.5 308.6 488.2 308.7 536.2 308.7 520.2 308.8 505.6 308.9 520.4 309.0 465.5 309.0 537.5 309.1 479.4 309.2 521.8 309.2 500.0 309.3 558.2 309.4 505.2 309.5 484.9 309.5 528.6 309.6 483.9 309.7 442.3 309.7 526.0 309.8 495.6 309.9 511.8 310.0 491.5 310.0 486.3 310.1 503.7 310.2 548.1 310.2 479.4 310.3 515.5 310.4 537.6 310.5 493.5 310.5 513.3 310.6 564.9 310.7 518.1 310.8 494.6 310.8 507.1 310.9 500.4 311.0 497.4 311.0 541.6 311.1 506.4 311.2 486.6 311.3 511.1 311.3 494.2 311.4 514.0 311.5 480.0 311.5 491.0 311.6 492.3 311.7 537.4 311.8 522.3 311.8 484.1 311.9 491.6 312.0 520.2 312.0 480.7 312.1 525.3 312.2 508.0 312.3 494.7 312.3 535.6 312.4 529.2 312.5 525.1 312.5 517.0 312.6 540.8 312.7 491.1 312.8 517.7 312.8 506.2 312.9 517.2 313.0 522.1 313.1 491.2 313.1 522.3 313.2 548.0 313.3 516.1 313.3 520.6 313.4 514.6 313.5 565.8 313.6 516.3 313.6 518.8 313.7 507.2 313.8 482.8 313.8 530.2 313.9 533.7 314.0 461.2 314.1 500.6 314.1 473.3 314.2 514.1 314.3 493.5 314.3 502.3 314.4 478.8 314.5 508.9 314.6 530.2 314.6 482.6 314.7 522.7 314.8 541.6 314.9 504.4 314.9 547.1 315.0 520.0 315.1 468.4 315.1 532.1 315.2 468.1 315.3 500.3 315.4 494.0 315.4 473.9 315.5 494.7 315.6 504.4 315.6 519.1 315.7 497.6 315.8 527.4 315.9 535.0 315.9 551.9 316.0 547.4 316.1 481.8 316.1 497.5 316.2 495.2 316.3 495.1 316.4 542.5 316.4 487.2 316.5 512.8 316.6 537.5 316.6 505.3 316.7 532.6 316.8 521.3 316.9 486.3 316.9 479.4 317.0 535.0 317.1 531.9 317.2 506.2 317.2 526.6 317.3 499.8 317.4 512.8 317.4 509.5 317.5 493.6 317.6 515.3 317.7 509.3 317.7 462.5 317.8 485.4 317.9 495.4 317.9 506.8 318.0 494.5 318.1 504.1 318.2 494.6 318.2 544.5 318.3 478.6 318.4 477.0 318.4 521.8 318.5 516.0 318.6 488.8 318.7 509.5 318.7 487.1 318.8 501.1 318.9 528.7 319.0 505.3 319.0 536.3 319.1 484.1 319.2 507.0 319.2 543.0 319.3 496.8 319.4 508.6 319.5 488.9 319.5 494.0 319.6 471.2 319.7 467.2 319.7 497.8 319.8 542.5 319.9 519.8 320.0 537.9 320.0 486.0 320.1 524.4 320.2 540.3 320.2 491.6 320.3 564.1 320.4 512.9 320.5 572.5 320.5 506.9 320.6 495.4 320.7 524.6 320.7 509.8 320.8 534.0 320.9 542.1 321.0 515.1 321.0 525.6 321.1 561.9 321.2 519.7 321.3 522.0 321.3 529.5 321.4 465.4 321.5 501.7 321.5 525.2 321.6 530.3 321.7 487.7 321.8 557.2 321.8 498.0 321.9 486.9 322.0 512.3 322.0 512.3 322.1 554.5 322.2 504.2 322.3 512.9 322.3 478.0 322.4 526.1 322.5 547.2 322.5 492.1 322.6 539.4 322.7 509.1 322.8 519.2 322.8 506.3 322.9 461.9 323.0 524.5 323.0 518.4 323.1 527.2 323.2 491.1 323.3 515.7 323.3 502.3 323.4 532.0 323.5 510.9 323.6 467.6 323.6 493.4 323.7 504.8 323.8 500.7 323.8 465.2 323.9 514.6 324.0 502.1 324.1 462.5 324.1 498.7 324.2 520.7 324.3 507.6 324.3 519.5 324.4 500.5 324.5 530.0 324.6 507.6 324.6 458.4 324.7 536.9 324.8 492.0 324.8 546.0 324.9 478.8 325.0 485.0 325.1 553.6 325.1 550.0 325.2 526.8 325.3 577.1 325.4 488.6 325.4 519.9 325.5 516.2 325.6 545.4 325.6 519.2 325.7 512.0 325.8 468.4 325.9 522.7 325.9 545.0 326.0 532.1 326.1 522.2 326.1 532.0 326.2 521.7 326.3 533.5 326.4 517.1 326.4 507.5 326.5 487.5 326.6 524.8 326.6 513.5 326.7 515.1 326.8 511.9 326.9 504.1 326.9 491.5 327.0 503.5 327.1 507.6 327.1 540.9 327.2 505.4 327.3 541.0 327.4 551.0 327.4 534.0 327.5 489.9 327.6 496.1 327.7 495.9 327.7 463.7 327.8 491.5 327.9 506.6 327.9 545.9 328.0 476.1 328.1 529.9 328.2 468.0 328.2 520.1 328.3 495.1 328.4 490.7 328.4 532.2 328.5 490.9 328.6 504.6 328.7 543.4 328.7 541.1 328.8 493.1 328.9 500.2 328.9 512.2 329.0 495.2 329.1 494.0 329.2 489.6 329.2 471.0 329.3 501.2 329.4 522.8 329.5 485.4 329.5 499.1 329.6 497.1 329.7 479.1 329.7 484.0 329.8 517.4 329.9 539.2 330.0 523.2 330.0 461.7 330.1 467.7 330.2 495.0 330.2 493.4 330.3 532.5 330.4 524.1 330.5 489.4 330.5 507.0 330.6 519.4 330.7 527.4 330.7 472.7 330.8 496.4 330.9 495.6 331.0 500.4 331.0 472.5 331.1 448.6 331.2 532.2 331.2 521.3 331.3 513.2 331.4 540.4 331.5 494.7 331.5 516.5 331.6 515.1 331.7 481.3 331.8 510.6 331.8 474.4 331.9 513.7 332.0 503.9 332.0 521.0 332.1 508.4 332.2 510.7 332.3 546.6 332.3 511.1 332.4 524.3 332.5 523.7 332.5 506.2 332.6 509.1 332.7 509.2 332.8 485.9 332.8 564.1 332.9 493.4 333.0 541.8 333.0 529.1 333.1 525.4 333.2 534.7 333.3 520.1 333.3 444.4 333.4 487.0 333.5 502.7 333.6 502.4 333.6 526.6 333.7 456.1 333.8 548.5 333.8 544.3 333.9 517.0 334.0 548.6 334.1 541.4 334.1 509.8 334.2 498.5 334.3 507.0 334.3 483.9 334.4 506.6 334.5 495.3 334.6 505.6 334.6 464.6 334.7 475.6 334.8 514.1 334.8 492.7 334.9 496.9 335.0 538.7 335.1 517.3 335.1 492.6 335.2 497.5 335.3 517.8 335.3 485.6 335.4 502.4 335.5 520.8 335.6 542.9 335.6 488.0 335.7 495.3 335.8 544.1 335.9 522.9 335.9 517.2 336.0 533.2 336.1 508.6 336.1 536.6 336.2 499.3 336.3 500.2 336.4 483.6 336.4 483.7 336.5 492.3 336.6 507.3 336.6 464.1 336.7 511.9 336.8 519.1 336.9 509.2 336.9 520.5 337.0 497.5 337.1 510.0 337.1 480.9 337.2 500.2 337.3 517.3 337.4 517.3 337.4 518.5 337.5 492.0 337.6 486.3 337.6 502.6 337.7 526.8 337.8 546.0 337.9 545.4 337.9 528.9 338.0 519.6 338.1 521.6 338.2 472.0 338.2 525.0 338.3 539.6 338.4 526.9 338.4 537.2 338.5 564.8 338.6 506.2 338.7 502.9 338.7 504.2 338.8 558.4 338.9 506.8 338.9 554.9 339.0 488.4 339.1 534.5 339.2 495.9 339.2 512.9 339.3 559.6 339.4 533.8 339.4 509.3 339.5 486.4 339.6 517.0 339.7 531.2 339.7 529.2 339.8 515.7 339.9 513.5 340.0 528.7 340.0 535.3 340.1 471.9 340.2 537.8 340.2 526.0 340.3 534.4 340.4 509.6 340.5 525.0 340.5 473.4 340.6 504.8 340.7 527.8 340.7 494.0 340.8 500.1 340.9 496.2 341.0 531.5 341.0 517.9 341.1 480.3 341.2 517.5 341.2 516.5 341.3 489.0 341.4 467.1 341.5 503.7 341.5 469.9 341.6 508.4 341.7 497.1 341.7 503.8 341.8 509.4 341.9 489.6 342.0 492.1 342.0 492.0 342.1 501.2 342.2 505.8 342.3 492.4 342.3 498.3 342.4 478.8 342.5 494.3 342.5 552.5 342.6 521.4 342.7 476.5 342.8 501.3 342.8 465.9 342.9 462.1 343.0 499.9 343.0 494.2 343.1 463.9 343.2 526.2 343.3 507.2 343.3 512.3 343.4 504.2 343.5 507.8 343.5 559.7 343.6 516.8 343.7 496.6 343.8 492.5 343.8 539.0 343.9 506.5 344.0 491.2 344.1 516.3 344.1 530.5 344.2 480.0 344.3 523.6 344.3 494.5 344.4 523.9 344.5 513.9 344.6 546.9 344.6 457.6 344.7 495.8 344.8 500.0 344.8 522.7 344.9 522.7 345.0 545.2 345.1 510.3 345.1 500.9 345.2 497.1 345.3 502.8 345.3 472.1 345.4 561.7 345.5 555.9 345.6 524.3 345.6 486.0 345.7 483.3 345.8 457.4 345.8 519.8 345.9 541.3 346.0 492.7 346.1 469.4 346.1 502.4 346.2 519.7 346.3 477.5 346.4 473.7 346.4 547.5 346.5 518.1 346.6 471.4 346.6 524.7 346.7 501.1 346.8 496.8 346.9 517.7 346.9 541.0 347.0 483.2 347.1 536.7 347.1 521.3 347.2 479.0 347.3 553.8 347.4 547.5 347.4 481.0 347.5 512.7 347.6 542.0 347.6 498.9 347.7 534.5 347.8 510.7 347.9 503.6 347.9 495.7 348.0 532.4 348.1 515.2 348.2 547.3 348.2 512.7 348.3 499.7 348.4 493.0 348.4 504.4 348.5 528.6 348.6 539.8 348.7 468.7 348.7 486.6 348.8 506.9 348.9 479.0 348.9 455.2 349.0 463.2 349.1 529.2 349.2 539.5 349.2 510.8 349.3 539.0 349.4 532.4 349.4 497.3 349.5 554.1 349.6 516.0 349.7 514.4 349.7 514.5 349.8 532.9 349.9 548.3 349.9 512.5 350.0 478.7 350.1 526.5 350.2 562.2 350.2 561.6 350.3 471.8 350.4 505.2 350.5 484.7 350.5 491.5 350.6 509.9 350.7 486.6 350.7 498.5 350.8 527.0 350.9 482.0 351.0 528.2 351.0 481.7 351.1 528.0 351.2 532.0 351.2 528.0 351.3 506.2 351.4 439.8 351.5 496.3 351.5 498.4 351.6 462.9 351.7 547.0 351.7 500.0 351.8 491.9 351.9 525.6 352.0 505.8 352.0 505.5 352.1 494.4 352.2 504.5 352.3 521.1 352.3 546.7 352.4 536.2 352.5 504.3 352.5 484.6 352.6 497.3 352.7 507.8 352.8 538.8 352.8 495.7 352.9 494.1 353.0 460.8 353.0 573.8 353.1 546.6 353.2 540.3 353.3 507.3 353.3 524.5 353.4 538.9 353.5 537.5 353.5 524.7 353.6 510.9 353.7 471.1 353.8 509.2 353.8 541.1 353.9 521.8 354.0 490.9 354.0 510.1 354.1 502.3 354.2 554.0 354.3 523.0 354.3 565.5 354.4 527.7 354.5 514.5 354.6 511.9 354.6 513.1 354.7 512.3 354.8 552.0 354.8 456.0 354.9 494.3 355.0 527.2 355.1 505.7 355.1 500.6 355.2 498.2 355.3 496.2 355.3 496.4 355.4 526.6 355.5 472.2 355.6 549.5 355.6 488.4 355.7 510.0 355.8 506.0 355.8 544.3 355.9 485.4 356.0 475.5 356.1 517.0 356.1 516.9 356.2 526.3 356.3 499.5 356.3 525.9 356.4 507.1 356.5 507.7 356.6 506.0 356.6 520.0 356.7 525.3 356.8 520.8 356.9 477.7 356.9 513.2 357.0 532.9 357.1 495.7 357.1 511.5 357.2 504.6 357.3 467.8 357.4 520.4 357.4 502.0 357.5 506.7 357.6 518.2 357.6 494.3 357.7 523.9 357.8 507.6 357.9 532.2 357.9 528.0 358.0 513.7 358.1 496.5 358.1 527.6 358.2 467.2 358.3 473.4 358.4 503.9 358.4 528.9 358.5 531.1 358.6 498.8 358.7 490.7 358.7 471.4 358.8 507.7 358.9 551.0 358.9 499.2 359.0 488.7 359.1 513.7 359.2 518.7 359.2 507.9 359.3 530.4 359.4 487.4 359.4 508.8 359.5 490.0 359.6 520.7 359.7 513.8 359.7 498.6 359.8 516.8 359.9 501.9 359.9 475.2 360.0 506.6 360.1 502.2 360.2 531.7 360.2 483.3 360.3 519.3 360.4 535.8 360.4 505.8 360.5 487.3 360.6 527.1 360.7 525.4 360.7 498.1 360.8 540.7 360.9 509.5 361.0 555.0 361.0 490.7 361.1 484.0 361.2 504.3 361.2 490.0 361.3 497.0 361.4 472.0 361.5 557.4 361.5 525.9 361.6 480.4 361.7 508.0 361.7 502.0 361.8 477.2 361.9 503.9 362.0 548.4 362.0 528.3 362.1 509.1 362.2 524.6 362.2 473.9 362.3 492.3 362.4 506.1 362.5 466.8 362.5 550.3 362.6 523.3 362.7 498.9 362.8 489.3 362.8 500.1 362.9 516.4 363.0 533.7 363.0 509.9 363.1 494.9 363.2 514.8 363.3 517.1 363.3 520.4 363.4 530.2 363.5 502.5 363.5 493.0 363.6 473.7 363.7 544.1 363.8 494.6 363.8 500.5 363.9 517.3 364.0 458.4 364.0 535.5 364.1 514.9 364.2 507.2 364.3 509.6 364.3 497.9 364.4 500.0 364.5 492.4 364.5 518.9 364.6 512.7 364.7 484.3 364.8 518.4 364.8 509.1 364.9 504.1 365.0 545.4 365.1 531.1 365.1 488.7 365.2 534.7 365.3 513.5 365.3 510.3 365.4 560.4 365.5 465.4 365.6 489.4 365.6 469.4 365.7 531.2 365.8 536.5 365.8 532.6 365.9 505.6 366.0 502.5 366.1 546.2 366.1 510.2 366.2 509.1 366.3 525.7 366.3 502.1 366.4 484.2 366.5 495.2 366.6 561.1 366.6 463.1 366.7 521.9 366.8 464.2 366.9 491.7 366.9 485.0 367.0 512.5 367.1 504.5 367.1 483.9 367.2 491.5 367.3 505.1 367.4 513.3 367.4 494.0 367.5 468.3 367.6 531.2 367.6 537.1 367.7 526.1 367.8 513.1 367.9 516.1 367.9 508.8 368.0 507.3 368.1 511.2 368.1 480.7 368.2 501.6 368.3 490.8 368.4 498.4 368.4 507.8 368.5 533.5 368.6 517.1 368.6 525.3 368.7 499.9 368.8 511.4 368.9 520.8 368.9 519.9 369.0 525.7 369.1 498.3 369.2 453.5 369.2 507.5 369.3 523.8 369.4 548.5 369.4 473.2 369.5 508.9 369.6 517.2 369.7 521.8 369.7 476.9 369.8 492.6 369.9 527.9 369.9 497.5 370.0 468.3 370.1 531.8 370.2 497.1 370.2 471.7 370.3 489.7 370.4 506.5 370.4 473.9 370.5 508.0 370.6 499.0 370.7 483.2 370.7 514.6 370.8 493.1 370.9 508.6 370.9 526.4 371.0 530.8 371.1 531.7 371.2 496.1 371.2 516.7 371.3 480.2 371.4 483.1 371.5 535.6 371.5 477.4 371.6 512.1 371.7 499.2 371.7 475.2 371.8 529.8 371.9 445.8 372.0 518.9 372.0 505.6 372.1 501.1 372.2 507.6 372.2 490.5 372.3 501.2 372.4 544.3 372.5 503.2 372.5 473.8 372.6 548.9 372.7 468.1 372.7 502.6 372.8 518.6 372.9 522.4 373.0 513.6 373.0 467.3 373.1 553.5 373.2 512.9 373.3 549.0 373.3 499.1 373.4 488.7 373.5 486.7 373.5 509.8 373.6 498.6 373.7 534.1 373.8 471.4 373.8 553.5 373.9 479.2 374.0 552.1 374.0 517.2 374.1 499.4 374.2 504.8 374.3 555.4 374.3 529.1 374.4 498.1 374.5 544.3 374.5 555.5 374.6 478.5 374.7 478.7 374.8 499.0 374.8 544.2 374.9 499.8 375.0 538.6 375.0 494.4 375.1 536.7 375.2 469.8 375.3 549.1 375.3 478.0 375.4 498.7 375.5 486.7 375.6 512.1 375.6 485.7 375.7 505.7 375.8 524.5 375.8 518.3 375.9 506.6 376.0 510.6 376.1 521.3 376.1 467.8 376.2 508.8 376.3 494.1 376.3 514.3 376.4 494.5 376.5 513.4 376.6 554.8 376.6 502.9 376.7 463.8 376.8 494.4 376.8 527.8 376.9 547.9 377.0 480.0 377.1 514.8 377.1 473.8 377.2 480.0 377.3 518.8 377.4 509.0 377.4 479.4 377.5 533.3 377.6 520.8 377.6 507.7 377.7 504.3 377.8 508.1 377.9 510.6 377.9 516.7 378.0 526.7 378.1 511.6 378.1 501.9 378.2 523.3 378.3 515.4 378.4 491.0 378.4 486.0 378.5 524.1 378.6 494.8 378.6 508.9 378.7 483.9 378.8 511.3 378.9 564.1 378.9 529.9 379.0 510.5 379.1 493.9 379.1 473.5 379.2 504.6 379.3 495.7 379.4 532.2 379.4 523.6 379.5 508.4 379.6 508.8 379.7 490.4 379.7 508.5 379.8 488.3 379.9 546.5 379.9 524.4 380.0 459.1 380.1 537.3 380.2 495.7 380.2 509.1 380.3 520.6 380.4 490.5 380.4 466.9 380.5 511.4 380.6 470.2 380.7 528.8 380.7 502.7 380.8 477.1 380.9 520.2 380.9 492.1 381.0 499.6 381.1 503.4 381.2 457.1 381.2 519.6 381.3 521.5 381.4 519.3 381.5 502.7 381.5 480.0 381.6 507.7 381.7 527.1 381.7 496.9 381.8 488.6 381.9 544.4 382.0 487.4 382.0 536.8 382.1 468.7 382.2 529.1 382.2 541.2 382.3 489.0 382.4 506.4 382.5 500.1 382.5 483.7 382.6 508.7 382.7 511.4 382.7 486.5 382.8 510.8 382.9 514.9 383.0 518.5 383.0 530.2 383.1 482.4 383.2 502.4 383.2 508.9 383.3 522.8 383.4 521.4 383.5 556.3 383.5 499.9 383.6 459.6 383.7 509.0 383.8 486.2 383.8 515.2 383.9 522.0 384.0 539.6 384.0 493.5 384.1 512.6 384.2 500.0 384.3 505.6 384.3 546.1 384.4 504.8 384.5 487.3 384.5 501.8 384.6 481.0 384.7 487.4 384.8 536.4 384.8 504.0 384.9 542.2 385.0 523.7 385.0 498.2 385.1 478.7 385.2 489.1 385.3 512.2 385.3 503.9 385.4 540.1 385.5 470.1 385.6 525.2 385.6 527.7 385.7 472.3 385.8 495.5 385.8 521.9 385.9 514.3 386.0 532.1 386.1 543.3 386.1 492.3 386.2 459.1 386.3 569.7 386.3 538.8 386.4 508.8 386.5 475.7 386.6 522.8 386.6 511.0 386.7 502.0 386.8 501.7 386.8 463.5 386.9 548.0 387.0 484.3 387.1 502.8 387.1 533.8 387.2 526.2 387.3 538.4 387.3 527.8 387.4 508.2 387.5 505.6 387.6 526.7 387.6 570.7 387.7 461.5 387.8 544.6 387.9 517.7 387.9 470.1 388.0 512.8 388.1 515.6 388.1 524.9 388.2 504.3 388.3 511.3 388.4 527.1 388.4 537.7 388.5 518.9 388.6 553.8 388.6 533.1 388.7 480.1 388.8 486.5 388.9 520.5 388.9 507.7 389.0 489.1 389.1 517.9 389.1 522.8 389.2 521.8 389.3 476.3 389.4 478.8 389.4 478.2 389.5 487.3 389.6 492.1 389.6 512.0 389.7 489.1 389.8 500.7 389.9 453.1 389.9 462.6 390.0 497.8 390.1 500.1 390.2 440.9 390.2 487.0 390.3 516.8 390.4 514.7 390.4 484.3 390.5 507.3 390.6 514.5 390.7 464.8 390.7 504.7 390.8 526.2 390.9 490.7 390.9 508.6 391.0 499.1 391.1 495.1 391.2 502.9 391.2 474.6 391.3 554.6 391.4 488.3 391.4 498.3 391.5 533.7 391.6 536.6 391.7 504.4 391.7 484.8 391.8 513.1 391.9 521.6 392.0 503.2 392.0 475.4 392.1 533.8 392.2 527.6 392.2 545.6 392.3 541.0 392.4 478.7 392.5 508.8 392.5 508.2 392.6 527.4 392.7 543.6 392.7 535.2 392.8 522.0 392.9 515.3 393.0 510.9 393.0 552.6 393.1 526.5 393.2 491.0 393.2 506.7 393.3 532.5 393.4 511.7 393.5 514.5 393.5 521.5 393.6 530.2 393.7 526.9 393.7 502.0 393.8 541.7 393.9 516.7 394.0 526.8 394.0 489.9 394.1 520.3 394.2 524.8 394.3 523.2 394.3 486.4 394.4 539.7 394.5 555.9 394.5 533.9 394.6 489.8 394.7 520.7 394.8 510.8 394.8 488.3 394.9 508.4 395.0 489.7 395.0 477.7 395.1 484.1 395.2 541.4 395.3 475.7 395.3 489.0 395.4 507.9 395.5 463.7 395.5 520.7 395.6 453.0 395.7 511.2 395.8 483.1 395.8 530.8 395.9 496.1 396.0 511.8 396.1 538.6 396.1 501.2 396.2 502.9 396.3 539.7 396.3 494.1 396.4 464.2 396.5 542.8 396.6 510.6 396.6 449.2 396.7 504.5 396.8 449.4 396.8 497.5 396.9 527.6 397.0 527.8 397.1 525.4 397.1 530.1 397.2 469.1 397.3 525.6 397.3 484.2 397.4 506.9 397.5 526.7 397.6 472.1 397.6 518.3 397.7 489.2 397.8 480.7 397.8 519.3 397.9 517.7 398.0 493.9 398.1 493.0 398.1 508.1 398.2 497.0 398.3 471.9 398.4 486.6 398.4 515.0 398.5 504.6 398.6 507.1 398.6 462.0 398.7 513.5 398.8 482.2 398.9 535.1 398.9 529.8 399.0 509.9 399.1 525.1 399.1 487.1 399.2 501.3 399.3 485.5 399.4 482.1 399.4 518.5 399.5 535.9 399.6 512.1 399.6 556.7 399.7 510.8 399.8 531.8 399.9 540.0 399.9 473.5 400.0 526.7 400.1 521.1 400.2 552.3 400.2 536.8 400.3 492.4 400.4 513.0 400.4 462.7 400.5 497.7 400.6 533.2 400.7 544.4 400.7 555.3 400.8 521.7 400.9 480.9 400.9 488.9 401.0 528.9 401.1 495.3 401.2 501.4 401.2 489.8 401.3 497.2 401.4 473.4 401.4 494.2 401.5 507.2 401.6 505.6 401.7 502.8 401.7 507.0 401.8 506.0 401.9 514.8 401.9 540.6 402.0 476.6 402.1 500.1 402.2 525.8 402.2 463.9 402.3 504.9 402.4 539.2 402.5 551.8 402.5 523.1 402.6 546.0 402.7 535.0 402.7 532.9 402.8 517.5 402.9 517.2 403.0 508.6 403.0 471.2 403.1 496.3 403.2 514.6 403.2 501.3 403.3 490.1 403.4 553.6 403.5 527.6 403.5 477.3 403.6 462.0 403.7 516.7 403.7 508.2 403.8 530.9 403.9 511.5 404.0 549.8 404.0 479.4 404.1 489.7 404.2 505.3 404.2 530.0 404.3 515.4 404.4 544.8 404.5 507.5 404.5 518.9 404.6 506.5 404.7 516.7 404.8 511.7 404.8 531.5 404.9 476.7 405.0 509.1 405.0 492.0 405.1 507.2 405.2 504.5 405.3 522.2 405.3 515.9 405.4 510.0 405.5 517.8 405.5 484.8 405.6 486.5 405.7 523.4 405.8 521.8 405.8 482.5 405.9 472.0 406.0 528.6 406.0 527.1 406.1 495.0 406.2 493.1 406.3 518.9 406.3 517.9 406.4 552.9 406.5 526.0 406.6 533.3 406.6 492.7 406.7 519.2 406.8 502.7 406.8 518.4 406.9 511.8 407.0 466.7 407.1 542.4 407.1 467.1 407.2 532.1 407.3 508.3 407.3 477.0 407.4 509.5 407.5 534.1 407.6 520.0 407.6 540.5 407.7 502.3 407.8 505.8 407.8 467.5 407.9 538.5 408.0 514.4 408.1 537.2 408.1 494.0 408.2 556.8 408.3 508.3 408.3 544.5 408.4 491.8 408.5 503.7 408.6 522.0 408.6 486.4 408.7 520.1 408.8 468.2 408.9 485.5 408.9 509.9 409.0 502.2 409.1 528.3 409.1 505.3 409.2 526.9 409.3 518.1 409.4 496.5 409.4 528.8 409.5 513.1 409.6 499.4 409.6 517.0 409.7 495.8 409.8 519.0 409.9 501.7 409.9 473.8 410.0 514.6 410.1 521.0 410.1 527.4 410.2 522.1 410.3 528.3 410.4 524.4 410.4 519.8 410.5 508.3 410.6 470.2 410.7 484.5 410.7 480.9 410.8 474.2 410.9 521.6 410.9 475.6 411.0 532.3 411.1 494.8 411.2 509.4 411.2 489.6 411.3 485.5 411.4 474.6 411.4 462.8 411.5 504.2 411.6 505.0 411.7 526.4 411.7 495.5 411.8 467.3 411.9 524.0 411.9 502.1 412.0 558.2 412.1 523.0 412.2 489.2 412.2 530.8 412.3 545.4 412.4 520.7 412.4 512.5 412.5 503.4 412.6 520.3 412.7 510.2 412.7 513.4 412.8 489.2 412.9 515.9 413.0 510.6 413.0 508.7 413.1 505.5 413.2 466.6 413.2 559.8 413.3 510.2 413.4 513.5 413.5 480.9 413.5 481.0 413.6 545.5 413.7 503.3 413.7 541.2 413.8 466.7 413.9 518.8 414.0 479.1 414.0 525.9 414.1 516.7 414.2 522.4 414.2 456.2 414.3 468.0 414.4 530.2 414.5 631.3 414.5 539.2 414.6 513.8 414.7 499.0 414.8 471.6 414.8 525.2 414.9 511.4 415.0 462.0 415.0 518.0 415.1 514.1 415.2 516.5 415.3 493.4 415.3 504.4 415.4 552.7 415.5 526.5 415.5 527.1 415.6 494.4 415.7 528.1 415.8 488.1 415.8 481.9 415.9 467.8 416.0 536.5 416.0 497.4 416.1 531.4 416.2 542.4 416.3 505.5 416.3 557.8 416.4 520.5 416.5 528.7 416.5 550.1 416.6 515.5 416.7 514.6 416.8 493.5 416.8 500.6 416.9 550.0 417.0 535.9 417.1 484.2 417.1 528.7 417.2 512.3 417.3 477.7 417.3 507.9 417.4 480.5 417.5 560.1 417.6 506.5 417.6 502.8 417.7 513.2 417.8 495.5 417.8 538.0 417.9 529.8 418.0 524.0 418.1 477.6 418.1 535.0 418.2 495.6 418.3 442.1 418.3 509.1 418.4 492.3 418.5 499.4 418.6 475.2 418.6 521.0 418.7 495.9 418.8 530.3 418.9 468.9 418.9 480.3 419.0 471.1 419.1 530.7 419.1 524.9 419.2 467.0 419.3 448.3 419.4 493.5 419.4 537.9 419.5 540.7 419.6 515.8 419.6 513.4 419.7 505.5 419.8 500.8 419.9 489.3 419.9 477.2 420.0 485.2 420.1 551.7 420.1 523.5 420.2 485.6 420.3 529.6 420.4 517.9 420.4 523.0 420.5 478.6 420.6 485.7 420.6 497.4 420.7 520.6 420.8 494.9 420.9 529.2 420.9 551.1 421.0 533.5 421.1 473.8 421.2 534.0 421.2 492.0 421.3 541.1 421.4 487.7 421.4 546.7 421.5 512.0 421.6 478.3 421.7 494.0 421.7 504.0 421.8 495.4 421.9 514.6 421.9 522.2 422.0 500.0 422.1 506.6 422.2 484.9 422.2 476.8 422.3 487.5 422.4 506.5 422.4 495.9 422.5 534.8 422.6 502.0 422.7 557.6 422.7 473.9 422.8 465.8 422.9 524.7 422.9 520.2 423.0 514.6 423.1 515.9 423.2 525.2 423.2 521.7 423.3 513.2 423.4 515.9 423.5 523.9 423.5 471.6 423.6 523.9 423.7 519.6 423.7 513.3 423.8 502.4 423.9 484.4 424.0 515.3 424.0 534.8 424.1 485.7 424.2 527.9 424.2 509.9 424.3 493.1 424.4 469.3 424.5 491.9 424.5 474.9 424.6 538.2 424.7 474.0 424.7 537.1 424.8 532.6 424.9 508.3 425.0 553.8 425.0 539.9 425.1 490.0 425.2 457.8 425.3 511.7 425.3 521.5 425.4 495.8 425.5 506.6 425.5 494.2 425.6 522.3 425.7 496.7 425.8 543.7 425.8 501.7 425.9 488.9 426.0 508.6 426.0 439.8 426.1 527.4 426.2 477.5 426.3 538.4 426.3 509.8 426.4 541.7 426.5 501.8 426.5 521.4 426.6 514.0 426.7 491.9 426.8 496.6 426.8 520.6 426.9 549.6 427.0 554.4 427.0 515.9 427.1 531.6 427.2 545.7 427.3 542.2 427.3 544.8 427.4 516.1 427.5 492.8 427.6 531.5 427.6 534.0 427.7 525.8 427.8 514.6 427.8 509.0 427.9 543.3 428.0 538.1 428.1 501.6 428.1 515.4 428.2 486.5 428.3 496.3 428.3 511.7 428.4 541.2 428.5 507.4 428.6 535.0 428.6 509.1 428.7 474.9 428.8 484.3 428.8 488.4 428.9 500.2 429.0 520.5 429.1 500.4 429.1 475.1 429.2 537.1 429.3 502.5 429.4 508.1 429.4 493.0 429.5 502.7 429.6 496.8 429.6 485.3 429.7 504.2 429.8 504.1 429.9 461.7 429.9 509.1 430.0 489.8 430.1 499.0 430.1 505.1 430.2 496.5 430.3 532.6 430.4 517.7 430.4 519.9 430.5 483.7 430.6 515.9 430.6 508.2 430.7 487.5 430.8 497.3 430.9 520.5 430.9 550.3 431.0 512.5 431.1 506.5 431.1 505.2 431.2 513.3 431.3 512.8 431.4 477.8 431.4 527.3 431.5 507.1 431.6 519.9 431.7 518.2 431.7 508.6 431.8 515.2 431.9 488.7 431.9 504.5 432.0 495.4 432.1 552.9 432.2 488.0 432.2 521.0 432.3 489.1 432.4 520.6 432.4 524.6 432.5 510.4 432.6 521.5 432.7 522.5 432.7 494.0 432.8 523.4 432.9 483.3 432.9 524.4 433.0 533.9 433.1 485.5 433.2 506.0 433.2 481.9 433.3 525.8 433.4 503.2 433.5 496.6 433.5 506.6 433.6 507.6 433.7 513.3 433.7 517.1 433.8 495.2 433.9 485.6 434.0 493.5 434.0 490.6 434.1 526.2 434.2 491.5 434.2 514.7 434.3 507.4 434.4 513.4 434.5 491.5 434.5 474.6 434.6 483.0 434.7 501.8 434.7 551.3 434.8 504.8 434.9 535.3 435.0 537.7 435.0 496.1 435.1 503.2 435.2 534.0 435.2 522.3 435.3 462.1 435.4 538.0 435.5 490.8 435.5 546.0 435.6 512.6 435.7 478.2 435.8 544.1 435.8 510.6 435.9 513.6 436.0 484.2 436.0 505.8 436.1 469.6 436.2 465.7 436.3 502.4 436.3 503.2 436.4 518.6 436.5 501.1 436.5 521.4 436.6 513.7 436.7 516.0 436.8 515.0 436.8 478.8 436.9 477.2 437.0 519.0 437.0 506.0 437.1 502.2 437.2 502.5 437.3 526.1 437.3 544.5 437.4 498.6 437.5 514.3 437.6 523.4 437.6 565.7 437.7 513.2 437.8 524.2 437.8 481.5 437.9 513.8 438.0 506.5 438.1 488.3 438.1 517.6 438.2 482.2 438.3 511.2 438.3 528.2 438.4 513.5 438.5 471.0 438.6 494.3 438.6 511.8 438.7 465.4 438.8 543.4 438.8 547.2 438.9 520.6 439.0 491.0 439.1 522.8 439.1 533.7 439.2 486.6 439.3 518.1 439.3 502.4 439.4 525.8 439.5 516.7 439.6 478.6 439.6 525.5 439.7 515.8 439.8 501.2 439.9 506.0 439.9 522.8 440.0 491.9 440.1 532.8 440.1 498.1 440.2 516.9 440.3 495.6 440.4 505.8 440.4 481.5 440.5 458.7 440.6 527.1 440.6 492.3 440.7 519.5 440.8 516.5 440.9 493.2 440.9 484.6 441.0 537.5 441.1 496.8 441.1 513.4 441.2 485.5 441.3 505.6 441.4 485.5 441.4 496.4 441.5 563.0 441.6 549.5 441.6 545.8 441.7 496.8 441.8 509.8 441.9 544.5 441.9 541.4 442.0 519.4 442.1 499.9 442.2 522.3 442.2 472.4 442.3 501.0 442.4 485.9 442.4 477.1 442.5 556.5 442.6 482.9 442.7 520.3 442.7 526.4 442.8 504.8 442.9 503.4 442.9 487.0 443.0 496.6 443.1 524.2 443.2 571.5 443.2 511.0 443.3 537.8 443.4 536.3 443.4 524.0 443.5 479.8 443.6 497.8 443.7 496.3 443.7 503.3 443.8 493.6 443.9 521.9 444.0 519.4 444.0 527.0 444.1 501.7 444.2 485.1 444.2 555.2 444.3 533.2 444.4 520.8 444.5 515.0 444.5 480.5 444.6 508.8 444.7 491.5 444.7 497.4 444.8 502.1 444.9 505.1 445.0 503.9 445.0 538.1 445.1 537.8 445.2 491.4 445.2 506.2 445.3 512.9 445.4 474.5 445.5 526.7 445.5 532.6 445.6 530.9 445.7 492.3 445.7 536.3 445.8 496.1 445.9 526.6 446.0 495.8 446.0 479.2 446.1 514.4 446.2 562.6 446.3 489.7 446.3 534.7 446.4 493.3 446.5 543.1 446.5 538.9 446.6 530.6 446.7 495.4 446.8 492.7 446.8 523.6 446.9 517.1 447.0 510.4 447.0 501.8 447.1 447.1 447.2 506.3 447.3 497.8 447.3 504.9 447.4 524.7 447.5 534.8 447.5 488.4 447.6 487.8 447.7 515.5 447.8 516.6 447.8 508.4 447.9 524.1 448.0 474.8 448.1 481.9 448.1 520.4 448.2 504.7 448.3 515.5 448.3 523.9 448.4 519.7 448.5 511.2 448.6 520.9 448.6 540.3 448.7 513.7 448.8 500.4 448.8 518.3 448.9 526.5 449.0 473.1 449.1 553.0 449.1 501.3 449.2 505.2 449.3 505.4 449.3 508.1 449.4 453.5 449.5 504.4 449.6 519.8 449.6 471.2 449.7 533.8 449.8 536.4 449.8 518.3 449.9 490.5 450.0 507.3 450.1 503.3 450.1 521.7 450.2 513.0 450.3 520.2 450.4 520.5 450.4 502.9 450.5 641.7 450.6 489.3 450.6 493.0 450.7 505.3 450.8 518.6 450.9 512.1 450.9 514.7 451.0 508.2 451.1 489.8 451.1 533.5 451.2 476.8 451.3 484.0 451.4 505.0 451.4 523.1 451.5 496.4 451.6 499.7 451.6 495.1 451.7 551.0 451.8 527.7 451.9 490.1 451.9 521.8 452.0 490.7 452.1 502.4 452.2 513.8 452.2 530.7 452.3 522.3 452.4 500.6 452.4 486.0 452.5 534.4 452.6 534.5 452.7 500.4 452.7 484.7 452.8 499.8 452.9 485.5 452.9 530.6 453.0 518.7 453.1 528.1 453.2 542.6 453.2 498.4 453.3 527.6 453.4 507.2 453.4 497.1 453.5 492.2 453.6 531.5 453.7 485.8 453.7 485.8 453.8 470.7 453.9 501.4 453.9 477.5 454.0 530.1 454.1 540.9 454.2 496.4 454.2 542.9 454.3 447.8 454.4 492.0 454.5 460.8 454.5 479.4 454.6 518.8 454.7 479.5 454.7 486.3 454.8 534.6 454.9 485.4 455.0 520.5 455.0 491.3 455.1 535.7 455.2 521.1 455.2 488.6 455.3 512.4 455.4 519.9 455.5 525.0 455.5 532.5 455.6 517.9 455.7 503.8 455.7 513.3 455.8 514.8 455.9 476.2 456.0 452.5 456.0 459.8 456.1 494.1 456.2 530.5 456.2 508.4 456.3 479.2 456.4 468.5 456.5 496.2 456.5 476.4 456.6 522.4 456.7 507.5 456.8 499.3 456.8 497.7 456.9 451.5 457.0 480.6 457.0 505.7 457.1 456.3 457.2 510.9 457.3 480.7 457.3 493.5 457.4 478.8 457.5 510.5 457.5 503.8 457.6 493.6 457.7 489.1 457.8 499.9 457.8 504.5 457.9 530.3 458.0 484.6 458.0 506.4 458.1 476.0 458.2 527.0 458.3 542.7 458.3 454.8 458.4 514.0 458.5 523.7 458.6 483.1 458.6 470.6 458.7 526.2 458.8 506.1 458.8 555.3 458.9 531.4 459.0 508.9 459.1 544.8 459.1 494.7 459.2 518.5 459.3 504.5 459.3 500.4 459.4 517.7 459.5 469.8 459.6 524.0 459.6 567.1 459.7 497.5 459.8 497.7 459.8 492.5 459.9 497.1 460.0 501.2 460.1 517.0 460.1 505.5 460.2 515.4 460.3 533.7 460.3 529.3 460.4 495.3 460.5 523.9 460.6 467.3 460.6 491.3 460.7 476.4 460.8 481.9 460.9 482.2 460.9 517.7 461.0 498.4 461.1 506.8 461.1 518.2 461.2 504.5 461.3 530.4 461.4 506.5 461.4 499.9 461.5 502.6 461.6 515.2 461.6 499.4 461.7 522.9 461.8 532.6 461.9 526.0 461.9 520.0 462.0 530.1 462.1 531.8 462.1 502.1 462.2 537.5 462.3 531.6 462.4 529.3 462.4 465.3 462.5 478.7 462.6 512.8 462.7 532.2 462.7 548.8 462.8 512.7 462.9 550.3 462.9 482.2 463.0 504.1 463.1 483.5 463.2 529.5 463.2 510.3 463.3 520.8 463.4 498.9 463.4 501.8 463.5 507.9 463.6 474.4 463.7 512.7 463.7 520.7 463.8 473.8 463.9 526.0 463.9 486.4 464.0 527.9 464.1 521.7 464.2 514.8 464.2 536.3 464.3 487.9 464.4 470.1 464.4 513.9 464.5 491.4 464.6 469.7 464.7 496.1 464.7 516.2 464.8 464.5 464.9 530.0 465.0 508.2 465.0 513.6 465.1 473.6 465.2 546.5 465.2 468.4 465.3 477.2 465.4 501.9 465.5 522.7 465.5 503.8 465.6 485.6 465.7 532.5 465.7 537.2 465.8 534.0 465.9 508.3 466.0 512.2 466.0 499.9 466.1 521.7 466.2 502.9 466.2 493.0 466.3 494.4 466.4 563.7 466.5 513.2 466.5 547.4 466.6 511.4 466.7 477.5 466.8 493.3 466.8 525.1 466.9 502.1 467.0 505.3 467.0 530.2 467.1 494.9 467.2 471.2 467.3 501.3 467.3 514.1 467.4 510.7 467.5 539.1 467.5 499.7 467.6 525.0 467.7 513.8 467.8 558.1 467.8 500.6 467.9 469.6 468.0 541.7 468.0 481.4 468.1 517.4 468.2 468.0 468.3 501.7 468.3 476.5 468.4 522.8 468.5 516.3 468.5 482.5 468.6 508.1 468.7 478.6 468.8 525.1 468.8 475.9 468.9 528.0 469.0 543.6 469.1 473.3 469.1 522.1 469.2 533.6 469.3 519.2 469.3 520.2 469.4 533.9 469.5 516.3 469.6 492.0 469.6 520.6 469.7 522.7 469.8 497.6 469.8 489.2 469.9 523.4 470.0 501.4 470.1 512.5 470.1 490.3 470.2 538.3 470.3 488.4 470.3 511.3 470.4 523.9 470.5 482.6 470.6 517.5 470.6 476.4 470.7 498.2 470.8 538.6 470.9 490.9 470.9 476.9 471.0 472.1 471.1 533.6 471.1 519.6 471.2 532.1 471.3 479.2 471.4 492.1 471.4 512.5 471.5 501.9 471.6 484.6 471.6 499.2 471.7 490.0 471.8 488.6 471.9 562.1 471.9 500.4 472.0 498.5 472.1 472.7 472.1 516.9 472.2 507.1 472.3 492.4 472.4 502.0 472.4 484.6 472.5 483.8 472.6 533.0 472.6 487.2 472.7 496.4 472.8 497.1 472.9 511.9 472.9 512.3 473.0 523.9 473.1 495.5 473.2 492.8 473.2 522.6 473.3 455.3 473.4 555.0 473.4 508.9 473.5 495.5 473.6 500.1 473.7 482.0 473.7 499.5 473.8 498.5 473.9 516.1 473.9 503.0 474.0 502.5 474.1 503.2 474.2 536.2 474.2 491.1 474.3 527.5 474.4 485.0 474.4 547.6 474.5 515.2 474.6 493.8 474.7 499.8 474.7 509.1 474.8 523.1 474.9 498.7 474.9 552.8 475.0 517.0 475.1 534.6 475.2 533.8 475.2 513.0 475.3 490.0 475.4 492.6 475.5 512.8 475.5 477.2 475.6 520.7 475.7 499.4 475.7 480.8 475.8 501.3 475.9 509.0 476.0 507.0 476.0 556.5 476.1 530.3 476.2 512.6 476.2 515.3 476.3 504.9 476.4 517.7 476.5 544.4 476.5 476.3 476.6 509.3 476.7 482.2 476.7 544.2 476.8 514.9 476.9 552.8 477.0 493.8 477.0 475.7 477.1 508.1 477.2 539.2 477.3 490.9 477.3 489.1 477.4 477.5 477.5 510.9 477.5 520.6 477.6 502.1 477.7 552.3 477.8 509.3 477.8 518.1 477.9 507.9 478.0 489.7 478.0 494.8 478.1 552.4 478.2 479.6 478.3 504.1 478.3 485.0 478.4 511.9 478.5 504.8 478.5 557.1 478.6 513.3 478.7 546.9 478.8 485.9 478.8 508.8 478.9 508.6 479.0 508.0 479.0 514.0 479.1 539.8 479.2 503.1 479.3 523.7 479.3 521.4 479.4 476.0 479.5 551.0 479.6 526.8 479.6 541.8 479.7 489.2 479.8 487.3 479.8 502.5 479.9 526.1 480.0 508.3 480.1 475.7 480.1 524.5 480.2 460.4 480.3 510.7 480.3 500.4 480.4 464.1 480.5 510.8 480.6 518.6 480.6 500.5 480.7 502.8 480.8 514.7 480.8 519.7 480.9 515.3 481.0 495.0 481.1 492.8 481.1 500.1 481.2 479.9 481.3 464.4 481.4 497.6 481.4 513.8 481.5 491.9 481.6 460.1 481.6 518.6 481.7 493.0 481.8 499.5 481.9 530.8 481.9 499.9 482.0 551.4 482.1 481.7 482.1 496.3 482.2 528.4 482.3 477.1 482.4 534.3 482.4 509.6 482.5 481.4 482.6 546.7 482.6 607.1 482.7 553.4 482.8 503.3 482.9 488.6 482.9 483.8 483.0 524.5 483.1 455.3 483.1 486.7 483.2 530.0 483.3 495.1 483.4 536.4 483.4 568.2 483.5 534.1 483.6 518.9 483.7 507.6 483.7 498.1 483.8 502.7 483.9 505.5 483.9 485.6 484.0 498.5 484.1 530.8 484.2 527.4 484.2 518.4 484.3 517.6 484.4 470.3 484.4 532.8 484.5 485.3 484.6 530.5 484.7 540.8 484.7 492.6 484.8 504.0 484.9 515.7 484.9 498.4 485.0 505.2 485.1 478.2 485.2 490.1 485.2 467.4 485.3 509.0 485.4 533.3 485.5 528.9 485.5 523.7 485.6 499.0 485.7 469.3 485.7 496.1 485.8 481.6 485.9 507.2 486.0 498.4 486.0 502.6 486.1 497.3 486.2 531.8 486.2 525.3 486.3 473.5 486.4 493.4 486.5 497.8 486.5 530.8 486.6 513.3 486.7 540.9 486.7 503.4 486.8 488.5 486.9 479.2 487.0 512.7 487.0 482.7 487.1 502.7 487.2 528.0 487.2 484.7 487.3 514.1 487.4 537.4 487.5 548.4 487.5 504.4 487.6 512.9 487.7 488.2 487.8 453.2 487.8 517.3 487.9 487.0 488.0 521.9 488.0 539.3 488.1 519.0 488.2 546.7 488.3 526.5 488.3 518.1 488.4 510.6 488.5 537.0 488.5 515.5 488.6 487.3 488.7 527.7 488.8 494.4 488.8 513.3 488.9 549.0 489.0 467.8 489.0 462.0 489.1 473.1 489.2 496.1 489.3 483.4 489.3 519.2 489.4 533.0 489.5 510.2 489.5 550.0 489.6 480.3 489.7 485.1 489.8 509.8 489.8 494.9 489.9 510.9 490.0 507.2 490.1 517.4 490.1 492.9 490.2 519.6 490.3 478.3 490.3 498.7 490.4 494.3 490.5 537.1 490.6 562.5 490.6 479.6 490.7 528.2 490.8 505.6 490.8 511.0 490.9 483.6 491.0 504.1 491.1 529.8 491.1 533.6 491.2 520.0 491.3 531.8 491.3 556.5 491.4 558.8 491.5 489.5 491.6 504.4 491.6 495.7 491.7 515.2 491.8 510.3 491.9 539.1 491.9 508.4 492.0 501.4 492.1 494.5 492.1 531.7 492.2 471.8 492.3 505.0 492.4 513.5 492.4 567.6 492.5 485.4 492.6 524.1 492.6 534.0 492.7 521.1 492.8 511.8 492.9 518.8 492.9 446.7 493.0 484.5 493.1 494.6 493.1 477.1 493.2 504.8 493.3 499.9 493.4 530.2 493.4 515.6 493.5 556.2 493.6 517.2 493.6 500.4 493.7 514.1 493.8 476.9 493.9 500.6 493.9 522.2 494.0 504.5 494.1 509.8 494.2 486.9 494.2 530.8 494.3 469.3 494.4 510.2 494.4 468.5 494.5 543.5 494.6 503.4 494.7 524.6 494.7 536.3 494.8 502.2 494.9 476.2 494.9 465.6 495.0 512.9 495.1 496.7 495.2 509.8 495.2 497.4 495.3 478.7 495.4 458.9 495.4 512.0 495.5 498.7 495.6 485.3 495.7 479.5 495.7 472.7 495.8 480.1 495.9 524.8 496.0 500.6 496.0 480.0 496.1 491.4 496.2 521.5 496.2 522.7 496.3 505.1 496.4 501.5 496.5 498.2 496.5 484.7 496.6 499.5 496.7 507.9 496.7 510.9 496.8 533.5 496.9 491.1 497.0 512.4 497.0 518.3 497.1 519.3 497.2 523.7 497.2 517.9 497.3 518.5 497.4 440.9 497.5 471.3 497.5 506.9 497.6 524.1 497.7 473.3 497.7 520.0 497.8 517.2 497.9 507.6 498.0 457.2 498.0 496.4 498.1 511.2 498.2 525.4 498.3 527.3 498.3 515.6 498.4 466.4 498.5 485.3 498.5 482.0 498.6 496.4 498.7 503.4 498.8 497.4 498.8 507.2 498.9 469.6 499.0 510.9 499.0 466.0 499.1 526.5 499.2 465.9 499.3 493.9 499.3 515.7 499.4 497.1 499.5 507.0 499.5 519.1 499.6 532.0 499.7 479.2 499.8 535.6 499.8 540.0 499.9 492.7 500.0 539.6 500.1 480.4 500.1 508.4 500.2 529.1 500.3 484.5 500.3 525.5 500.4 526.0 500.5 500.4 500.6 520.3 500.6 495.7 500.7 478.8 500.8 495.5 500.8 513.3 500.9 530.5 501.0 542.8 501.1 534.9 501.1 469.3 501.2 529.8 501.3 529.2 501.3 492.1 501.4 487.2 501.5 564.1 501.6 494.7 501.6 543.5 501.7 522.5 501.8 494.2 501.8 555.8 501.9 503.7 502.0 493.8 502.1 503.5 502.1 526.7 502.2 506.0 502.3 502.1 502.4 537.5 502.4 510.0 502.5 490.8 502.6 459.0 502.6 495.4 502.7 494.4 502.8 498.7 502.9 489.4 502.9 466.9 503.0 538.9 503.1 494.8 503.1 494.9 503.2 451.3 503.3 503.6 503.4 539.0 503.4 532.9 503.5 522.4 503.6 506.0 503.6 521.5 503.7 457.7 503.8 527.9 503.9 474.7 503.9 522.5 504.0 550.2 504.1 531.0 504.2 513.5 504.2 499.9 504.3 527.1 504.4 483.2 504.4 528.4 504.5 581.7 504.6 496.9 504.7 529.0 504.7 506.2 504.8 507.3 504.9 500.2 504.9 464.9 505.0 479.6 505.1 472.2 505.2 514.9 505.2 511.5 505.3 503.0 505.4 497.4 505.4 530.8 505.5 490.4 505.6 528.0 505.7 522.9 505.7 510.7 505.8 516.4 505.9 533.1 505.9 483.6 506.0 508.2 506.1 492.8 506.2 510.1 506.2 540.4 506.3 512.3 506.4 512.7 506.5 521.0 506.5 491.4 506.6 513.4 506.7 494.2 506.7 533.5 506.8 514.6 506.9 519.9 507.0 524.7 507.0 497.3 507.1 564.4 507.2 502.3 507.2 528.7 507.3 476.2 507.4 476.9 507.5 505.3 507.5 512.1 507.6 518.9 507.7 493.8 507.7 541.1 507.8 529.7 507.9 554.0 508.0 520.0 508.0 518.0 508.1 530.4 508.2 519.6 508.2 530.3 508.3 475.3 508.4 470.5 508.5 507.7 508.5 487.2 508.6 507.5 508.7 485.8 508.8 500.4 508.8 505.5 508.9 474.5 509.0 542.2 509.0 491.8 509.1 504.4 509.2 498.5 509.3 502.7 509.3 478.6 509.4 560.4 509.5 517.8 509.5 476.1 509.6 474.0 509.7 482.5 509.8 547.4 509.8 476.0 509.9 498.5 510.0 459.6 510.0 490.9 510.1 494.3 510.2 489.3 510.3 515.0 510.3 500.5 510.4 539.7 510.5 504.4 510.6 502.2 510.6 500.7 510.7 488.8 510.8 503.2 510.8 498.0 510.9 517.8 511.0 537.4 511.1 506.4 511.1 552.4 511.2 480.3 511.3 522.0 511.3 492.2 511.4 499.2 511.5 509.9 511.6 510.1 511.6 542.1 511.7 529.8 511.8 528.4 511.8 524.0 511.9 500.1 512.0 528.0 512.1 522.1 512.1 533.1 512.2 539.9 512.3 531.6 512.3 528.3 512.4 486.3 512.5 497.6 512.6 526.8 512.6 500.3 512.7 525.4 512.8 491.9 512.9 539.0 512.9 529.7 513.0 516.3 513.1 542.7 513.1 463.9 513.2 497.1 513.3 508.6 513.4 525.4 513.4 469.9 513.5 532.5" fill="none" stroke="#0072BD" stroke-width="0.75" stroke-linejoin="bevel"/>
<rect x="24" y="508" width="10" height="2" fill="#94344f"/>
<rect x="40" y="508" width="10" height="2" fill="#94344f"/>
<rect x="56" y="508" width="10" height="2" fill="#94344f"/>
<rect x="72" y="508" width="10" height="2" fill="#94344f"/>
<rect x="88" y="508" width="10" height="2" fill="#94344f"/>
<rect x="104" y="508" width="10" height="2" fill="#94344f"/>
<rect x="120" y="508" width="10" height="2" fill="#94344f"/>
<rect x="136" y="508" width="10" height="2" fill="#94344f"/>
<rect x="152" y="508" width="10" height="2" fill="#94344f"/>
<rect x="168" y="508" width="10" height="2" fill="#94344f"/>
<rect x="184" y="508" width="10" height="2" fill="#94344f"/>
<rect x="200" y="508" width="10" height="2" fill="#94344f"/>
<rect x="216" y="508" width="10" height="2" fill="#94344f"/>
<rect x="232" y="508" width="10" height="2" fill="#94344f"/>
<rect x="248" y="508" width="10" height="2" fill="#94344f"/>
<rect x="264" y="508" width="10" height="2" fill="#94344f"/>
<rect x="280" y="508" width="10" height="2" fill="#94344f"/>
<rect x="296" y="508" width="10" height="2" fill="#94344f"/>
<rect x="312" y="508" width="10" height="2" fill="#94344f"/>
<rect x="328" y="508" width="10" height="2" fill="#94344f"/>
<rect x="344" y="508" width="10" height="2" fill="#94344f"/>
<rect x="360" y="508" width="10" height="2" fill="#94344f"/>
<rect x="376" y="508" width="10" height="2" fill="#94344f"/>
<rect x="392" y="508" width="10" height="2" fill="#94344f"/>
<rect x="408" y="508" width="10" height="2" fill="#94344f"/>
<rect x="424" y="508" width="10" height="2" fill="#94344f"/>
<rect x="440" y="508" width="10" height="2" fill="#94344f"/>
<rect x="456" y="508" width="10" height="2" fill="#94344f"/>
<rect x="472" y="508" width="10" height="2" fill="#94344f"/>
<rect x="488" y="508" width="10" height="2" fill="#94344f"/>
<rect x="504" y="508" width="10" height="2" fill="#94344f"/>
<text x="269.2" y="365" class="ttl" text-anchor="middle" textLength="147.6" lengthAdjust="spacingAndGlyphs">Standardized Residuals</text>
<text x="269.5" y="679" class="lab" text-anchor="middle">Time</text>
<rect x="361.5" y="381.5" width="141" height="16" fill="#fff" stroke="#262626" stroke-width="1"/><line x1="364.6" x2="404.1" y1="389.4" y2="389.4" stroke="#0072BD" stroke-width="1"/><text x="408.5" y="393.0" class="lg">EGARCH_CHFDiff</text>
</svg>
<div id="t">
<div class="pt" style="top:9px">Parameters</div>
<div class="ul" style="top:24px"></div>
<div class="tb" style="left:539px;top:35px;width:487px;height:294px"></div>
<div class="hd" style="left:540px;top:36px;width:487px;height:26px"></div>
<div class="hl" style="left:540px;top:62px;width:487px"></div>
<div class="hl" style="left:540px;top:84px;width:487px"></div>
<div class="alt" style="left:540px;top:85px;width:487px"></div>
<div class="hl" style="left:540px;top:106px;width:487px"></div>
<div class="hl" style="left:540px;top:128px;width:487px"></div>
<div class="alt" style="left:540px;top:129px;width:487px"></div>
<div class="hl" style="left:540px;top:150px;width:487px"></div>
<div class="vl" style="left:635px;top:36px;height:114px"></div>
<div class="vl" style="left:732px;top:36px;height:114px"></div>
<div class="vl" style="left:834px;top:36px;height:114px"></div>
<div class="vl" style="left:930px;top:36px;height:114px"></div>
<div class="ht" style="left:543px;top:42px">Parameter</div>
<div class="ht" style="left:639px;top:42px">Value</div>
<div class="ht" style="left:736px;top:42px">Standard Error</div>
<div class="ht" style="left:838px;top:42px">t Statistic</div>
<div class="ht" style="left:934px;top:42px">P-Value</div>
<div class="ct" style="left:543px;top:66px">Constant</div>
<div class="ct r" style="left:636px;width:93px;top:66px">-0.1020</div>
<div class="ct r" style="left:733px;width:98px;top:66px">0.0163</div>
<div class="ct r" style="left:835px;width:92px;top:66px">-6.2556</div>
<div class="ct r" style="left:931px;width:93px;top:66px">0.0000</div>
<div class="ct" style="left:543px;top:88px">GARCH{1}</div>
<div class="ct r" style="left:636px;width:93px;top:88px">0.9880</div>
<div class="ct r" style="left:733px;width:98px;top:88px">0.0018</div>
<div class="ct r" style="left:835px;width:92px;top:88px">536.9569</div>
<div class="ct r" style="left:931px;width:93px;top:88px">0</div>
<div class="ct" style="left:543px;top:110px">ARCH{1}</div>
<div class="ct r" style="left:636px;width:93px;top:110px">0.1191</div>
<div class="ct r" style="left:733px;width:98px;top:110px">0.0096</div>
<div class="ct r" style="left:835px;width:92px;top:110px">12.4495</div>
<div class="ct r" style="left:931px;width:93px;top:110px">0.0000</div>
<div class="ct" style="left:543px;top:132px">Leverage{1}</div>
<div class="ct r" style="left:636px;width:93px;top:132px">0.0072</div>
<div class="ct r" style="left:733px;width:98px;top:132px">0.0041</div>
<div class="ct r" style="left:835px;width:92px;top:132px">1.7370</div>
<div class="ct r" style="left:931px;width:93px;top:132px">0.0824</div>
<div class="pt" style="top:352px">Goodness of Fit</div>
<div class="ul" style="top:367px"></div>
<div class="tb" style="left:539px;top:378px;width:487px;height:293px"></div>
<div class="hd" style="left:540px;top:379px;width:487px;height:26px"></div>
<div class="hl" style="left:540px;top:405px;width:487px"></div>
<div class="hl" style="left:540px;top:427px;width:487px"></div>
<div class="alt" style="left:540px;top:428px;width:487px"></div>
<div class="hl" style="left:540px;top:449px;width:487px"></div>
<div class="vl" style="left:783px;top:379px;height:70px"></div>
<div class="ht" style="left:543px;top:385px">Measure</div>
<div class="ht" style="left:787px;top:385px">Value</div>
<div class="ct" style="left:543px;top:409px">AIC</div>
<div class="ct r" style="left:784px;width:240px;top:409px">-2.8726e+04</div>
<div class="ct" style="left:543px;top:431px">BIC</div>
<div class="ct r" style="left:784px;width:240px;top:431px">-2.8700e+04</div>
</div>
</body></html>
